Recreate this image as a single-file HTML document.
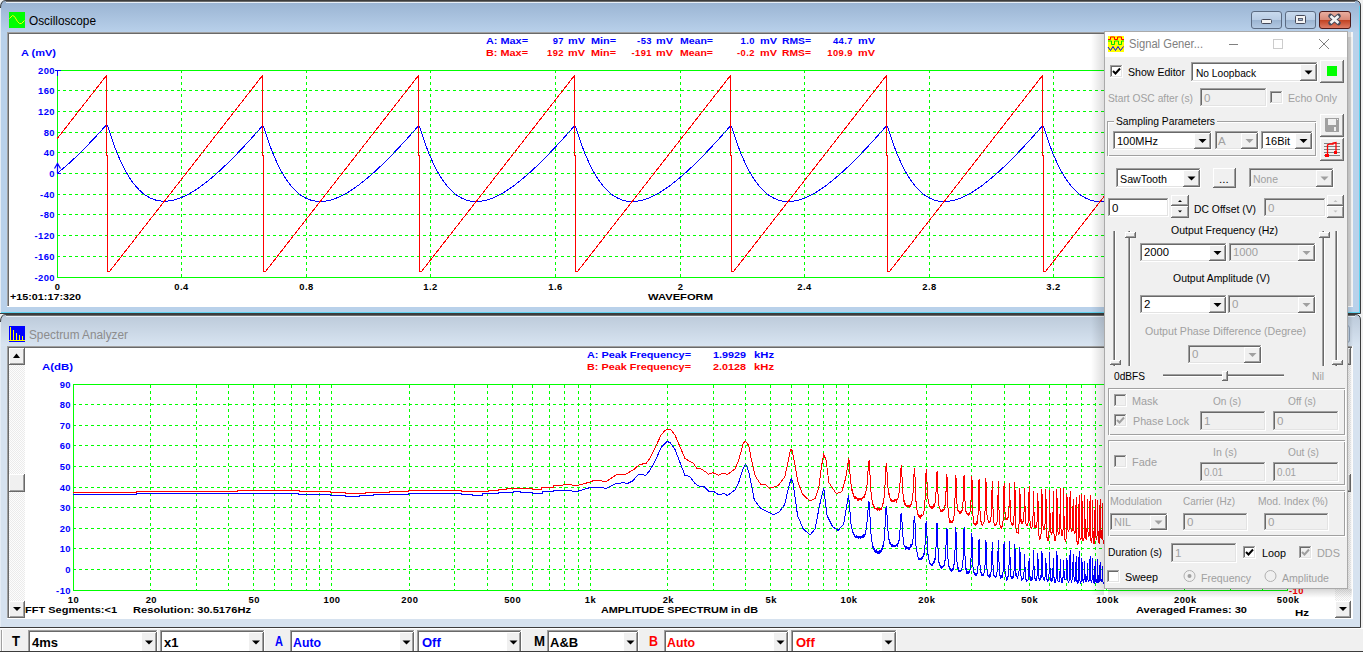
<!DOCTYPE html><html><head><meta charset="utf-8"><style>html,body{margin:0;padding:0;background:#f0f0f0;overflow:hidden}svg{display:block}</style></head><body><svg width="1363" height="652" viewBox="0 0 1363 652"><defs><linearGradient id="gAct" x1="0" y1="0" x2="0" y2="1"><stop offset="0" stop-color="#99b3d2"/><stop offset="1" stop-color="#b8d0ea"/></linearGradient><linearGradient id="gInact" x1="0" y1="0" x2="0" y2="1"><stop offset="0" stop-color="#bccada"/><stop offset="1" stop-color="#d8e4f1"/></linearGradient><linearGradient id="gCap1251" x1="0" y1="0" x2="0" y2="1"><stop offset="0" stop-color="#c9daee"/><stop offset="0.48" stop-color="#b9cde5"/><stop offset="0.5" stop-color="#9bb4d1"/><stop offset="1" stop-color="#b4cae3"/></linearGradient><linearGradient id="gCap1285" x1="0" y1="0" x2="0" y2="1"><stop offset="0" stop-color="#c9daee"/><stop offset="0.48" stop-color="#b9cde5"/><stop offset="0.5" stop-color="#9bb4d1"/><stop offset="1" stop-color="#b4cae3"/></linearGradient><linearGradient id="gClose" x1="0" y1="0" x2="0" y2="1"><stop offset="0" stop-color="#eab0a2"/><stop offset="0.48" stop-color="#d98a78"/><stop offset="0.5" stop-color="#c0401f"/><stop offset="1" stop-color="#e0806a"/></linearGradient><pattern id="dith" width="2" height="2" patternUnits="userSpaceOnUse"><rect width="2" height="2" fill="#fdfdfd"/><rect width="1" height="1" fill="#ebebeb"/><rect x="1" y="1" width="1" height="1" fill="#ebebeb"/></pattern><linearGradient id="shB" x1="0" y1="0" x2="0" y2="1"><stop offset="0" stop-color="#000" stop-opacity="0.16"/><stop offset="1" stop-color="#000" stop-opacity="0"/></linearGradient><linearGradient id="shR" x1="0" y1="0" x2="1" y2="0"><stop offset="0" stop-color="#000" stop-opacity="0.12"/><stop offset="1" stop-color="#000" stop-opacity="0"/></linearGradient><linearGradient id="shL" x1="0" y1="0" x2="1" y2="0"><stop offset="0" stop-color="#000" stop-opacity="0"/><stop offset="1" stop-color="#000" stop-opacity="0.13"/></linearGradient></defs><rect x="0" y="0" width="1363" height="652" fill="#f0f0f0" />
<path d="M0,6 Q0,0 6,0 L1355,0 Q1361,0 1361,6 L1361,314 L0,314 Z" fill="#b9d1ea"/>
<path d="M1,6 Q1,1 6,1 L1355,1 Q1360,1 1360,6 L1360,32 L1,32 Z" fill="url(#gAct)"/>
<path d="M0.5,8 Q0.5,0.5 6,0.5 L1355,0.5 Q1360.5,0.5 1360.5,6 L1360.5,313.5 L0,313.5" fill="none" stroke="#3c3c3c" stroke-width="1"/>
<rect x="0" y="8" width="1" height="305" fill="#e4ecf5" />
<rect x="6" y="1" width="1349" height="1" fill="#6b6b6b" />
<rect x="6" y="2" width="1349" height="1" fill="#e8f0f8" />
<rect x="1359" y="6" width="1" height="307" fill="#5fd3f0" />
<rect x="1" y="312" width="1359" height="1" fill="#5fd3f0" />
<path d="M0,320 Q0,314 6,314 L1355,314 Q1361,314 1361,320 L1361,628 L0,628 Z" fill="#d6e2ef"/>
<path d="M1,320 Q1,315 6,315 L1355,315 Q1360,315 1360,320 L1360,346 L1,346 Z" fill="url(#gInact)"/>
<path d="M0.5,322 Q0.5,314.5 6,314.5 L1355,314.5 Q1360.5,314.5 1360.5,320 L1360.5,627.5 L0,627.5" fill="none" stroke="#3c3c3c" stroke-width="1"/>
<rect x="0" y="322" width="1" height="305" fill="#e4ecf5" />
<rect x="6" y="315" width="1349" height="1" fill="#6b6b6b" />
<rect x="6" y="316" width="1349" height="1" fill="#e8f0f8" />
<rect x="9" y="34" width="1343" height="272" fill="#ffffff" />
<rect x="7" y="32" width="1345" height="1" fill="#a0a0a0" />
<rect x="7" y="32" width="1" height="274" fill="#a0a0a0" />
<rect x="8" y="33" width="1344" height="1" fill="#696969" />
<rect x="8" y="33" width="1" height="273" fill="#696969" />
<rect x="7" y="306" width="1346" height="1" fill="#ffffff" />
<rect x="1352" y="32" width="1" height="275" fill="#ffffff" />
<rect x="9" y="348" width="1343" height="270" fill="#ffffff" />
<rect x="7" y="346" width="1345" height="1" fill="#a0a0a0" />
<rect x="7" y="346" width="1" height="272" fill="#a0a0a0" />
<rect x="8" y="347" width="1344" height="1" fill="#696969" />
<rect x="8" y="347" width="1" height="271" fill="#696969" />
<rect x="7" y="618" width="1346" height="1" fill="#ffffff" />
<rect x="1352" y="346" width="1" height="273" fill="#ffffff" />
<text x="29" y="25" font-size="12" fill="#000000" font-weight="normal" text-anchor="start" font-family="Liberation Sans" textLength="67" lengthAdjust="spacingAndGlyphs" >Oscilloscope</text>
<rect x="9" y="12" width="16" height="16" fill="#00ff00" />
<path d="M9.5,18.5 L12.5,15.5 L14.5,16.5 L17.5,21.5 L19.5,23.5 L21.5,23.5 L24.5,20.5" fill="none" stroke="#ffff00" stroke-width="1"/>
<text x="29" y="339" font-size="12" fill="#8c8c8c" font-weight="normal" text-anchor="start" font-family="Liberation Sans" textLength="99" lengthAdjust="spacingAndGlyphs" >Spectrum Analyzer</text>
<rect x="9" y="326" width="16" height="16" fill="#0000ff" />
<rect x="10" y="327" width="1" height="14" fill="#ffff00" />
<rect x="13" y="330" width="1" height="11" fill="#ffff00" />
<rect x="16" y="333" width="1" height="8" fill="#ffff00" />
<rect x="19" y="335" width="1" height="6" fill="#ffff00" />
<rect x="22" y="336" width="1" height="5" fill="#ffff00" />
<rect x="9" y="340" width="16" height="1" fill="#ffff00" />
<rect x="1251.5" y="11.5" width="30" height="17" rx="2.5" fill="url(#gCap1251)" stroke="#5b6b82"/>
<rect x="1261.5" y="19.5" width="10" height="4" rx="1" fill="#f4f4f4" stroke="#454a5a"/>
<rect x="1285.5" y="11.5" width="30" height="17" rx="2.5" fill="url(#gCap1285)" stroke="#5b6b82"/>
<rect x="1295.5" y="15.5" width="10" height="8" rx="1" fill="#f4f4f4" stroke="#454a5a"/>
<rect x="1298.5" y="18.5" width="4" height="2" fill="#9db5d2" stroke="#454a5a" stroke-width="0.8"/>
<rect x="1319.5" y="11.5" width="31" height="17" rx="2.5" fill="url(#gClose)" stroke="#4d1a1a"/>
<path d="M1330.5,16 L1338.5,23 M1338.5,16 L1330.5,23" stroke="#454a5a" stroke-width="4.6" stroke-linecap="round"/>
<path d="M1330.5,16 L1338.5,23 M1338.5,16 L1330.5,23" stroke="#f4f4f4" stroke-width="2.8" stroke-linecap="butt"/>
<rect x="1347" y="32" width="4" height="274" fill="#d6d6d6" />
<rect x="1351" y="32" width="2" height="274" fill="#f6f6f6" />
<line x1="57" y1="90.5" x2="1104" y2="90.5" stroke="#00ff00" stroke-dasharray="3 3" shape-rendering="crispEdges"/>
<line x1="57" y1="111.5" x2="1104" y2="111.5" stroke="#00ff00" stroke-dasharray="3 3" shape-rendering="crispEdges"/>
<line x1="57" y1="132.5" x2="1104" y2="132.5" stroke="#00ff00" stroke-dasharray="3 3" shape-rendering="crispEdges"/>
<line x1="57" y1="152.5" x2="1104" y2="152.5" stroke="#00ff00" stroke-dasharray="3 3" shape-rendering="crispEdges"/>
<line x1="57" y1="173.5" x2="1104" y2="173.5" stroke="#00ff00" stroke-dasharray="3 3" shape-rendering="crispEdges"/>
<line x1="57" y1="194.5" x2="1104" y2="194.5" stroke="#00ff00" stroke-dasharray="3 3" shape-rendering="crispEdges"/>
<line x1="57" y1="214.5" x2="1104" y2="214.5" stroke="#00ff00" stroke-dasharray="3 3" shape-rendering="crispEdges"/>
<line x1="57" y1="235.5" x2="1104" y2="235.5" stroke="#00ff00" stroke-dasharray="3 3" shape-rendering="crispEdges"/>
<line x1="57" y1="256.5" x2="1104" y2="256.5" stroke="#00ff00" stroke-dasharray="3 3" shape-rendering="crispEdges"/>
<line x1="181.5" y1="70" x2="181.5" y2="277" stroke="#00ff00" stroke-dasharray="3 3" shape-rendering="crispEdges"/>
<line x1="306.5" y1="70" x2="306.5" y2="277" stroke="#00ff00" stroke-dasharray="3 3" shape-rendering="crispEdges"/>
<line x1="430.5" y1="70" x2="430.5" y2="277" stroke="#00ff00" stroke-dasharray="3 3" shape-rendering="crispEdges"/>
<line x1="555.5" y1="70" x2="555.5" y2="277" stroke="#00ff00" stroke-dasharray="3 3" shape-rendering="crispEdges"/>
<line x1="680.5" y1="70" x2="680.5" y2="277" stroke="#00ff00" stroke-dasharray="3 3" shape-rendering="crispEdges"/>
<line x1="804.5" y1="70" x2="804.5" y2="277" stroke="#00ff00" stroke-dasharray="3 3" shape-rendering="crispEdges"/>
<line x1="929.5" y1="70" x2="929.5" y2="277" stroke="#00ff00" stroke-dasharray="3 3" shape-rendering="crispEdges"/>
<line x1="1053.5" y1="70" x2="1053.5" y2="277" stroke="#00ff00" stroke-dasharray="3 3" shape-rendering="crispEdges"/>
<rect x="57" y="70" width="1047" height="1" fill="#00ff00" />
<rect x="57" y="277" width="1047" height="1" fill="#00ff00" />
<rect x="57" y="70" width="1" height="208" fill="#00ff00" />
<rect x="55" y="70" width="6" height="1" fill="#0000ff" />
<rect x="57" y="70" width="1" height="6" fill="#0000ff" />
<text x="55" y="74" font-size="9.4" fill="#0000ff" font-weight="bold" text-anchor="end" font-family="Liberation Sans" letter-spacing="0.45" >200</text>
<text x="55" y="94" font-size="9.4" fill="#0000ff" font-weight="bold" text-anchor="end" font-family="Liberation Sans" letter-spacing="0.45" >160</text>
<text x="55" y="115" font-size="9.4" fill="#0000ff" font-weight="bold" text-anchor="end" font-family="Liberation Sans" letter-spacing="0.45" >120</text>
<text x="55" y="136" font-size="9.4" fill="#0000ff" font-weight="bold" text-anchor="end" font-family="Liberation Sans" letter-spacing="0.45" >80</text>
<text x="55" y="156" font-size="9.4" fill="#0000ff" font-weight="bold" text-anchor="end" font-family="Liberation Sans" letter-spacing="0.45" >40</text>
<text x="55" y="177" font-size="9.4" fill="#0000ff" font-weight="bold" text-anchor="end" font-family="Liberation Sans" letter-spacing="0.45" >0</text>
<text x="55" y="198" font-size="9.4" fill="#0000ff" font-weight="bold" text-anchor="end" font-family="Liberation Sans" letter-spacing="0.45" >-40</text>
<text x="55" y="218" font-size="9.4" fill="#0000ff" font-weight="bold" text-anchor="end" font-family="Liberation Sans" letter-spacing="0.45" >-80</text>
<text x="55" y="239" font-size="9.4" fill="#0000ff" font-weight="bold" text-anchor="end" font-family="Liberation Sans" letter-spacing="0.45" >-120</text>
<text x="55" y="260" font-size="9.4" fill="#0000ff" font-weight="bold" text-anchor="end" font-family="Liberation Sans" letter-spacing="0.45" >-160</text>
<text x="55" y="281" font-size="9.4" fill="#0000ff" font-weight="bold" text-anchor="end" font-family="Liberation Sans" letter-spacing="0.45" >-200</text>
<text x="21" y="56" font-size="9.4" fill="#0000ff" font-weight="bold" text-anchor="start" font-family="Liberation Sans" textLength="35" lengthAdjust="spacingAndGlyphs" >A (mV)</text>
<text x="57.5" y="290" font-size="9.4" fill="#000" font-weight="bold" text-anchor="middle" font-family="Liberation Sans" letter-spacing="0.45" >0</text>
<text x="181.5" y="290" font-size="9.4" fill="#000" font-weight="bold" text-anchor="middle" font-family="Liberation Sans" letter-spacing="0.45" >0.4</text>
<text x="306.5" y="290" font-size="9.4" fill="#000" font-weight="bold" text-anchor="middle" font-family="Liberation Sans" letter-spacing="0.45" >0.8</text>
<text x="430.5" y="290" font-size="9.4" fill="#000" font-weight="bold" text-anchor="middle" font-family="Liberation Sans" letter-spacing="0.45" >1.2</text>
<text x="555.5" y="290" font-size="9.4" fill="#000" font-weight="bold" text-anchor="middle" font-family="Liberation Sans" letter-spacing="0.45" >1.6</text>
<text x="680.5" y="290" font-size="9.4" fill="#000" font-weight="bold" text-anchor="middle" font-family="Liberation Sans" letter-spacing="0.45" >2</text>
<text x="804.5" y="290" font-size="9.4" fill="#000" font-weight="bold" text-anchor="middle" font-family="Liberation Sans" letter-spacing="0.45" >2.4</text>
<text x="929.5" y="290" font-size="9.4" fill="#000" font-weight="bold" text-anchor="middle" font-family="Liberation Sans" letter-spacing="0.45" >2.8</text>
<text x="1053.5" y="290" font-size="9.4" fill="#000" font-weight="bold" text-anchor="middle" font-family="Liberation Sans" letter-spacing="0.45" >3.2</text>
<text x="10" y="300" font-size="9.4" fill="#000" font-weight="bold" text-anchor="start" font-family="Liberation Sans" textLength="71" lengthAdjust="spacingAndGlyphs" >+15:01:17:320</text>
<text x="680.5" y="300" font-size="9.4" fill="#000" font-weight="bold" text-anchor="middle" font-family="Liberation Sans" textLength="65" lengthAdjust="spacingAndGlyphs" >WAVEFORM</text>
<text x="486" y="44" font-size="9.4" fill="#0000ff" font-weight="bold" text-anchor="start" font-family="Liberation Sans" textLength="42" lengthAdjust="spacingAndGlyphs" >A: Max=</text>
<text x="564" y="44" font-size="9.4" fill="#0000ff" font-weight="bold" text-anchor="end" font-family="Liberation Sans" letter-spacing="0.45" >97</text>
<text x="568" y="44" font-size="9.4" fill="#0000ff" font-weight="bold" text-anchor="start" font-family="Liberation Sans" textLength="17" lengthAdjust="spacingAndGlyphs" >mV</text>
<text x="591" y="44" font-size="9.4" fill="#0000ff" font-weight="bold" text-anchor="start" font-family="Liberation Sans" textLength="25" lengthAdjust="spacingAndGlyphs" >Min=</text>
<text x="652" y="44" font-size="9.4" fill="#0000ff" font-weight="bold" text-anchor="end" font-family="Liberation Sans" letter-spacing="0.45" >-53</text>
<text x="656" y="44" font-size="9.4" fill="#0000ff" font-weight="bold" text-anchor="start" font-family="Liberation Sans" textLength="17" lengthAdjust="spacingAndGlyphs" >mV</text>
<text x="680" y="44" font-size="9.4" fill="#0000ff" font-weight="bold" text-anchor="start" font-family="Liberation Sans" textLength="33" lengthAdjust="spacingAndGlyphs" >Mean=</text>
<text x="755" y="44" font-size="9.4" fill="#0000ff" font-weight="bold" text-anchor="end" font-family="Liberation Sans" letter-spacing="0.45" >1.0</text>
<text x="760" y="44" font-size="9.4" fill="#0000ff" font-weight="bold" text-anchor="start" font-family="Liberation Sans" textLength="17" lengthAdjust="spacingAndGlyphs" >mV</text>
<text x="782" y="44" font-size="9.4" fill="#0000ff" font-weight="bold" text-anchor="start" font-family="Liberation Sans" textLength="29" lengthAdjust="spacingAndGlyphs" >RMS=</text>
<text x="853" y="44" font-size="9.4" fill="#0000ff" font-weight="bold" text-anchor="end" font-family="Liberation Sans" letter-spacing="0.45" >44.7</text>
<text x="858" y="44" font-size="9.4" fill="#0000ff" font-weight="bold" text-anchor="start" font-family="Liberation Sans" textLength="17" lengthAdjust="spacingAndGlyphs" >mV</text>
<text x="486" y="56" font-size="9.4" fill="#ff0000" font-weight="bold" text-anchor="start" font-family="Liberation Sans" textLength="42" lengthAdjust="spacingAndGlyphs" >B: Max=</text>
<text x="564" y="56" font-size="9.4" fill="#ff0000" font-weight="bold" text-anchor="end" font-family="Liberation Sans" letter-spacing="0.45" >192</text>
<text x="568" y="56" font-size="9.4" fill="#ff0000" font-weight="bold" text-anchor="start" font-family="Liberation Sans" textLength="17" lengthAdjust="spacingAndGlyphs" >mV</text>
<text x="591" y="56" font-size="9.4" fill="#ff0000" font-weight="bold" text-anchor="start" font-family="Liberation Sans" textLength="25" lengthAdjust="spacingAndGlyphs" >Min=</text>
<text x="652" y="56" font-size="9.4" fill="#ff0000" font-weight="bold" text-anchor="end" font-family="Liberation Sans" letter-spacing="0.45" >-191</text>
<text x="656" y="56" font-size="9.4" fill="#ff0000" font-weight="bold" text-anchor="start" font-family="Liberation Sans" textLength="17" lengthAdjust="spacingAndGlyphs" >mV</text>
<text x="680" y="56" font-size="9.4" fill="#ff0000" font-weight="bold" text-anchor="start" font-family="Liberation Sans" textLength="33" lengthAdjust="spacingAndGlyphs" >Mean=</text>
<text x="755" y="56" font-size="9.4" fill="#ff0000" font-weight="bold" text-anchor="end" font-family="Liberation Sans" letter-spacing="0.45" >-0.2</text>
<text x="760" y="56" font-size="9.4" fill="#ff0000" font-weight="bold" text-anchor="start" font-family="Liberation Sans" textLength="17" lengthAdjust="spacingAndGlyphs" >mV</text>
<text x="782" y="56" font-size="9.4" fill="#ff0000" font-weight="bold" text-anchor="start" font-family="Liberation Sans" textLength="29" lengthAdjust="spacingAndGlyphs" >RMS=</text>
<text x="853" y="56" font-size="9.4" fill="#ff0000" font-weight="bold" text-anchor="end" font-family="Liberation Sans" letter-spacing="0.45" >109.9</text>
<text x="858" y="56" font-size="9.4" fill="#ff0000" font-weight="bold" text-anchor="start" font-family="Liberation Sans" textLength="17" lengthAdjust="spacingAndGlyphs" >mV</text>
<path d="M57.5,173 L57.5,163.5 M54.5,168.5 L57.5,163.5 L60.5,168.5" fill="none" stroke="#0000ff" stroke-width="1.2"/>
<rect x="57" y="173" width="4" height="1" fill="#0000ff" />
<path d="M57.00,173.50 L57.50,173.11 L58.00,172.71 L58.50,172.31 L59.00,171.91 L59.50,171.50 L60.00,171.09 L60.50,170.68 L61.00,170.27 L61.50,169.85 L62.00,169.43 L62.50,169.01 L63.00,168.59 L63.50,168.16 L64.00,167.74 L64.50,167.30 L65.00,166.87 L65.50,166.44 L66.00,166.00 L66.50,165.56 L67.00,165.12 L67.50,164.67 L68.00,164.22 L68.50,163.78 L69.00,163.32 L69.50,162.87 L70.00,162.42 L70.50,161.96 L71.00,161.50 L71.50,161.04 L72.00,160.57 L72.50,160.11 L73.00,159.64 L73.50,159.17 L74.00,158.70 L74.50,158.23 L75.00,157.75 L75.50,157.27 L76.00,156.79 L76.50,156.31 L77.00,155.83 L77.50,155.35 L78.00,154.86 L78.50,154.37 L79.00,153.88 L79.50,153.39 L80.00,152.90 L80.50,152.40 L81.00,151.91 L81.50,151.41 L82.00,150.91 L82.50,150.41 L83.00,149.91 L83.50,149.40 L84.00,148.89 L84.50,148.39 L85.00,147.88 L85.50,147.37 L86.00,146.86 L86.50,146.34 L87.00,145.83 L87.50,145.31 L88.00,144.79 L88.50,144.28 L89.00,143.75 L89.50,143.23 L90.00,142.71 L90.50,142.19 L91.00,141.66 L91.50,141.13 L92.00,140.60 L92.50,140.07 L93.00,139.54 L93.50,139.01 L94.00,138.48 L94.50,137.94 L95.00,137.41 L95.50,136.87 L96.00,136.33 L96.50,135.79 L97.00,135.25 L97.50,134.71 L98.00,134.17 L98.50,133.63 L99.00,133.08 L99.50,132.54 L100.00,131.99 L100.50,131.44 L101.00,130.89 L101.50,130.34 L102.00,129.79 L102.50,129.24 L103.00,128.68 L103.50,128.13 L104.00,127.57 L104.50,127.02 L105.00,126.46 L105.50,125.90 L106.00,125.34 L106.50,124.79 L107.00,124.72 L107.50,125.38 L108.00,126.76 L108.50,128.39 L109.00,130.00 L109.50,131.60 L110.00,133.17 L110.50,134.72 L111.00,136.25 L111.50,137.76 L112.00,139.24 L112.50,140.69 L113.00,142.13 L113.50,143.53 L114.00,144.92 L114.50,146.28 L115.00,147.62 L115.50,148.94 L116.00,150.24 L116.50,151.51 L117.00,152.76 L117.50,153.99 L118.00,155.20 L118.50,156.39 L119.00,157.56 L119.50,158.71 L120.00,159.83 L120.50,160.94 L121.00,162.03 L121.50,163.10 L122.00,164.14 L122.50,165.17 L123.00,166.18 L123.50,167.18 L124.00,168.15 L124.50,169.11 L125.00,170.04 L125.50,170.96 L126.00,171.86 L126.50,172.75 L127.00,173.62 L127.50,174.47 L128.00,175.30 L128.50,176.12 L129.00,176.92 L129.50,177.70 L130.00,178.47 L130.50,179.22 L131.00,179.95 L131.50,180.67 L132.00,181.38 L132.50,182.07 L133.00,182.74 L133.50,183.40 L134.00,184.05 L134.50,184.68 L135.00,185.30 L135.50,185.90 L136.00,186.49 L136.50,187.06 L137.00,187.62 L137.50,188.17 L138.00,188.70 L138.50,189.22 L139.00,189.73 L139.50,190.22 L140.00,190.70 L140.50,191.17 L141.00,191.63 L141.50,192.07 L142.00,192.50 L142.50,192.92 L143.00,193.33 L143.50,193.72 L144.00,194.11 L144.50,194.48 L145.00,194.84 L145.50,195.19 L146.00,195.53 L146.50,195.86 L147.00,196.17 L147.50,196.48 L148.00,196.77 L148.50,197.06 L149.00,197.33 L149.50,197.59 L150.00,197.85 L150.50,198.09 L151.00,198.32 L151.50,198.54 L152.00,198.76 L152.50,198.96 L153.00,199.16 L153.50,199.34 L154.00,199.51 L154.50,199.68 L155.00,199.84 L155.50,199.99 L156.00,200.13 L156.50,200.26 L157.00,200.38 L157.50,200.49 L158.00,200.59 L158.50,200.69 L159.00,200.78 L159.50,200.86 L160.00,200.93 L160.50,200.99 L161.00,201.05 L161.50,201.09 L162.00,201.13 L162.50,201.17 L163.00,201.19 L163.50,201.21 L164.00,201.22 L164.50,201.22 L165.00,201.21 L165.50,201.20 L166.00,201.18 L166.50,201.15 L167.00,201.12 L167.50,201.08 L168.00,201.03 L168.50,200.98 L169.00,200.92 L169.50,200.85 L170.00,200.78 L170.50,200.70 L171.00,200.61 L171.50,200.52 L172.00,200.42 L172.50,200.32 L173.00,200.20 L173.50,200.09 L174.00,199.96 L174.50,199.84 L175.00,199.70 L175.50,199.56 L176.00,199.42 L176.50,199.26 L177.00,199.11 L177.50,198.94 L178.00,198.78 L178.50,198.60 L179.00,198.42 L179.50,198.24 L180.00,198.05 L180.50,197.86 L181.00,197.66 L181.50,197.45 L182.00,197.25 L182.50,197.03 L183.00,196.81 L183.50,196.59 L184.00,196.36 L184.50,196.13 L185.00,195.89 L185.50,195.65 L186.00,195.40 L186.50,195.15 L187.00,194.90 L187.50,194.64 L188.00,194.37 L188.50,194.10 L189.00,193.83 L189.50,193.56 L190.00,193.27 L190.50,192.99 L191.00,192.70 L191.50,192.41 L192.00,192.11 L192.50,191.81 L193.00,191.51 L193.50,191.20 L194.00,190.89 L194.50,190.57 L195.00,190.25 L195.50,189.93 L196.00,189.60 L196.50,189.27 L197.00,188.94 L197.50,188.60 L198.00,188.26 L198.50,187.91 L199.00,187.57 L199.50,187.22 L200.00,186.86 L200.50,186.50 L201.00,186.14 L201.50,185.78 L202.00,185.41 L202.50,185.04 L203.00,184.67 L203.50,184.30 L204.00,183.92 L204.50,183.53 L205.00,183.15 L205.50,182.76 L206.00,182.37 L206.50,181.98 L207.00,181.58 L207.50,181.18 L208.00,180.78 L208.50,180.38 L209.00,179.97 L209.50,179.56 L210.00,179.15 L210.50,178.73 L211.00,178.32 L211.50,177.90 L212.00,177.47 L212.50,177.05 L213.00,176.62 L213.50,176.19 L214.00,175.76 L214.50,175.32 L215.00,174.89 L215.50,174.45 L216.00,174.01 L216.50,173.56 L217.00,173.12 L217.50,172.67 L218.00,172.22 L218.50,171.77 L219.00,171.31 L219.50,170.86 L220.00,170.40 L220.50,169.94 L221.00,169.47 L221.50,169.01 L222.00,168.54 L222.50,168.07 L223.00,167.60 L223.50,167.13 L224.00,166.65 L224.50,166.18 L225.00,165.70 L225.50,165.22 L226.00,164.74 L226.50,164.25 L227.00,163.77 L227.50,163.28 L228.00,162.79 L228.50,162.30 L229.00,161.81 L229.50,161.32 L230.00,160.82 L230.50,160.32 L231.00,159.82 L231.50,159.32 L232.00,158.82 L232.50,158.32 L233.00,157.81 L233.50,157.30 L234.00,156.80 L234.50,156.29 L235.00,155.78 L235.50,155.26 L236.00,154.75 L236.50,154.23 L237.00,153.72 L237.50,153.20 L238.00,152.68 L238.50,152.16 L239.00,151.63 L239.50,151.11 L240.00,150.58 L240.50,150.06 L241.00,149.53 L241.50,149.00 L242.00,148.47 L242.50,147.94 L243.00,147.41 L243.50,146.87 L244.00,146.34 L244.50,145.80 L245.00,145.26 L245.50,144.72 L246.00,144.18 L246.50,143.64 L247.00,143.10 L247.50,142.56 L248.00,142.01 L248.50,141.47 L249.00,140.92 L249.50,140.37 L250.00,139.82 L250.50,139.27 L251.00,138.72 L251.50,138.17 L252.00,137.62 L252.50,137.07 L253.00,136.51 L253.50,135.95 L254.00,135.40 L254.50,134.84 L255.00,134.28 L255.50,133.72 L256.00,133.16 L256.50,132.60 L257.00,132.04 L257.50,131.48 L258.00,130.91 L258.50,130.35 L259.00,129.78 L259.50,129.21 L260.00,128.65 L260.50,128.08 L261.00,127.51 L261.50,126.94 L262.00,126.37 L262.50,125.81 L263.00,125.72 L263.50,126.37 L264.00,127.74 L264.50,129.36 L265.00,130.96 L265.50,132.54 L266.00,134.11 L266.50,135.65 L267.00,137.17 L267.50,138.66 L268.00,140.13 L268.50,141.58 L269.00,143.00 L269.50,144.40 L270.00,145.77 L270.50,147.13 L271.00,148.46 L271.50,149.77 L272.00,151.05 L272.50,152.32 L273.00,153.56 L273.50,154.78 L274.00,155.98 L274.50,157.16 L275.00,158.32 L275.50,159.46 L276.00,160.58 L276.50,161.68 L277.00,162.76 L277.50,163.82 L278.00,164.86 L278.50,165.88 L279.00,166.88 L279.50,167.86 L280.00,168.83 L280.50,169.78 L281.00,170.71 L281.50,171.62 L282.00,172.51 L282.50,173.39 L283.00,174.25 L283.50,175.09 L284.00,175.92 L284.50,176.73 L285.00,177.52 L285.50,178.30 L286.00,179.06 L286.50,179.80 L287.00,180.53 L287.50,181.25 L288.00,181.95 L288.50,182.63 L289.00,183.30 L289.50,183.95 L290.00,184.59 L290.50,185.22 L291.00,185.83 L291.50,186.42 L292.00,187.00 L292.50,187.57 L293.00,188.13 L293.50,188.67 L294.00,189.20 L294.50,189.71 L295.00,190.21 L295.50,190.70 L296.00,191.18 L296.50,191.64 L297.00,192.09 L297.50,192.53 L298.00,192.95 L298.50,193.37 L299.00,193.77 L299.50,194.16 L300.00,194.54 L300.50,194.91 L301.00,195.26 L301.50,195.61 L302.00,195.94 L302.50,196.26 L303.00,196.57 L303.50,196.88 L304.00,197.17 L304.50,197.45 L305.00,197.71 L305.50,197.97 L306.00,198.22 L306.50,198.46 L307.00,198.69 L307.50,198.91 L308.00,199.12 L308.50,199.32 L309.00,199.51 L309.50,199.69 L310.00,199.86 L310.50,200.02 L311.00,200.17 L311.50,200.32 L312.00,200.45 L312.50,200.58 L313.00,200.70 L313.50,200.81 L314.00,200.91 L314.50,201.00 L315.00,201.08 L315.50,201.16 L316.00,201.23 L316.50,201.29 L317.00,201.34 L317.50,201.38 L318.00,201.42 L318.50,201.45 L319.00,201.47 L319.50,201.48 L320.00,201.49 L320.50,201.49 L321.00,201.48 L321.50,201.46 L322.00,201.44 L322.50,201.41 L323.00,201.38 L323.50,201.33 L324.00,201.28 L324.50,201.23 L325.00,201.16 L325.50,201.09 L326.00,201.02 L326.50,200.93 L327.00,200.85 L327.50,200.75 L328.00,200.65 L328.50,200.54 L329.00,200.43 L329.50,200.31 L330.00,200.18 L330.50,200.05 L331.00,199.91 L331.50,199.77 L332.00,199.62 L332.50,199.47 L333.00,199.31 L333.50,199.15 L334.00,198.98 L334.50,198.80 L335.00,198.62 L335.50,198.43 L336.00,198.24 L336.50,198.05 L337.00,197.84 L337.50,197.64 L338.00,197.43 L338.50,197.21 L339.00,196.99 L339.50,196.77 L340.00,196.54 L340.50,196.30 L341.00,196.06 L341.50,195.82 L342.00,195.57 L342.50,195.32 L343.00,195.06 L343.50,194.80 L344.00,194.53 L344.50,194.26 L345.00,193.99 L345.50,193.71 L346.00,193.43 L346.50,193.14 L347.00,192.85 L347.50,192.55 L348.00,192.26 L348.50,191.95 L349.00,191.65 L349.50,191.34 L350.00,191.02 L350.50,190.71 L351.00,190.39 L351.50,190.06 L352.00,189.73 L352.50,189.40 L353.00,189.07 L353.50,188.73 L354.00,188.38 L354.50,188.04 L355.00,187.69 L355.50,187.34 L356.00,186.98 L356.50,186.62 L357.00,186.26 L357.50,185.90 L358.00,185.53 L358.50,185.16 L359.00,184.78 L359.50,184.41 L360.00,184.03 L360.50,183.64 L361.00,183.26 L361.50,182.87 L362.00,182.48 L362.50,182.08 L363.00,181.69 L363.50,181.29 L364.00,180.88 L364.50,180.48 L365.00,180.07 L365.50,179.66 L366.00,179.24 L366.50,178.83 L367.00,178.41 L367.50,177.99 L368.00,177.57 L368.50,177.14 L369.00,176.71 L369.50,176.28 L370.00,175.85 L370.50,175.41 L371.00,174.97 L371.50,174.53 L372.00,174.09 L372.50,173.65 L373.00,173.20 L373.50,172.75 L374.00,172.30 L374.50,171.85 L375.00,171.39 L375.50,170.93 L376.00,170.47 L376.50,170.01 L377.00,169.55 L377.50,169.08 L378.00,168.61 L378.50,168.15 L379.00,167.67 L379.50,167.20 L380.00,166.72 L380.50,166.25 L381.00,165.77 L381.50,165.29 L382.00,164.81 L382.50,164.32 L383.00,163.83 L383.50,163.35 L384.00,162.86 L384.50,162.37 L385.00,161.87 L385.50,161.38 L386.00,160.88 L386.50,160.38 L387.00,159.88 L387.50,159.38 L388.00,158.88 L388.50,158.37 L389.00,157.87 L389.50,157.36 L390.00,156.85 L390.50,156.34 L391.00,155.83 L391.50,155.32 L392.00,154.80 L392.50,154.29 L393.00,153.77 L393.50,153.25 L394.00,152.73 L394.50,152.21 L395.00,151.68 L395.50,151.16 L396.00,150.63 L396.50,150.11 L397.00,149.58 L397.50,149.05 L398.00,148.52 L398.50,147.98 L399.00,147.45 L399.50,146.92 L400.00,146.38 L400.50,145.84 L401.00,145.31 L401.50,144.77 L402.00,144.23 L402.50,143.68 L403.00,143.14 L403.50,142.60 L404.00,142.05 L404.50,141.51 L405.00,140.96 L405.50,140.41 L406.00,139.86 L406.50,139.31 L407.00,138.76 L407.50,138.21 L408.00,137.66 L408.50,137.10 L409.00,136.55 L409.50,135.99 L410.00,135.43 L410.50,134.88 L411.00,134.32 L411.50,133.76 L412.00,133.20 L412.50,132.63 L413.00,132.07 L413.50,131.51 L414.00,130.94 L414.50,130.38 L415.00,129.81 L415.50,129.25 L416.00,128.68 L416.50,128.11 L417.00,127.54 L417.50,126.97 L418.00,126.40 L418.50,125.83 L419.00,125.75 L419.50,126.39 L420.00,127.76 L420.50,129.38 L421.00,130.99 L421.50,132.57 L422.00,134.13 L422.50,135.68 L423.00,137.19 L423.50,138.69 L424.00,140.16 L424.50,141.60 L425.00,143.02 L425.50,144.42 L426.00,145.80 L426.50,147.15 L427.00,148.48 L427.50,149.79 L428.00,151.08 L428.50,152.34 L429.00,153.58 L429.50,154.80 L430.00,156.00 L430.50,157.18 L431.00,158.34 L431.50,159.48 L432.00,160.60 L432.50,161.70 L433.00,162.78 L433.50,163.84 L434.00,164.88 L434.50,165.90 L435.00,166.90 L435.50,167.88 L436.00,168.85 L436.50,169.80 L437.00,170.73 L437.50,171.64 L438.00,172.53 L438.50,173.41 L439.00,174.27 L439.50,175.11 L440.00,175.94 L440.50,176.75 L441.00,177.54 L441.50,178.32 L442.00,179.08 L442.50,179.82 L443.00,180.55 L443.50,181.26 L444.00,181.96 L444.50,182.65 L445.00,183.31 L445.50,183.97 L446.00,184.61 L446.50,185.23 L447.00,185.84 L447.50,186.44 L448.00,187.02 L448.50,187.59 L449.00,188.14 L449.50,188.68 L450.00,189.21 L450.50,189.72 L451.00,190.23 L451.50,190.71 L452.00,191.19 L452.50,191.65 L453.00,192.10 L453.50,192.54 L454.00,192.97 L454.50,193.38 L455.00,193.78 L455.50,194.17 L456.00,194.55 L456.50,194.92 L457.00,195.28 L457.50,195.62 L458.00,195.95 L458.50,196.27 L459.00,196.59 L459.50,196.89 L460.00,197.18 L460.50,197.46 L461.00,197.73 L461.50,197.98 L462.00,198.23 L462.50,198.47 L463.00,198.70 L463.50,198.92 L464.00,199.13 L464.50,199.33 L465.00,199.52 L465.50,199.70 L466.00,199.87 L466.50,200.03 L467.00,200.18 L467.50,200.33 L468.00,200.46 L468.50,200.59 L469.00,200.71 L469.50,200.82 L470.00,200.92 L470.50,201.01 L471.00,201.09 L471.50,201.17 L472.00,201.24 L472.50,201.30 L473.00,201.35 L473.50,201.39 L474.00,201.43 L474.50,201.46 L475.00,201.48 L475.50,201.49 L476.00,201.50 L476.50,201.50 L477.00,201.49 L477.50,201.47 L478.00,201.45 L478.50,201.42 L479.00,201.38 L479.50,201.34 L480.00,201.29 L480.50,201.23 L481.00,201.17 L481.50,201.10 L482.00,201.02 L482.50,200.94 L483.00,200.85 L483.50,200.76 L484.00,200.66 L484.50,200.55 L485.00,200.43 L485.50,200.31 L486.00,200.19 L486.50,200.06 L487.00,199.92 L487.50,199.78 L488.00,199.63 L488.50,199.48 L489.00,199.32 L489.50,199.15 L490.00,198.98 L490.50,198.81 L491.00,198.62 L491.50,198.44 L492.00,198.25 L492.50,198.05 L493.00,197.85 L493.50,197.64 L494.00,197.43 L494.50,197.22 L495.00,197.00 L495.50,196.77 L496.00,196.54 L496.50,196.31 L497.00,196.07 L497.50,195.82 L498.00,195.57 L498.50,195.32 L499.00,195.06 L499.50,194.80 L500.00,194.54 L500.50,194.27 L501.00,193.99 L501.50,193.71 L502.00,193.43 L502.50,193.14 L503.00,192.85 L503.50,192.56 L504.00,192.26 L504.50,191.96 L505.00,191.65 L505.50,191.34 L506.00,191.03 L506.50,190.71 L507.00,190.39 L507.50,190.06 L508.00,189.74 L508.50,189.40 L509.00,189.07 L509.50,188.73 L510.00,188.39 L510.50,188.04 L511.00,187.69 L511.50,187.34 L512.00,186.99 L512.50,186.63 L513.00,186.27 L513.50,185.90 L514.00,185.53 L514.50,185.16 L515.00,184.79 L515.50,184.41 L516.00,184.03 L516.50,183.65 L517.00,183.26 L517.50,182.87 L518.00,182.48 L518.50,182.09 L519.00,181.69 L519.50,181.29 L520.00,180.89 L520.50,180.48 L521.00,180.07 L521.50,179.66 L522.00,179.25 L522.50,178.83 L523.00,178.41 L523.50,177.99 L524.00,177.57 L524.50,177.14 L525.00,176.71 L525.50,176.28 L526.00,175.85 L526.50,175.41 L527.00,174.98 L527.50,174.54 L528.00,174.09 L528.50,173.65 L529.00,173.20 L529.50,172.75 L530.00,172.30 L530.50,171.85 L531.00,171.39 L531.50,170.94 L532.00,170.48 L532.50,170.01 L533.00,169.55 L533.50,169.08 L534.00,168.62 L534.50,168.15 L535.00,167.68 L535.50,167.20 L536.00,166.73 L536.50,166.25 L537.00,165.77 L537.50,165.29 L538.00,164.81 L538.50,164.32 L539.00,163.84 L539.50,163.35 L540.00,162.86 L540.50,162.37 L541.00,161.87 L541.50,161.38 L542.00,160.88 L542.50,160.38 L543.00,159.88 L543.50,159.38 L544.00,158.88 L544.50,158.38 L545.00,157.87 L545.50,157.36 L546.00,156.85 L546.50,156.34 L547.00,155.83 L547.50,155.32 L548.00,154.80 L548.50,154.29 L549.00,153.77 L549.50,153.25 L550.00,152.73 L550.50,152.21 L551.00,151.68 L551.50,151.16 L552.00,150.63 L552.50,150.11 L553.00,149.58 L553.50,149.05 L554.00,148.52 L554.50,147.99 L555.00,147.45 L555.50,146.92 L556.00,146.38 L556.50,145.85 L557.00,145.31 L557.50,144.77 L558.00,144.23 L558.50,143.69 L559.00,143.14 L559.50,142.60 L560.00,142.05 L560.50,141.51 L561.00,140.96 L561.50,140.41 L562.00,139.86 L562.50,139.31 L563.00,138.76 L563.50,138.21 L564.00,137.66 L564.50,137.10 L565.00,136.55 L565.50,135.99 L566.00,135.43 L566.50,134.88 L567.00,134.32 L567.50,133.76 L568.00,133.20 L568.50,132.64 L569.00,132.07 L569.50,131.51 L570.00,130.94 L570.50,130.38 L571.00,129.81 L571.50,129.25 L572.00,128.68 L572.50,128.11 L573.00,127.54 L573.50,126.97 L574.00,126.40 L574.50,125.84 L575.00,125.75 L575.50,126.40 L576.00,127.77 L576.50,129.39 L577.00,130.99 L577.50,132.57 L578.00,134.13 L578.50,135.68 L579.00,137.19 L579.50,138.69 L580.00,140.16 L580.50,141.60 L581.00,143.03 L581.50,144.42 L582.00,145.80 L582.50,147.15 L583.00,148.48 L583.50,149.79 L584.00,151.08 L584.50,152.34 L585.00,153.58 L585.50,154.80 L586.00,156.01 L586.50,157.18 L587.00,158.34 L587.50,159.48 L588.00,160.60 L588.50,161.70 L589.00,162.78 L589.50,163.84 L590.00,164.88 L590.50,165.90 L591.00,166.90 L591.50,167.89 L592.00,168.85 L592.50,169.80 L593.00,170.73 L593.50,171.64 L594.00,172.53 L594.50,173.41 L595.00,174.27 L595.50,175.11 L596.00,175.94 L596.50,176.75 L597.00,177.54 L597.50,178.32 L598.00,179.08 L598.50,179.82 L599.00,180.55 L599.50,181.27 L600.00,181.96 L600.50,182.65 L601.00,183.31 L601.50,183.97 L602.00,184.61 L602.50,185.23 L603.00,185.84 L603.50,186.44 L604.00,187.02 L604.50,187.59 L605.00,188.14 L605.50,188.68 L606.00,189.21 L606.50,189.72 L607.00,190.23 L607.50,190.71 L608.00,191.19 L608.50,191.65 L609.00,192.10 L609.50,192.54 L610.00,192.97 L610.50,193.38 L611.00,193.78 L611.50,194.17 L612.00,194.55 L612.50,194.92 L613.00,195.28 L613.50,195.62 L614.00,195.95 L614.50,196.28 L615.00,196.59 L615.50,196.89 L616.00,197.18 L616.50,197.46 L617.00,197.73 L617.50,197.98 L618.00,198.23 L618.50,198.47 L619.00,198.70 L619.50,198.92 L620.00,199.13 L620.50,199.33 L621.00,199.52 L621.50,199.70 L622.00,199.87 L622.50,200.03 L623.00,200.18 L623.50,200.33 L624.00,200.46 L624.50,200.59 L625.00,200.71 L625.50,200.82 L626.00,200.92 L626.50,201.01 L627.00,201.09 L627.50,201.17 L628.00,201.24 L628.50,201.30 L629.00,201.35 L629.50,201.39 L630.00,201.43 L630.50,201.46 L631.00,201.48 L631.50,201.49 L632.00,201.50 L632.50,201.50 L633.00,201.49 L633.50,201.47 L634.00,201.45 L634.50,201.42 L635.00,201.38 L635.50,201.34 L636.00,201.29 L636.50,201.23 L637.00,201.17 L637.50,201.10 L638.00,201.02 L638.50,200.94 L639.00,200.85 L639.50,200.76 L640.00,200.66 L640.50,200.55 L641.00,200.43 L641.50,200.31 L642.00,200.19 L642.50,200.06 L643.00,199.92 L643.50,199.78 L644.00,199.63 L644.50,199.48 L645.00,199.32 L645.50,199.15 L646.00,198.98 L646.50,198.81 L647.00,198.63 L647.50,198.44 L648.00,198.25 L648.50,198.05 L649.00,197.85 L649.50,197.64 L650.00,197.43 L650.50,197.22 L651.00,197.00 L651.50,196.77 L652.00,196.54 L652.50,196.31 L653.00,196.07 L653.50,195.82 L654.00,195.57 L654.50,195.32 L655.00,195.06 L655.50,194.80 L656.00,194.54 L656.50,194.27 L657.00,193.99 L657.50,193.71 L658.00,193.43 L658.50,193.14 L659.00,192.85 L659.50,192.56 L660.00,192.26 L660.50,191.96 L661.00,191.65 L661.50,191.34 L662.00,191.03 L662.50,190.71 L663.00,190.39 L663.50,190.06 L664.00,189.74 L664.50,189.40 L665.00,189.07 L665.50,188.73 L666.00,188.39 L666.50,188.04 L667.00,187.69 L667.50,187.34 L668.00,186.99 L668.50,186.63 L669.00,186.27 L669.50,185.90 L670.00,185.53 L670.50,185.16 L671.00,184.79 L671.50,184.41 L672.00,184.03 L672.50,183.65 L673.00,183.26 L673.50,182.87 L674.00,182.48 L674.50,182.09 L675.00,181.69 L675.50,181.29 L676.00,180.89 L676.50,180.48 L677.00,180.07 L677.50,179.66 L678.00,179.25 L678.50,178.83 L679.00,178.41 L679.50,177.99 L680.00,177.57 L680.50,177.14 L681.00,176.71 L681.50,176.28 L682.00,175.85 L682.50,175.41 L683.00,174.98 L683.50,174.54 L684.00,174.09 L684.50,173.65 L685.00,173.20 L685.50,172.75 L686.00,172.30 L686.50,171.85 L687.00,171.39 L687.50,170.94 L688.00,170.48 L688.50,170.01 L689.00,169.55 L689.50,169.08 L690.00,168.62 L690.50,168.15 L691.00,167.68 L691.50,167.20 L692.00,166.73 L692.50,166.25 L693.00,165.77 L693.50,165.29 L694.00,164.81 L694.50,164.32 L695.00,163.84 L695.50,163.35 L696.00,162.86 L696.50,162.37 L697.00,161.87 L697.50,161.38 L698.00,160.88 L698.50,160.38 L699.00,159.88 L699.50,159.38 L700.00,158.88 L700.50,158.38 L701.00,157.87 L701.50,157.36 L702.00,156.85 L702.50,156.34 L703.00,155.83 L703.50,155.32 L704.00,154.80 L704.50,154.29 L705.00,153.77 L705.50,153.25 L706.00,152.73 L706.50,152.21 L707.00,151.68 L707.50,151.16 L708.00,150.63 L708.50,150.11 L709.00,149.58 L709.50,149.05 L710.00,148.52 L710.50,147.99 L711.00,147.45 L711.50,146.92 L712.00,146.38 L712.50,145.85 L713.00,145.31 L713.50,144.77 L714.00,144.23 L714.50,143.69 L715.00,143.14 L715.50,142.60 L716.00,142.05 L716.50,141.51 L717.00,140.96 L717.50,140.41 L718.00,139.86 L718.50,139.31 L719.00,138.76 L719.50,138.21 L720.00,137.66 L720.50,137.10 L721.00,136.55 L721.50,135.99 L722.00,135.43 L722.50,134.88 L723.00,134.32 L723.50,133.76 L724.00,133.20 L724.50,132.64 L725.00,132.07 L725.50,131.51 L726.00,130.94 L726.50,130.38 L727.00,129.81 L727.50,129.25 L728.00,128.68 L728.50,128.11 L729.00,127.54 L729.50,126.97 L730.00,126.40 L730.50,125.84 L731.00,125.75 L731.50,126.40 L732.00,127.77 L732.50,129.39 L733.00,130.99 L733.50,132.57 L734.00,134.13 L734.50,135.68 L735.00,137.19 L735.50,138.69 L736.00,140.16 L736.50,141.60 L737.00,143.03 L737.50,144.42 L738.00,145.80 L738.50,147.15 L739.00,148.48 L739.50,149.79 L740.00,151.08 L740.50,152.34 L741.00,153.58 L741.50,154.80 L742.00,156.01 L742.50,157.18 L743.00,158.34 L743.50,159.48 L744.00,160.60 L744.50,161.70 L745.00,162.78 L745.50,163.84 L746.00,164.88 L746.50,165.90 L747.00,166.90 L747.50,167.89 L748.00,168.85 L748.50,169.80 L749.00,170.73 L749.50,171.64 L750.00,172.53 L750.50,173.41 L751.00,174.27 L751.50,175.11 L752.00,175.94 L752.50,176.75 L753.00,177.54 L753.50,178.32 L754.00,179.08 L754.50,179.82 L755.00,180.55 L755.50,181.27 L756.00,181.96 L756.50,182.65 L757.00,183.31 L757.50,183.97 L758.00,184.61 L758.50,185.23 L759.00,185.84 L759.50,186.44 L760.00,187.02 L760.50,187.59 L761.00,188.14 L761.50,188.68 L762.00,189.21 L762.50,189.72 L763.00,190.23 L763.50,190.71 L764.00,191.19 L764.50,191.65 L765.00,192.10 L765.50,192.54 L766.00,192.97 L766.50,193.38 L767.00,193.78 L767.50,194.17 L768.00,194.55 L768.50,194.92 L769.00,195.28 L769.50,195.62 L770.00,195.95 L770.50,196.28 L771.00,196.59 L771.50,196.89 L772.00,197.18 L772.50,197.46 L773.00,197.73 L773.50,197.98 L774.00,198.23 L774.50,198.47 L775.00,198.70 L775.50,198.92 L776.00,199.13 L776.50,199.33 L777.00,199.52 L777.50,199.70 L778.00,199.87 L778.50,200.03 L779.00,200.18 L779.50,200.33 L780.00,200.46 L780.50,200.59 L781.00,200.71 L781.50,200.82 L782.00,200.92 L782.50,201.01 L783.00,201.09 L783.50,201.17 L784.00,201.24 L784.50,201.30 L785.00,201.35 L785.50,201.39 L786.00,201.43 L786.50,201.46 L787.00,201.48 L787.50,201.49 L788.00,201.50 L788.50,201.50 L789.00,201.49 L789.50,201.47 L790.00,201.45 L790.50,201.42 L791.00,201.38 L791.50,201.34 L792.00,201.29 L792.50,201.23 L793.00,201.17 L793.50,201.10 L794.00,201.02 L794.50,200.94 L795.00,200.85 L795.50,200.76 L796.00,200.66 L796.50,200.55 L797.00,200.43 L797.50,200.31 L798.00,200.19 L798.50,200.06 L799.00,199.92 L799.50,199.78 L800.00,199.63 L800.50,199.48 L801.00,199.32 L801.50,199.15 L802.00,198.98 L802.50,198.81 L803.00,198.63 L803.50,198.44 L804.00,198.25 L804.50,198.05 L805.00,197.85 L805.50,197.64 L806.00,197.43 L806.50,197.22 L807.00,197.00 L807.50,196.77 L808.00,196.54 L808.50,196.31 L809.00,196.07 L809.50,195.82 L810.00,195.57 L810.50,195.32 L811.00,195.06 L811.50,194.80 L812.00,194.54 L812.50,194.27 L813.00,193.99 L813.50,193.71 L814.00,193.43 L814.50,193.14 L815.00,192.85 L815.50,192.56 L816.00,192.26 L816.50,191.96 L817.00,191.65 L817.50,191.34 L818.00,191.03 L818.50,190.71 L819.00,190.39 L819.50,190.06 L820.00,189.74 L820.50,189.40 L821.00,189.07 L821.50,188.73 L822.00,188.39 L822.50,188.04 L823.00,187.69 L823.50,187.34 L824.00,186.99 L824.50,186.63 L825.00,186.27 L825.50,185.90 L826.00,185.53 L826.50,185.16 L827.00,184.79 L827.50,184.41 L828.00,184.03 L828.50,183.65 L829.00,183.26 L829.50,182.87 L830.00,182.48 L830.50,182.09 L831.00,181.69 L831.50,181.29 L832.00,180.89 L832.50,180.48 L833.00,180.07 L833.50,179.66 L834.00,179.25 L834.50,178.83 L835.00,178.41 L835.50,177.99 L836.00,177.57 L836.50,177.14 L837.00,176.71 L837.50,176.28 L838.00,175.85 L838.50,175.41 L839.00,174.98 L839.50,174.54 L840.00,174.09 L840.50,173.65 L841.00,173.20 L841.50,172.75 L842.00,172.30 L842.50,171.85 L843.00,171.39 L843.50,170.94 L844.00,170.48 L844.50,170.01 L845.00,169.55 L845.50,169.08 L846.00,168.62 L846.50,168.15 L847.00,167.68 L847.50,167.20 L848.00,166.73 L848.50,166.25 L849.00,165.77 L849.50,165.29 L850.00,164.81 L850.50,164.32 L851.00,163.84 L851.50,163.35 L852.00,162.86 L852.50,162.37 L853.00,161.87 L853.50,161.38 L854.00,160.88 L854.50,160.38 L855.00,159.88 L855.50,159.38 L856.00,158.88 L856.50,158.38 L857.00,157.87 L857.50,157.36 L858.00,156.85 L858.50,156.34 L859.00,155.83 L859.50,155.32 L860.00,154.80 L860.50,154.29 L861.00,153.77 L861.50,153.25 L862.00,152.73 L862.50,152.21 L863.00,151.68 L863.50,151.16 L864.00,150.63 L864.50,150.11 L865.00,149.58 L865.50,149.05 L866.00,148.52 L866.50,147.99 L867.00,147.45 L867.50,146.92 L868.00,146.38 L868.50,145.85 L869.00,145.31 L869.50,144.77 L870.00,144.23 L870.50,143.69 L871.00,143.14 L871.50,142.60 L872.00,142.05 L872.50,141.51 L873.00,140.96 L873.50,140.41 L874.00,139.86 L874.50,139.31 L875.00,138.76 L875.50,138.21 L876.00,137.66 L876.50,137.10 L877.00,136.55 L877.50,135.99 L878.00,135.43 L878.50,134.88 L879.00,134.32 L879.50,133.76 L880.00,133.20 L880.50,132.64 L881.00,132.07 L881.50,131.51 L882.00,130.94 L882.50,130.38 L883.00,129.81 L883.50,129.25 L884.00,128.68 L884.50,128.11 L885.00,127.54 L885.50,126.97 L886.00,126.40 L886.50,125.84 L887.00,125.75 L887.50,126.40 L888.00,127.77 L888.50,129.39 L889.00,130.99 L889.50,132.57 L890.00,134.13 L890.50,135.68 L891.00,137.19 L891.50,138.69 L892.00,140.16 L892.50,141.60 L893.00,143.03 L893.50,144.42 L894.00,145.80 L894.50,147.15 L895.00,148.48 L895.50,149.79 L896.00,151.08 L896.50,152.34 L897.00,153.58 L897.50,154.80 L898.00,156.01 L898.50,157.18 L899.00,158.34 L899.50,159.48 L900.00,160.60 L900.50,161.70 L901.00,162.78 L901.50,163.84 L902.00,164.88 L902.50,165.90 L903.00,166.90 L903.50,167.89 L904.00,168.85 L904.50,169.80 L905.00,170.73 L905.50,171.64 L906.00,172.53 L906.50,173.41 L907.00,174.27 L907.50,175.11 L908.00,175.94 L908.50,176.75 L909.00,177.54 L909.50,178.32 L910.00,179.08 L910.50,179.82 L911.00,180.55 L911.50,181.27 L912.00,181.96 L912.50,182.65 L913.00,183.31 L913.50,183.97 L914.00,184.61 L914.50,185.23 L915.00,185.84 L915.50,186.44 L916.00,187.02 L916.50,187.59 L917.00,188.14 L917.50,188.68 L918.00,189.21 L918.50,189.72 L919.00,190.23 L919.50,190.71 L920.00,191.19 L920.50,191.65 L921.00,192.10 L921.50,192.54 L922.00,192.97 L922.50,193.38 L923.00,193.78 L923.50,194.17 L924.00,194.55 L924.50,194.92 L925.00,195.28 L925.50,195.62 L926.00,195.95 L926.50,196.28 L927.00,196.59 L927.50,196.89 L928.00,197.18 L928.50,197.46 L929.00,197.73 L929.50,197.98 L930.00,198.23 L930.50,198.47 L931.00,198.70 L931.50,198.92 L932.00,199.13 L932.50,199.33 L933.00,199.52 L933.50,199.70 L934.00,199.87 L934.50,200.03 L935.00,200.18 L935.50,200.33 L936.00,200.46 L936.50,200.59 L937.00,200.71 L937.50,200.82 L938.00,200.92 L938.50,201.01 L939.00,201.09 L939.50,201.17 L940.00,201.24 L940.50,201.30 L941.00,201.35 L941.50,201.39 L942.00,201.43 L942.50,201.46 L943.00,201.48 L943.50,201.49 L944.00,201.50 L944.50,201.50 L945.00,201.49 L945.50,201.47 L946.00,201.45 L946.50,201.42 L947.00,201.38 L947.50,201.34 L948.00,201.29 L948.50,201.23 L949.00,201.17 L949.50,201.10 L950.00,201.02 L950.50,200.94 L951.00,200.85 L951.50,200.76 L952.00,200.66 L952.50,200.55 L953.00,200.43 L953.50,200.31 L954.00,200.19 L954.50,200.06 L955.00,199.92 L955.50,199.78 L956.00,199.63 L956.50,199.48 L957.00,199.32 L957.50,199.15 L958.00,198.98 L958.50,198.81 L959.00,198.63 L959.50,198.44 L960.00,198.25 L960.50,198.05 L961.00,197.85 L961.50,197.64 L962.00,197.43 L962.50,197.22 L963.00,197.00 L963.50,196.77 L964.00,196.54 L964.50,196.31 L965.00,196.07 L965.50,195.82 L966.00,195.57 L966.50,195.32 L967.00,195.06 L967.50,194.80 L968.00,194.54 L968.50,194.27 L969.00,193.99 L969.50,193.71 L970.00,193.43 L970.50,193.14 L971.00,192.85 L971.50,192.56 L972.00,192.26 L972.50,191.96 L973.00,191.65 L973.50,191.34 L974.00,191.03 L974.50,190.71 L975.00,190.39 L975.50,190.06 L976.00,189.74 L976.50,189.40 L977.00,189.07 L977.50,188.73 L978.00,188.39 L978.50,188.04 L979.00,187.69 L979.50,187.34 L980.00,186.99 L980.50,186.63 L981.00,186.27 L981.50,185.90 L982.00,185.53 L982.50,185.16 L983.00,184.79 L983.50,184.41 L984.00,184.03 L984.50,183.65 L985.00,183.26 L985.50,182.87 L986.00,182.48 L986.50,182.09 L987.00,181.69 L987.50,181.29 L988.00,180.89 L988.50,180.48 L989.00,180.07 L989.50,179.66 L990.00,179.25 L990.50,178.83 L991.00,178.41 L991.50,177.99 L992.00,177.57 L992.50,177.14 L993.00,176.71 L993.50,176.28 L994.00,175.85 L994.50,175.41 L995.00,174.98 L995.50,174.54 L996.00,174.09 L996.50,173.65 L997.00,173.20 L997.50,172.75 L998.00,172.30 L998.50,171.85 L999.00,171.39 L999.50,170.94 L1000.00,170.48 L1000.50,170.01 L1001.00,169.55 L1001.50,169.08 L1002.00,168.62 L1002.50,168.15 L1003.00,167.68 L1003.50,167.20 L1004.00,166.73 L1004.50,166.25 L1005.00,165.77 L1005.50,165.29 L1006.00,164.81 L1006.50,164.32 L1007.00,163.84 L1007.50,163.35 L1008.00,162.86 L1008.50,162.37 L1009.00,161.87 L1009.50,161.38 L1010.00,160.88 L1010.50,160.38 L1011.00,159.88 L1011.50,159.38 L1012.00,158.88 L1012.50,158.38 L1013.00,157.87 L1013.50,157.36 L1014.00,156.85 L1014.50,156.34 L1015.00,155.83 L1015.50,155.32 L1016.00,154.80 L1016.50,154.29 L1017.00,153.77 L1017.50,153.25 L1018.00,152.73 L1018.50,152.21 L1019.00,151.68 L1019.50,151.16 L1020.00,150.63 L1020.50,150.11 L1021.00,149.58 L1021.50,149.05 L1022.00,148.52 L1022.50,147.99 L1023.00,147.45 L1023.50,146.92 L1024.00,146.38 L1024.50,145.85 L1025.00,145.31 L1025.50,144.77 L1026.00,144.23 L1026.50,143.69 L1027.00,143.14 L1027.50,142.60 L1028.00,142.05 L1028.50,141.51 L1029.00,140.96 L1029.50,140.41 L1030.00,139.86 L1030.50,139.31 L1031.00,138.76 L1031.50,138.21 L1032.00,137.66 L1032.50,137.10 L1033.00,136.55 L1033.50,135.99 L1034.00,135.43 L1034.50,134.88 L1035.00,134.32 L1035.50,133.76 L1036.00,133.20 L1036.50,132.64 L1037.00,132.07 L1037.50,131.51 L1038.00,130.94 L1038.50,130.38 L1039.00,129.81 L1039.50,129.25 L1040.00,128.68 L1040.50,128.11 L1041.00,127.54 L1041.50,126.97 L1042.00,126.40 L1042.50,125.84 L1043.00,125.75 L1043.50,126.40 L1044.00,127.77 L1044.50,129.39 L1045.00,130.99 L1045.50,132.57 L1046.00,134.13 L1046.50,135.68 L1047.00,137.19 L1047.50,138.69 L1048.00,140.16 L1048.50,141.60 L1049.00,143.03 L1049.50,144.42 L1050.00,145.80 L1050.50,147.15 L1051.00,148.48 L1051.50,149.79 L1052.00,151.08 L1052.50,152.34 L1053.00,153.58 L1053.50,154.80 L1054.00,156.01 L1054.50,157.18 L1055.00,158.34 L1055.50,159.48 L1056.00,160.60 L1056.50,161.70 L1057.00,162.78 L1057.50,163.84 L1058.00,164.88 L1058.50,165.90 L1059.00,166.90 L1059.50,167.89 L1060.00,168.85 L1060.50,169.80 L1061.00,170.73 L1061.50,171.64 L1062.00,172.53 L1062.50,173.41 L1063.00,174.27 L1063.50,175.11 L1064.00,175.94 L1064.50,176.75 L1065.00,177.54 L1065.50,178.32 L1066.00,179.08 L1066.50,179.82 L1067.00,180.55 L1067.50,181.27 L1068.00,181.96 L1068.50,182.65 L1069.00,183.31 L1069.50,183.97 L1070.00,184.61 L1070.50,185.23 L1071.00,185.84 L1071.50,186.44 L1072.00,187.02 L1072.50,187.59 L1073.00,188.14 L1073.50,188.68 L1074.00,189.21 L1074.50,189.72 L1075.00,190.23 L1075.50,190.71 L1076.00,191.19 L1076.50,191.65 L1077.00,192.10 L1077.50,192.54 L1078.00,192.97 L1078.50,193.38 L1079.00,193.78 L1079.50,194.17 L1080.00,194.55 L1080.50,194.92 L1081.00,195.28 L1081.50,195.62 L1082.00,195.95 L1082.50,196.28 L1083.00,196.59 L1083.50,196.89 L1084.00,197.18 L1084.50,197.46 L1085.00,197.73 L1085.50,197.98 L1086.00,198.23 L1086.50,198.47 L1087.00,198.70 L1087.50,198.92 L1088.00,199.13 L1088.50,199.33 L1089.00,199.52 L1089.50,199.70 L1090.00,199.87 L1090.50,200.03 L1091.00,200.18 L1091.50,200.33 L1092.00,200.46 L1092.50,200.59 L1093.00,200.71 L1093.50,200.82 L1094.00,200.92 L1094.50,201.01 L1095.00,201.09 L1095.50,201.17 L1096.00,201.24 L1096.50,201.30 L1097.00,201.35 L1097.50,201.39 L1098.00,201.43 L1098.50,201.46 L1099.00,201.48 L1099.50,201.49 L1100.00,201.50 L1100.50,201.50 L1101.00,201.49 L1101.50,201.47 L1102.00,201.45 L1102.50,201.42 L1103.00,201.38 L1103.50,201.34 L1104.00,201.29" fill="none" stroke="#0000ff" stroke-width="1" shape-rendering="crispEdges"/>
<path d="M57.00,138.90 L106.40,75.60 L107.90,271.00 L109.90,271.00 L262.40,75.60 L263.90,271.00 L265.90,271.00 L418.40,75.60 L419.90,271.00 L421.90,271.00 L574.40,75.60 L575.90,271.00 L577.90,271.00 L730.40,75.60 L731.90,271.00 L733.90,271.00 L886.40,75.60 L887.90,271.00 L889.90,271.00 L1042.40,75.60 L1043.90,271.00 L1045.90,271.00 L1104.00,196.56" fill="none" stroke="#ff0000" stroke-width="1" shape-rendering="crispEdges"/>
<line x1="73" y1="404.5" x2="1288" y2="404.5" stroke="#00ff00" stroke-dasharray="3 3" shape-rendering="crispEdges"/>
<line x1="73" y1="425.5" x2="1288" y2="425.5" stroke="#00ff00" stroke-dasharray="3 3" shape-rendering="crispEdges"/>
<line x1="73" y1="445.5" x2="1288" y2="445.5" stroke="#00ff00" stroke-dasharray="3 3" shape-rendering="crispEdges"/>
<line x1="73" y1="466.5" x2="1288" y2="466.5" stroke="#00ff00" stroke-dasharray="3 3" shape-rendering="crispEdges"/>
<line x1="73" y1="487.5" x2="1288" y2="487.5" stroke="#00ff00" stroke-dasharray="3 3" shape-rendering="crispEdges"/>
<line x1="73" y1="507.5" x2="1288" y2="507.5" stroke="#00ff00" stroke-dasharray="3 3" shape-rendering="crispEdges"/>
<line x1="73" y1="528.5" x2="1288" y2="528.5" stroke="#00ff00" stroke-dasharray="3 3" shape-rendering="crispEdges"/>
<line x1="73" y1="548.5" x2="1288" y2="548.5" stroke="#00ff00" stroke-dasharray="3 3" shape-rendering="crispEdges"/>
<line x1="73" y1="569.5" x2="1288" y2="569.5" stroke="#00ff00" stroke-dasharray="3 3" shape-rendering="crispEdges"/>
<line x1="150.5" y1="385" x2="150.5" y2="590" stroke="#00ff00" stroke-dasharray="3 3" shape-rendering="crispEdges"/>
<line x1="196.5" y1="385" x2="196.5" y2="590" stroke="#00ff00" stroke-dasharray="3 3" shape-rendering="crispEdges"/>
<line x1="228.5" y1="385" x2="228.5" y2="590" stroke="#00ff00" stroke-dasharray="3 3" shape-rendering="crispEdges"/>
<line x1="253.5" y1="385" x2="253.5" y2="590" stroke="#00ff00" stroke-dasharray="3 3" shape-rendering="crispEdges"/>
<line x1="274.5" y1="385" x2="274.5" y2="590" stroke="#00ff00" stroke-dasharray="3 3" shape-rendering="crispEdges"/>
<line x1="291.5" y1="385" x2="291.5" y2="590" stroke="#00ff00" stroke-dasharray="3 3" shape-rendering="crispEdges"/>
<line x1="306.5" y1="385" x2="306.5" y2="590" stroke="#00ff00" stroke-dasharray="3 3" shape-rendering="crispEdges"/>
<line x1="319.5" y1="385" x2="319.5" y2="590" stroke="#00ff00" stroke-dasharray="3 3" shape-rendering="crispEdges"/>
<line x1="331.5" y1="385" x2="331.5" y2="590" stroke="#00ff00" stroke-dasharray="3 3" shape-rendering="crispEdges"/>
<line x1="409.5" y1="385" x2="409.5" y2="590" stroke="#00ff00" stroke-dasharray="3 3" shape-rendering="crispEdges"/>
<line x1="454.5" y1="385" x2="454.5" y2="590" stroke="#00ff00" stroke-dasharray="3 3" shape-rendering="crispEdges"/>
<line x1="487.5" y1="385" x2="487.5" y2="590" stroke="#00ff00" stroke-dasharray="3 3" shape-rendering="crispEdges"/>
<line x1="512.5" y1="385" x2="512.5" y2="590" stroke="#00ff00" stroke-dasharray="3 3" shape-rendering="crispEdges"/>
<line x1="532.5" y1="385" x2="532.5" y2="590" stroke="#00ff00" stroke-dasharray="3 3" shape-rendering="crispEdges"/>
<line x1="549.5" y1="385" x2="549.5" y2="590" stroke="#00ff00" stroke-dasharray="3 3" shape-rendering="crispEdges"/>
<line x1="564.5" y1="385" x2="564.5" y2="590" stroke="#00ff00" stroke-dasharray="3 3" shape-rendering="crispEdges"/>
<line x1="578.5" y1="385" x2="578.5" y2="590" stroke="#00ff00" stroke-dasharray="3 3" shape-rendering="crispEdges"/>
<line x1="590.5" y1="385" x2="590.5" y2="590" stroke="#00ff00" stroke-dasharray="3 3" shape-rendering="crispEdges"/>
<line x1="667.5" y1="385" x2="667.5" y2="590" stroke="#00ff00" stroke-dasharray="3 3" shape-rendering="crispEdges"/>
<line x1="713.5" y1="385" x2="713.5" y2="590" stroke="#00ff00" stroke-dasharray="3 3" shape-rendering="crispEdges"/>
<line x1="745.5" y1="385" x2="745.5" y2="590" stroke="#00ff00" stroke-dasharray="3 3" shape-rendering="crispEdges"/>
<line x1="770.5" y1="385" x2="770.5" y2="590" stroke="#00ff00" stroke-dasharray="3 3" shape-rendering="crispEdges"/>
<line x1="791.5" y1="385" x2="791.5" y2="590" stroke="#00ff00" stroke-dasharray="3 3" shape-rendering="crispEdges"/>
<line x1="808.5" y1="385" x2="808.5" y2="590" stroke="#00ff00" stroke-dasharray="3 3" shape-rendering="crispEdges"/>
<line x1="823.5" y1="385" x2="823.5" y2="590" stroke="#00ff00" stroke-dasharray="3 3" shape-rendering="crispEdges"/>
<line x1="836.5" y1="385" x2="836.5" y2="590" stroke="#00ff00" stroke-dasharray="3 3" shape-rendering="crispEdges"/>
<line x1="848.5" y1="385" x2="848.5" y2="590" stroke="#00ff00" stroke-dasharray="3 3" shape-rendering="crispEdges"/>
<line x1="926.5" y1="385" x2="926.5" y2="590" stroke="#00ff00" stroke-dasharray="3 3" shape-rendering="crispEdges"/>
<line x1="971.5" y1="385" x2="971.5" y2="590" stroke="#00ff00" stroke-dasharray="3 3" shape-rendering="crispEdges"/>
<line x1="1004.5" y1="385" x2="1004.5" y2="590" stroke="#00ff00" stroke-dasharray="3 3" shape-rendering="crispEdges"/>
<line x1="1029.5" y1="385" x2="1029.5" y2="590" stroke="#00ff00" stroke-dasharray="3 3" shape-rendering="crispEdges"/>
<line x1="1049.5" y1="385" x2="1049.5" y2="590" stroke="#00ff00" stroke-dasharray="3 3" shape-rendering="crispEdges"/>
<line x1="1066.5" y1="385" x2="1066.5" y2="590" stroke="#00ff00" stroke-dasharray="3 3" shape-rendering="crispEdges"/>
<line x1="1081.5" y1="385" x2="1081.5" y2="590" stroke="#00ff00" stroke-dasharray="3 3" shape-rendering="crispEdges"/>
<line x1="1095.5" y1="385" x2="1095.5" y2="590" stroke="#00ff00" stroke-dasharray="3 3" shape-rendering="crispEdges"/>
<line x1="1106.5" y1="385" x2="1106.5" y2="590" stroke="#00ff00" stroke-dasharray="3 3" shape-rendering="crispEdges"/>
<line x1="1184.5" y1="385" x2="1184.5" y2="590" stroke="#00ff00" stroke-dasharray="3 3" shape-rendering="crispEdges"/>
<line x1="1230.5" y1="385" x2="1230.5" y2="590" stroke="#00ff00" stroke-dasharray="3 3" shape-rendering="crispEdges"/>
<line x1="1262.5" y1="385" x2="1262.5" y2="590" stroke="#00ff00" stroke-dasharray="3 3" shape-rendering="crispEdges"/>
<line x1="1287.5" y1="385" x2="1287.5" y2="590" stroke="#00ff00" stroke-dasharray="3 3" shape-rendering="crispEdges"/>
<rect x="73" y="384" width="1215" height="1" fill="#00ff00" />
<rect x="73" y="590" width="1215" height="1" fill="#00ff00" />
<rect x="73" y="384" width="1" height="207" fill="#00ff00" />
<text x="71" y="388" font-size="9.4" fill="#0000ff" font-weight="bold" text-anchor="end" font-family="Liberation Sans" letter-spacing="0.45" >90</text>
<text x="71" y="408" font-size="9.4" fill="#0000ff" font-weight="bold" text-anchor="end" font-family="Liberation Sans" letter-spacing="0.45" >80</text>
<text x="71" y="429" font-size="9.4" fill="#0000ff" font-weight="bold" text-anchor="end" font-family="Liberation Sans" letter-spacing="0.45" >70</text>
<text x="71" y="449" font-size="9.4" fill="#0000ff" font-weight="bold" text-anchor="end" font-family="Liberation Sans" letter-spacing="0.45" >60</text>
<text x="71" y="470" font-size="9.4" fill="#0000ff" font-weight="bold" text-anchor="end" font-family="Liberation Sans" letter-spacing="0.45" >50</text>
<text x="71" y="491" font-size="9.4" fill="#0000ff" font-weight="bold" text-anchor="end" font-family="Liberation Sans" letter-spacing="0.45" >40</text>
<text x="71" y="511" font-size="9.4" fill="#0000ff" font-weight="bold" text-anchor="end" font-family="Liberation Sans" letter-spacing="0.45" >30</text>
<text x="71" y="532" font-size="9.4" fill="#0000ff" font-weight="bold" text-anchor="end" font-family="Liberation Sans" letter-spacing="0.45" >20</text>
<text x="71" y="552" font-size="9.4" fill="#0000ff" font-weight="bold" text-anchor="end" font-family="Liberation Sans" letter-spacing="0.45" >10</text>
<text x="71" y="573" font-size="9.4" fill="#0000ff" font-weight="bold" text-anchor="end" font-family="Liberation Sans" letter-spacing="0.45" >0</text>
<text x="71" y="594" font-size="9.4" fill="#0000ff" font-weight="bold" text-anchor="end" font-family="Liberation Sans" letter-spacing="0.45" >-10</text>
<text x="42" y="370" font-size="9.4" fill="#0000ff" font-weight="bold" text-anchor="start" font-family="Liberation Sans" textLength="31" lengthAdjust="spacingAndGlyphs" >A(dB)</text>
<text x="1289" y="594" font-size="9.4" fill="#ff0000" font-weight="bold" text-anchor="start" font-family="Liberation Sans" letter-spacing="0.45" >-10</text>
<text x="73.5" y="603" font-size="9.4" fill="#000" font-weight="bold" text-anchor="middle" font-family="Liberation Sans" letter-spacing="0.45" >10</text>
<text x="151.31625387913914" y="603" font-size="9.4" fill="#000" font-weight="bold" text-anchor="middle" font-family="Liberation Sans" letter-spacing="0.45" >20</text>
<text x="254.18374612086086" y="603" font-size="9.4" fill="#000" font-weight="bold" text-anchor="middle" font-family="Liberation Sans" letter-spacing="0.45" >50</text>
<text x="332.0" y="603" font-size="9.4" fill="#000" font-weight="bold" text-anchor="middle" font-family="Liberation Sans" letter-spacing="0.45" >100</text>
<text x="409.81625387913914" y="603" font-size="9.4" fill="#000" font-weight="bold" text-anchor="middle" font-family="Liberation Sans" letter-spacing="0.45" >200</text>
<text x="512.6837461208609" y="603" font-size="9.4" fill="#000" font-weight="bold" text-anchor="middle" font-family="Liberation Sans" letter-spacing="0.45" >500</text>
<text x="590.5" y="603" font-size="9.4" fill="#000" font-weight="bold" text-anchor="middle" font-family="Liberation Sans" letter-spacing="0.45" >1k</text>
<text x="668.3162538791391" y="603" font-size="9.4" fill="#000" font-weight="bold" text-anchor="middle" font-family="Liberation Sans" letter-spacing="0.45" >2k</text>
<text x="771.1837461208609" y="603" font-size="9.4" fill="#000" font-weight="bold" text-anchor="middle" font-family="Liberation Sans" letter-spacing="0.45" >5k</text>
<text x="849.0" y="603" font-size="9.4" fill="#000" font-weight="bold" text-anchor="middle" font-family="Liberation Sans" letter-spacing="0.45" >10k</text>
<text x="926.8162538791391" y="603" font-size="9.4" fill="#000" font-weight="bold" text-anchor="middle" font-family="Liberation Sans" letter-spacing="0.45" >20k</text>
<text x="1029.6837461208609" y="603" font-size="9.4" fill="#000" font-weight="bold" text-anchor="middle" font-family="Liberation Sans" letter-spacing="0.45" >50k</text>
<text x="1107.5" y="603" font-size="9.4" fill="#000" font-weight="bold" text-anchor="middle" font-family="Liberation Sans" letter-spacing="0.45" >100k</text>
<text x="1185.3162538791391" y="603" font-size="9.4" fill="#000" font-weight="bold" text-anchor="middle" font-family="Liberation Sans" letter-spacing="0.45" >200k</text>
<text x="1288.1837461208609" y="603" font-size="9.4" fill="#000" font-weight="bold" text-anchor="middle" font-family="Liberation Sans" letter-spacing="0.45" >500k</text>
<text x="25" y="613" font-size="9.4" fill="#000" font-weight="bold" text-anchor="start" font-family="Liberation Sans" textLength="92" lengthAdjust="spacingAndGlyphs" >FFT Segments:&lt;1</text>
<text x="133" y="613" font-size="9.4" fill="#000" font-weight="bold" text-anchor="start" font-family="Liberation Sans" textLength="118" lengthAdjust="spacingAndGlyphs" >Resolution: 30.5176Hz</text>
<text x="601" y="613" font-size="9.4" fill="#000" font-weight="bold" text-anchor="start" font-family="Liberation Sans" textLength="157" lengthAdjust="spacingAndGlyphs" >AMPLITUDE SPECTRUM in dB</text>
<text x="1136" y="613" font-size="9.4" fill="#000" font-weight="bold" text-anchor="start" font-family="Liberation Sans" textLength="111" lengthAdjust="spacingAndGlyphs" >Averaged Frames: 30</text>
<text x="1295" y="616" font-size="9.4" fill="#000" font-weight="bold" text-anchor="start" font-family="Liberation Sans" textLength="14" lengthAdjust="spacingAndGlyphs" >Hz</text>
<text x="587" y="358" font-size="9.4" fill="#0000ff" font-weight="bold" text-anchor="start" font-family="Liberation Sans" textLength="104" lengthAdjust="spacingAndGlyphs" >A: Peak Frequency=</text>
<text x="713" y="358" font-size="9.4" fill="#0000ff" font-weight="bold" text-anchor="start" font-family="Liberation Sans" textLength="33" lengthAdjust="spacingAndGlyphs" >1.9929</text>
<text x="754" y="358" font-size="9.4" fill="#0000ff" font-weight="bold" text-anchor="start" font-family="Liberation Sans" textLength="20" lengthAdjust="spacingAndGlyphs" >kHz</text>
<text x="587" y="370" font-size="9.4" fill="#ff0000" font-weight="bold" text-anchor="start" font-family="Liberation Sans" textLength="104" lengthAdjust="spacingAndGlyphs" >B: Peak Frequency=</text>
<text x="713" y="370" font-size="9.4" fill="#ff0000" font-weight="bold" text-anchor="start" font-family="Liberation Sans" textLength="33" lengthAdjust="spacingAndGlyphs" >2.0128</text>
<text x="754" y="370" font-size="9.4" fill="#ff0000" font-weight="bold" text-anchor="start" font-family="Liberation Sans" textLength="20" lengthAdjust="spacingAndGlyphs" >kHz</text>
<path d="M73.00,494.50 L136.00,494.50 L136.00,494.50 L136.00,493.50 L298.60,493.50 L298.60,493.50 L298.60,494.50 L330.00,494.50 L330.00,494.50 L330.00,495.50 L345.70,495.50 L345.70,495.50 L345.70,496.50 L359.60,496.50 L359.60,496.50 L359.60,495.50 L373.50,495.50 L373.50,495.50 L373.50,494.50 L408.10,494.50 L408.10,494.50 L408.10,493.50 L461.60,493.50 L461.60,493.50 L461.60,494.50 L472.50,494.50 L472.50,494.50 L472.50,495.50 L482.40,495.50 L482.40,495.50 L482.40,493.50 L498.20,493.50 L498.20,493.50 L498.20,492.50 L513.00,492.50 L513.00,492.50 L513.00,491.50 L520.00,491.50 L520.00,491.50 L520.00,492.50 L532.90,492.50 L532.90,492.50 L532.90,493.50 L542.80,493.50 L542.80,493.50 L542.80,491.50 L553.70,491.50 L553.70,491.50 L553.70,490.50 L560.00,490.50" fill="none" stroke="#0000ff" stroke-width="1" shape-rendering="crispEdges"/>
<path d="M73.00,492.50 L136.00,492.50 L136.00,492.50 L136.00,491.50 L237.00,491.50 L237.00,491.50 L237.00,490.50 L299.00,490.50 L299.00,490.50 L299.00,491.50 L330.00,491.50 L330.00,491.50 L330.00,492.50 L345.70,492.50 L345.70,492.50 L345.70,493.50 L365.50,493.50 L365.50,493.50 L365.50,492.50 L389.30,492.50 L389.30,492.50 L389.30,491.50 L408.10,491.50 L408.10,491.50 L408.10,490.50 L461.60,490.50 L461.60,490.50 L461.60,491.50 L488.30,491.50 L488.30,491.50 L488.30,490.50 L498.20,490.50 L498.20,490.50 L498.20,489.50 L506.10,489.50 L506.10,489.50 L506.10,488.50 L532.90,488.50 L532.90,488.50 L532.90,489.50 L541.80,489.50 L541.80,489.50 L541.80,487.50 L553.70,487.50 L553.70,487.50 L553.70,485.50 L560.00,485.50" fill="none" stroke="#ff0000" stroke-width="1" shape-rendering="crispEdges"/>
<path d="M560.00,490.50 L570.13,490.80 L576.88,491.48 L583.63,489.45 L590.38,487.43 L602.19,487.43 L605.57,488.61 L615.70,483.54 L624.14,482.70 L627.51,483.54 L632.57,481.01 L637.64,475.11 L642.70,474.26 L645.23,475.95 L649.45,470.89 L654.51,462.45 L661.27,447.26 L667.17,441.35 L670.55,443.04 L674.77,448.95 L684.89,475.11 L689.96,476.79 L695.02,483.54 L700.08,486.92 L703.46,486.08 L708.52,491.14 L713.00,491.14 L718.42,494.59 L723.94,493.66 L727.62,495.51 L734.99,489.98 L738.67,482.62 L743.28,467.88 L745.67,464.20 L748.80,471.57 L754.33,500.11 L760.77,508.40 L768.14,512.08 L773.66,514.84 L779.19,512.08 L784.71,504.71 L788.40,488.14 L791.16,478.56 L793.00,482.62 L797.61,515.76 L803.13,528.66 L810.13,535.10 L815.10,528.66 L819.71,504.71 L823.76,488.14 L827.07,515.76 L832.60,526.81 L838.12,530.50 L843.65,524.05 L848.25,496.43 L848.50,496.96 L848.50,495.66 L848.70,495.81 L848.90,498.03 L849.10,501.46 L849.30,503.48 L849.50,506.04 L849.70,507.20 L849.90,510.93 L850.10,512.81 L850.30,514.99 L850.50,517.07 L850.70,519.47 L850.90,523.46 L851.10,524.83 L851.30,526.24 L851.50,527.53 L851.70,526.87 L851.90,528.26 L852.10,530.13 L852.30,531.26 L852.50,532.36 L852.70,533.08 L852.90,531.29 L853.10,533.37 L853.30,534.04 L853.50,533.96 L853.70,533.36 L853.90,534.59 L854.10,533.75 L854.30,536.57 L854.50,536.62 L854.70,535.90 L854.90,535.37 L855.10,537.39 L855.30,536.56 L855.50,537.65 L855.70,537.69 L855.90,536.81 L856.10,536.65 L856.30,537.31 L856.50,536.91 L856.70,536.19 L856.90,536.71 L857.10,538.31 L857.30,536.06 L857.50,536.13 L857.70,537.93 L857.90,536.94 L858.10,537.74 L858.30,537.58 L858.50,537.23 L858.70,539.21 L858.90,536.83 L859.10,537.49 L859.30,536.87 L859.50,538.16 L859.70,537.08 L859.90,537.31 L860.10,538.47 L860.30,537.17 L860.50,537.86 L860.70,538.86 L860.90,536.41 L861.10,536.24 L861.30,536.69 L861.50,538.24 L861.70,537.72 L861.90,536.50 L862.10,536.69 L862.30,536.13 L862.50,536.86 L862.70,535.49 L862.90,537.31 L863.10,537.76 L863.30,537.76 L863.50,536.91 L863.70,537.37 L863.90,534.30 L864.10,534.85 L864.30,536.58 L864.50,535.67 L864.70,534.20 L864.90,535.37 L865.10,533.92 L865.30,533.96 L865.50,531.77 L865.70,530.76 L865.90,530.70 L866.10,528.85 L866.30,528.52 L866.50,529.04 L866.70,525.74 L866.90,523.16 L867.10,521.41 L867.30,519.67 L867.50,519.15 L867.70,515.27 L867.90,512.25 L868.10,508.80 L868.30,508.69 L868.50,504.61 L868.70,502.20 L868.90,500.89 L869.10,502.96 L869.30,503.02 L869.50,505.49 L869.70,510.44 L869.90,513.70 L870.10,520.00 L870.30,521.27 L870.50,526.08 L870.70,530.04 L870.90,531.80 L871.10,536.03 L871.30,536.68 L871.50,537.86 L871.70,540.00 L871.90,540.30 L872.10,542.69 L872.30,543.24 L872.50,546.10 L872.70,546.75 L872.90,546.48 L873.10,545.71 L873.30,546.94 L873.50,547.41 L873.70,547.74 L873.90,548.21 L874.10,550.47 L874.30,548.60 L874.50,548.61 L874.70,551.49 L874.90,550.63 L875.10,552.11 L875.30,550.52 L875.50,552.18 L875.70,551.58 L875.90,552.12 L876.10,552.09 L876.30,551.44 L876.50,550.32 L876.70,550.75 L876.90,552.80 L877.10,552.93 L877.30,553.05 L877.50,551.32 L877.70,552.30 L877.90,552.75 L878.10,552.28 L878.30,552.79 L878.50,551.92 L878.70,552.27 L878.90,552.33 L879.10,551.03 L879.30,552.94 L879.50,552.97 L879.70,550.25 L879.90,552.84 L880.10,552.71 L880.30,551.70 L880.50,549.69 L880.70,552.09 L880.90,549.59 L881.10,551.91 L881.30,550.77 L881.50,548.68 L881.70,548.69 L881.90,549.75 L882.10,549.16 L882.30,549.25 L882.50,549.28 L882.70,546.56 L882.90,545.24 L883.10,547.22 L883.30,543.58 L883.50,545.11 L883.70,541.59 L883.90,542.22 L884.10,540.44 L884.30,538.71 L884.50,535.36 L884.70,533.57 L884.90,528.33 L885.10,526.08 L885.30,521.01 L885.50,518.45 L885.70,513.98 L885.90,509.58 L886.10,507.43 L886.30,507.12 L886.50,507.77 L886.70,511.23 L886.90,513.70 L887.10,515.97 L887.30,520.35 L887.50,525.03 L887.70,527.41 L887.90,528.59 L888.10,533.39 L888.30,535.34 L888.50,534.79 L888.70,537.59 L888.90,538.31 L889.10,540.55 L889.30,540.00 L889.50,540.52 L889.70,541.92 L889.90,543.92 L890.10,541.79 L890.30,542.27 L890.50,544.16 L890.70,545.28 L890.90,544.44 L891.10,544.45 L891.30,545.95 L891.50,545.90 L891.70,543.94 L891.90,546.53 L892.10,544.60 L892.30,545.04 L892.50,546.74 L892.70,545.59 L892.90,546.79 L893.10,544.96 L893.30,547.13 L893.50,545.07 L893.70,545.02 L893.90,546.08 L894.10,545.62 L894.30,546.24 L894.50,547.32 L894.70,546.72 L894.90,544.58 L895.10,545.46 L895.30,546.11 L895.50,545.87 L895.70,546.48 L895.90,545.70 L896.10,544.37 L896.30,544.76 L896.50,546.42 L896.70,544.78 L896.90,545.82 L897.10,546.26 L897.30,544.93 L897.50,544.78 L897.70,544.24 L897.90,542.95 L898.10,544.28 L898.30,542.39 L898.50,543.08 L898.70,540.49 L898.90,541.25 L899.10,539.91 L899.30,538.06 L899.50,535.95 L899.70,533.12 L899.90,532.70 L900.10,528.75 L900.30,526.50 L900.50,521.45 L900.70,517.78 L900.90,514.86 L901.10,514.77 L901.30,512.97 L901.50,514.78 L901.70,516.78 L901.90,521.12 L902.10,523.32 L902.30,527.85 L902.50,532.67 L902.70,533.15 L902.90,536.88 L903.10,537.82 L903.30,539.33 L903.50,539.81 L903.70,540.89 L903.90,544.59 L904.10,544.99 L904.30,545.55 L904.50,546.11 L904.70,547.01 L904.90,545.02 L905.10,546.64 L905.30,546.66 L905.50,547.15 L905.70,548.46 L905.90,548.12 L906.10,548.90 L906.30,546.49 L906.50,548.21 L906.70,548.38 L906.90,548.68 L907.10,548.37 L907.30,549.06 L907.50,547.52 L907.70,549.43 L907.90,547.88 L908.10,548.47 L908.30,549.36 L908.50,548.77 L908.70,547.56 L908.90,547.29 L909.10,547.52 L909.30,548.36 L909.50,549.39 L909.70,549.00 L909.90,547.38 L910.10,547.25 L910.30,548.33 L910.50,546.54 L910.70,546.70 L910.90,545.24 L911.10,545.44 L911.30,546.14 L911.50,546.16 L911.70,545.40 L911.90,544.02 L912.10,545.02 L912.30,543.12 L912.50,540.60 L912.70,538.95 L912.90,539.96 L913.10,537.90 L913.30,535.12 L913.50,531.07 L913.70,526.60 L913.90,522.06 L914.10,518.89 L914.30,516.09 L914.50,516.81 L914.70,516.46 L914.90,520.53 L915.10,525.71 L915.30,532.83 L915.50,535.22 L915.70,541.16 L915.90,544.19 L916.10,546.52 L916.30,549.96 L916.50,549.65 L916.70,551.89 L916.90,551.97 L917.10,552.76 L917.30,553.37 L917.50,554.90 L917.70,554.87 L917.90,555.16 L918.10,558.36 L918.30,556.58 L918.50,558.67 L918.70,558.35 L918.90,558.65 L919.10,558.59 L919.30,559.63 L919.50,559.53 L919.70,559.15 L919.90,558.74 L920.10,559.20 L920.30,559.33 L920.50,558.84 L920.70,558.69 L920.90,557.64 L921.10,559.67 L921.30,558.54 L921.50,557.23 L921.70,557.43 L921.90,559.44 L922.10,557.44 L922.30,557.67 L922.50,558.34 L922.70,558.63 L922.90,556.73 L923.10,556.55 L923.30,556.22 L923.50,554.52 L923.70,556.44 L923.90,553.10 L924.10,554.98 L924.30,551.39 L924.50,549.95 L924.70,550.20 L924.90,547.82 L925.10,543.13 L925.30,540.45 L925.50,535.79 L925.70,531.43 L925.90,524.65 L926.10,522.41 L926.30,521.14 L926.50,522.46 L926.70,525.21 L926.90,532.46 L927.10,538.33 L927.30,542.82 L927.50,545.70 L927.70,550.69 L927.90,554.30 L928.10,554.64 L928.30,557.38 L928.50,559.50 L928.70,559.71 L928.90,558.91 L929.10,561.43 L929.30,560.90 L929.50,563.20 L929.70,563.03 L929.90,562.31 L930.10,564.36 L930.30,563.79 L930.50,563.12 L930.70,564.77 L930.90,565.07 L931.10,565.18 L931.30,565.23 L931.50,564.60 L931.70,564.76 L931.90,564.48 L932.10,564.23 L932.30,565.58 L932.50,563.61 L932.70,562.71 L932.90,564.49 L933.10,563.70 L933.30,563.66 L933.50,563.59 L933.70,562.27 L933.90,561.79 L934.10,560.99 L934.30,562.61 L934.50,562.38 L934.70,560.98 L934.90,558.28 L935.10,559.67 L935.30,557.68 L935.50,554.77 L935.70,550.71 L935.90,549.97 L936.10,545.12 L936.30,539.94 L936.50,532.19 L936.70,528.57 L936.90,522.60 L937.10,523.31 L937.30,528.54 L937.50,534.15 L937.70,540.82 L937.90,545.02 L938.10,549.98 L938.30,554.30 L938.50,555.42 L938.70,558.74 L938.90,562.13 L939.10,562.79 L939.30,564.17 L939.50,563.32 L939.70,565.18 L939.90,566.02 L940.10,566.21 L940.30,565.78 L940.50,565.29 L940.70,565.06 L940.90,567.87 L941.10,568.16 L941.30,566.32 L941.50,567.85 L941.70,566.86 L941.90,567.56 L942.10,568.21 L942.30,566.63 L942.50,567.48 L942.70,566.31 L942.90,566.97 L943.10,565.38 L943.30,565.90 L943.50,565.74 L943.70,567.34 L943.90,564.64 L944.10,566.07 L944.30,563.51 L944.50,565.52 L944.70,562.19 L944.90,560.86 L945.10,559.79 L945.30,560.08 L945.50,556.83 L945.70,554.24 L945.90,548.78 L946.10,542.16 L946.30,536.40 L946.50,530.42 L946.70,528.03 L946.90,528.02 L947.10,530.69 L947.30,540.23 L947.50,545.04 L947.70,551.54 L947.90,556.25 L948.10,560.33 L948.30,560.36 L948.50,564.58 L948.70,564.05 L948.90,566.80 L949.10,565.61 L949.30,568.54 L949.50,567.34 L949.70,567.86 L949.90,567.71 L950.10,568.87 L950.30,569.11 L950.50,571.25 L950.70,570.26 L950.90,569.63 L951.10,571.57 L951.30,569.15 L951.50,569.28 L951.70,571.47 L951.90,571.39 L952.10,570.49 L952.30,571.23 L952.50,568.28 L952.70,570.57 L952.90,569.67 L953.10,569.17 L953.30,569.20 L953.50,566.36 L953.70,565.85 L953.90,564.64 L954.10,564.32 L954.30,562.74 L954.50,560.34 L954.70,556.58 L954.90,553.36 L955.10,547.89 L955.30,540.61 L955.50,531.34 L955.70,527.24 L955.90,529.38 L956.10,534.01 L956.30,542.89 L956.50,549.02 L956.70,554.61 L956.90,559.78 L957.10,563.53 L957.30,563.51 L957.50,565.66 L957.70,568.83 L957.90,567.50 L958.10,567.69 L958.30,568.78 L958.50,571.14 L958.70,571.22 L958.90,572.13 L959.10,571.03 L959.30,569.83 L959.50,570.74 L959.70,572.06 L959.90,571.12 L960.10,570.36 L960.30,571.03 L960.50,571.22 L960.70,570.78 L960.90,570.88 L961.10,569.73 L961.30,569.12 L961.50,571.01 L961.70,570.37 L961.90,568.81 L962.10,567.10 L962.30,566.59 L962.50,565.98 L962.70,565.11 L962.90,561.30 L963.10,559.22 L963.30,552.95 L963.50,545.31 L963.70,538.63 L963.90,531.20 L964.10,526.53 L964.30,531.44 L964.50,540.40 L964.70,546.60 L964.90,552.98 L965.10,558.35 L965.30,562.21 L965.50,565.23 L965.70,566.74 L965.90,569.09 L966.10,568.74 L966.30,570.07 L966.50,571.67 L966.70,571.75 L966.90,573.37 L967.10,573.58 L967.30,571.77 L967.50,572.16 L967.70,572.87 L967.90,572.96 L968.10,572.44 L968.30,573.91 L968.50,571.85 L968.70,572.56 L968.90,571.34 L969.10,573.40 L969.30,572.24 L969.50,573.01 L969.70,569.94 L969.90,570.95 L970.10,569.67 L970.30,566.78 L970.50,567.36 L970.70,565.10 L970.90,559.31 L971.10,557.05 L971.30,549.96 L971.50,541.45 L971.70,534.50 L971.90,533.10 L972.10,539.70 L972.30,545.98 L972.50,554.24 L972.70,559.30 L972.90,564.52 L973.10,568.14 L973.30,569.92 L973.50,569.56 L973.70,571.01 L973.90,570.56 L974.10,572.75 L974.30,574.18 L974.50,574.50 L974.70,572.45 L974.90,573.73 L975.10,572.81 L975.30,573.93 L975.50,575.44 L975.70,573.55 L975.90,575.19 L976.10,575.43 L976.30,574.87 L976.50,572.81 L976.70,574.67 L976.90,574.30 L977.10,574.00 L977.30,570.34 L977.50,569.36 L977.70,568.90 L977.90,567.72 L978.10,564.76 L978.30,559.86 L978.50,555.93 L978.70,548.70 L978.90,541.29 L979.10,538.66 L979.30,540.93 L979.50,549.83 L979.70,556.15 L979.90,561.43 L980.10,567.12 L980.30,568.36 L980.50,570.19 L980.70,571.27 L980.90,573.11 L981.10,572.38 L981.30,574.45 L981.50,573.12 L981.70,576.05 L981.90,573.86 L982.10,575.83 L982.30,575.25 L982.50,574.93 L982.70,574.56 L982.90,574.67 L983.10,575.76 L983.30,574.90 L983.50,574.70 L983.70,573.51 L983.90,574.20 L984.10,572.23 L984.30,572.34 L984.50,571.70 L984.70,569.73 L984.90,567.44 L985.10,563.84 L985.30,557.45 L985.50,552.53 L985.70,544.05 L985.90,540.08 L986.10,544.03 L986.30,552.03 L986.50,559.32 L986.70,564.47 L986.90,568.02 L987.10,570.05 L987.30,572.49 L987.50,573.05 L987.70,574.10 L987.90,575.57 L988.10,574.96 L988.30,576.93 L988.50,576.96 L988.70,575.71 L988.90,577.33 L989.10,575.40 L989.30,575.16 L989.50,577.80 L989.70,574.80 L989.90,574.54 L990.10,576.87 L990.30,573.92 L990.50,575.39 L990.70,574.40 L990.90,572.42 L991.10,571.09 L991.30,571.18 L991.50,566.33 L991.70,561.12 L991.90,554.86 L992.10,547.85 L992.30,542.42 L992.50,545.68 L992.70,553.54 L992.90,560.45 L993.10,568.32 L993.30,569.87 L993.50,572.90 L993.70,573.79 L993.90,576.03 L994.10,574.84 L994.30,575.35 L994.50,576.70 L994.70,574.90 L994.90,576.16 L995.10,577.44 L995.30,576.91 L995.50,576.64 L995.70,577.89 L995.90,576.23 L996.10,576.89 L996.30,575.55 L996.50,574.17 L996.70,574.43 L996.90,572.99 L997.10,571.13 L997.30,569.98 L997.50,566.56 L997.70,562.99 L997.90,556.84 L998.10,547.51 L998.30,540.19 L998.50,541.59 L998.70,549.09 L998.90,559.69 L999.10,563.63 L999.30,570.19 L999.50,572.71 L999.70,574.76 L999.90,575.49 L1000.10,575.96 L1000.30,575.71 L1000.50,576.97 L1000.70,577.74 L1000.90,577.03 L1001.10,577.28 L1001.30,578.23 L1001.50,576.29 L1001.70,576.34 L1001.90,575.27 L1002.10,577.53 L1002.30,576.39 L1002.50,575.95 L1002.70,573.82 L1002.90,572.45 L1003.10,571.51 L1003.30,569.87 L1003.50,563.79 L1003.70,556.95 L1003.90,547.61 L1004.10,542.47 L1004.30,543.68 L1004.50,555.37 L1004.70,563.81 L1004.90,568.35 L1005.10,572.56 L1005.30,573.34 L1005.50,574.34 L1005.70,575.95 L1005.90,576.32 L1006.10,578.13 L1006.30,577.98 L1006.50,578.47 L1006.70,579.53 L1006.90,578.95 L1007.10,578.97 L1007.30,579.39 L1007.50,579.06 L1007.70,578.19 L1007.90,576.54 L1008.10,576.34 L1008.30,576.08 L1008.50,574.67 L1008.70,572.67 L1008.90,568.43 L1009.10,562.09 L1009.30,551.59 L1009.50,543.12 L1009.70,541.18 L1009.90,549.85 L1010.10,562.20 L1010.30,568.36 L1010.50,570.60 L1010.70,572.25 L1010.90,576.13 L1011.10,577.02 L1011.30,575.87 L1011.50,578.33 L1011.70,578.72 L1011.90,578.13 L1012.10,577.34 L1012.30,576.72 L1012.50,576.70 L1012.70,577.70 L1012.90,578.31 L1013.10,577.70 L1013.30,575.92 L1013.50,576.82 L1013.70,573.38 L1013.90,573.10 L1014.10,568.62 L1014.30,562.86 L1014.50,555.05 L1014.70,547.10 L1014.90,544.14 L1015.10,551.94 L1015.30,561.63 L1015.50,567.62 L1015.70,571.59 L1015.90,574.39 L1016.10,574.03 L1016.30,575.81 L1016.50,574.86 L1016.70,575.65 L1016.90,575.45 L1017.10,577.90 L1017.30,576.40 L1017.50,577.51 L1017.70,577.93 L1017.90,576.27 L1018.10,575.45 L1018.30,575.12 L1018.50,575.16 L1018.70,573.80 L1018.90,571.17 L1019.10,570.74 L1019.30,565.38 L1019.50,558.33 L1019.70,549.09 L1019.90,547.41 L1020.10,555.76 L1020.30,566.17 L1020.50,572.30 L1020.70,573.28 L1020.90,575.44 L1021.10,576.80 L1021.30,578.48 L1021.50,580.26 L1021.70,579.62 L1021.90,580.84 L1022.10,579.51 L1022.30,580.17 L1022.50,579.19 L1022.70,580.26 L1022.90,578.94 L1023.10,577.80 L1023.30,578.43 L1023.50,578.06 L1023.70,577.60 L1023.90,573.45 L1024.10,571.22 L1024.30,563.96 L1024.50,554.06 L1024.70,556.55 L1024.90,563.93 L1025.10,570.21 L1025.30,574.98 L1025.50,577.76 L1025.70,579.11 L1025.90,578.75 L1026.10,581.41 L1026.30,580.76 L1026.50,579.59 L1026.70,580.43 L1026.90,579.81 L1027.10,580.93 L1027.30,579.73 L1027.50,580.85 L1027.70,579.78 L1027.90,580.93 L1028.10,579.95 L1028.30,576.90 L1028.50,576.54 L1028.70,571.86 L1028.90,564.11 L1029.10,558.42 L1029.30,558.29 L1029.50,564.66 L1029.70,571.71 L1029.90,576.37 L1030.10,576.69 L1030.30,578.92 L1030.50,578.06 L1030.70,580.84 L1030.90,581.06 L1031.10,578.79 L1031.30,580.63 L1031.50,579.29 L1031.70,578.25 L1031.90,578.54 L1032.10,579.69 L1032.30,578.28 L1032.50,577.50 L1032.70,574.69 L1032.90,572.06 L1033.10,567.63 L1033.30,559.26 L1033.50,549.74 L1033.70,551.03 L1033.90,561.15 L1034.10,569.60 L1034.30,574.36 L1034.50,575.94 L1034.70,576.74 L1034.90,577.20 L1035.10,579.40 L1035.30,580.03 L1035.50,580.70 L1035.70,580.85 L1035.90,579.59 L1036.10,579.44 L1036.30,580.64 L1036.50,577.60 L1036.70,577.80 L1036.90,577.19 L1037.10,575.40 L1037.30,571.84 L1037.50,563.83 L1037.70,555.50 L1037.90,552.87 L1038.10,562.31 L1038.30,570.88 L1038.50,574.41 L1038.70,575.98 L1038.90,578.17 L1039.10,579.53 L1039.30,578.88 L1039.50,579.06 L1039.70,579.69 L1039.90,580.49 L1040.10,578.43 L1040.30,580.15 L1040.50,577.95 L1040.70,579.87 L1040.90,576.82 L1041.10,577.08 L1041.30,571.73 L1041.50,567.44 L1041.70,556.82 L1041.90,550.56 L1042.10,555.36 L1042.30,567.36 L1042.50,572.23 L1042.70,575.13 L1042.90,576.72 L1043.10,577.75 L1043.30,578.97 L1043.50,578.76 L1043.70,578.19 L1043.90,579.31 L1044.10,580.86 L1044.30,580.08 L1044.50,579.69 L1044.70,579.88 L1044.90,577.66 L1045.10,576.05 L1045.30,574.77 L1045.50,567.66 L1045.70,561.45 L1045.90,557.74 L1046.10,566.68 L1046.30,571.68 L1046.50,577.25 L1046.70,579.65 L1046.90,578.34 L1047.10,580.88 L1047.30,580.00 L1047.50,581.57 L1047.70,582.32 L1047.90,579.33 L1048.10,580.35 L1048.30,580.28 L1048.50,581.13 L1048.70,579.96 L1048.90,575.50 L1049.10,572.47 L1049.30,566.61 L1049.50,556.37 L1049.70,551.88 L1049.90,562.31 L1050.10,571.78 L1050.30,575.82 L1050.50,577.13 L1050.70,579.89 L1050.90,580.60 L1051.10,581.69 L1051.30,579.68 L1051.50,579.35 L1051.70,580.30 L1051.90,579.92 L1052.10,580.03 L1052.30,578.51 L1052.50,579.20 L1052.70,576.83 L1052.90,572.68 L1053.10,564.92 L1053.30,558.36 L1053.50,562.47 L1053.70,573.23 L1053.90,575.77 L1054.10,578.93 L1054.30,581.33 L1054.50,581.22 L1054.70,581.36 L1054.90,582.84 L1055.10,580.71 L1055.30,582.67 L1055.50,581.41 L1055.70,580.26 L1055.90,579.65 L1056.10,578.00 L1056.30,576.34 L1056.50,570.17 L1056.70,559.36 L1056.90,550.54 L1057.10,559.07 L1057.30,571.13 L1057.50,576.72 L1057.70,580.04 L1057.90,579.88 L1058.10,581.10 L1058.30,582.22 L1058.50,581.19 L1058.70,581.24 L1058.90,582.06 L1059.10,581.08 L1059.30,582.03 L1059.50,579.64 L1059.70,577.56 L1059.90,575.22 L1060.10,567.75 L1060.30,558.97 L1060.50,561.49 L1060.70,571.59 L1060.90,576.16 L1061.10,578.76 L1061.30,579.40 L1061.50,581.42 L1061.70,581.88 L1061.90,581.75 L1062.10,581.68 L1062.30,582.03 L1062.50,579.92 L1062.70,581.56 L1062.90,578.54 L1063.10,576.68 L1063.30,574.52 L1063.50,566.45 L1063.70,559.90 L1063.90,566.64 L1064.10,573.53 L1064.30,578.58 L1064.50,577.53 L1064.70,579.60 L1064.90,579.89 L1065.10,579.17 L1065.30,579.78 L1065.50,579.77 L1065.70,579.55 L1065.90,579.75 L1066.10,579.01 L1066.30,577.31 L1066.50,574.24 L1066.70,568.10 L1066.90,557.80 L1067.10,561.64 L1067.30,573.13 L1067.50,576.03 L1067.70,579.55 L1067.90,579.93 L1068.10,581.50 L1068.30,582.33 L1068.50,581.91 L1068.70,581.59 L1068.90,582.40 L1069.10,579.74 L1069.30,581.03 L1069.50,577.35 L1069.70,573.60 L1069.90,562.31 L1070.10,550.13 L1070.30,559.66 L1070.50,572.49 L1070.70,575.66 L1070.90,579.48 L1071.10,581.32 L1071.30,581.29 L1071.50,582.26 L1071.70,582.03 L1071.90,582.01 L1072.10,579.21 L1072.30,579.91 L1072.50,577.87 L1072.70,575.30 L1072.90,569.25 L1073.10,556.10 L1073.30,554.47 L1073.50,569.14 L1073.70,575.88 L1073.90,576.49 L1074.10,577.95 L1074.30,578.62 L1074.50,581.50 L1074.70,578.85 L1074.90,580.28 L1075.10,580.88 L1075.30,578.12 L1075.50,578.37 L1075.70,574.56 L1075.90,568.91 L1076.10,555.73 L1076.30,557.35 L1076.50,572.17 L1076.70,577.51 L1076.90,581.36 L1077.10,581.74 L1077.30,580.58 L1077.50,580.72 L1077.70,583.74 L1077.90,582.60 L1078.10,582.55 L1078.30,581.80 L1078.50,578.53 L1078.70,575.38 L1078.90,565.09 L1079.10,551.16 L1079.30,564.00 L1079.50,575.42 L1079.70,577.72 L1079.90,580.71 L1080.10,581.93 L1080.30,582.54 L1080.50,583.60 L1080.70,582.51 L1080.90,582.49 L1081.10,581.76 L1081.30,580.97 L1081.50,577.84 L1081.70,570.20 L1081.90,557.72 L1082.10,564.75 L1082.30,573.32 L1082.50,579.63 L1082.70,579.07 L1082.90,580.50 L1083.10,580.75 L1083.30,582.44 L1083.50,581.99 L1083.70,580.38 L1083.90,579.85 L1084.10,580.30 L1084.30,576.97 L1084.50,569.96 L1084.70,560.64 L1084.90,570.13 L1085.10,575.75 L1085.30,580.06 L1085.50,580.35 L1085.70,582.23 L1085.90,581.47 L1086.10,581.53 L1086.30,582.40 L1086.50,580.86 L1086.70,581.99 L1086.90,578.44 L1087.10,574.59 L1087.30,566.02 L1087.50,562.95 L1087.70,572.95 L1087.90,578.80 L1088.10,580.96 L1088.30,582.10 L1088.50,579.84 L1088.70,580.87 L1088.90,580.96 L1089.10,580.12 L1089.30,581.13 L1089.50,578.10 L1089.70,575.79 L1089.90,563.01 L1090.10,556.37 L1090.30,569.05 L1090.50,578.21 L1090.70,579.39 L1090.90,580.84 L1091.10,580.93 L1091.30,581.15 L1091.50,582.03 L1091.70,582.49 L1091.90,580.18 L1092.10,579.50 L1092.30,575.38 L1092.50,566.57 L1092.70,557.91 L1092.90,573.19 L1093.10,577.22 L1093.30,580.08 L1093.50,582.58 L1093.70,582.73 L1093.90,582.87 L1094.10,583.07 L1094.30,581.86 L1094.50,581.91 L1094.70,579.00 L1094.90,573.89 L1095.10,561.32 L1095.30,565.61 L1095.50,577.33 L1095.70,578.77 L1095.90,581.49 L1096.10,581.39 L1096.30,581.68 L1096.50,582.58 L1096.70,583.23 L1096.90,580.57 L1097.10,580.96 L1097.30,576.91 L1097.50,565.72 L1097.70,558.94 L1097.90,571.96 L1098.10,577.04 L1098.30,580.78 L1098.50,580.32 L1098.70,582.25 L1098.90,582.49 L1099.10,580.92 L1099.30,579.71 L1099.50,580.69 L1099.70,575.93 L1099.90,567.80 L1100.10,562.29 L1100.30,573.51 L1100.50,579.52 L1100.70,579.72 L1100.90,580.81 L1101.10,580.36 L1101.30,580.99 L1101.50,582.31 L1101.70,581.53 L1101.90,580.28 L1102.10,578.12 L1102.30,566.86 L1102.50,566.03 L1102.70,578.18 L1102.90,579.84 L1103.10,583.44 L1103.30,583.30 L1103.50,583.30 L1103.70,583.99 L1103.90,582.07" fill="none" stroke="#0000ff" stroke-width="1" shape-rendering="crispEdges"/>
<path d="M560.00,485.50 L566.75,484.39 L576.88,485.57 L581.94,484.39 L590.38,481.86 L593.76,480.51 L602.19,481.01 L605.57,481.86 L617.38,474.26 L625.82,474.26 L634.26,469.20 L639.32,464.64 L646.08,463.29 L649.45,459.07 L654.51,448.95 L661.27,434.60 L665.49,430.04 L670.55,429.54 L674.77,434.60 L684.89,458.23 L689.96,461.60 L693.33,463.29 L696.71,468.35 L700.08,468.35 L706.84,472.57 L708.52,474.26 L713.00,472.77 L718.42,475.25 L722.10,473.41 L727.62,474.33 L734.99,468.80 L738.67,460.52 L743.28,443.02 L745.67,441.18 L748.80,445.78 L751.57,460.52 L755.25,476.17 L760.77,484.46 L765.38,484.46 L769.06,488.14 L773.66,487.22 L778.27,485.38 L784.71,477.09 L788.40,460.52 L790.61,449.47 L792.08,450.39 L794.84,464.20 L797.61,480.77 L802.21,493.66 L806.81,498.27 L810.13,501.03 L815.10,498.27 L818.78,488.14 L821.55,466.04 L823.76,454.07 L826.15,460.52 L828.91,482.62 L836.28,493.66 L841.80,491.82 L845.49,478.93 L848.50,460.53 L848.50,458.28 L848.70,458.74 L848.90,458.83 L849.10,460.60 L849.30,464.62 L849.50,466.12 L849.70,468.86 L849.90,473.15 L850.10,474.76 L850.30,477.97 L850.50,479.53 L850.70,481.92 L850.90,482.80 L851.10,485.42 L851.30,487.36 L851.50,487.98 L851.70,489.57 L851.90,490.47 L852.10,490.17 L852.30,492.37 L852.50,492.76 L852.70,492.83 L852.90,492.87 L853.10,495.06 L853.30,494.75 L853.50,495.66 L853.70,496.36 L853.90,496.37 L854.10,497.10 L854.30,496.33 L854.50,497.40 L854.70,496.92 L854.90,498.11 L855.10,498.19 L855.30,496.80 L855.50,497.04 L855.70,497.34 L855.90,498.97 L856.10,498.04 L856.30,498.53 L856.50,497.97 L856.70,498.48 L856.90,498.31 L857.10,498.32 L857.30,498.85 L857.50,498.91 L857.70,499.60 L857.90,499.20 L858.10,499.73 L858.30,499.62 L858.50,499.91 L858.70,499.29 L858.90,498.29 L859.10,499.70 L859.30,499.91 L859.50,499.78 L859.70,499.11 L859.90,499.38 L860.10,498.36 L860.30,499.57 L860.50,499.02 L860.70,498.41 L860.90,497.92 L861.10,499.45 L861.30,499.66 L861.50,497.79 L861.70,499.13 L861.90,498.27 L862.10,497.65 L862.30,497.82 L862.50,498.65 L862.70,498.73 L862.90,496.92 L863.10,497.89 L863.30,496.57 L863.50,497.71 L863.70,496.70 L863.90,497.54 L864.10,497.45 L864.30,496.18 L864.50,496.81 L864.70,495.02 L864.90,494.10 L865.10,494.63 L865.30,492.91 L865.50,492.58 L865.70,492.24 L865.90,491.78 L866.10,489.88 L866.30,488.51 L866.50,488.85 L866.70,486.24 L866.90,485.80 L867.10,483.69 L867.30,480.40 L867.50,478.03 L867.70,475.36 L867.90,472.61 L868.10,469.44 L868.30,466.42 L868.50,463.96 L868.70,462.72 L868.90,460.93 L869.10,460.59 L869.30,462.32 L869.50,466.43 L869.70,469.04 L869.90,473.01 L870.10,475.91 L870.30,480.54 L870.50,484.39 L870.70,486.43 L870.90,490.42 L871.10,492.91 L871.30,493.89 L871.50,496.88 L871.70,498.16 L871.90,499.98 L872.10,500.54 L872.30,502.30 L872.50,503.28 L872.70,502.66 L872.90,503.44 L873.10,505.30 L873.30,506.42 L873.50,505.48 L873.70,506.33 L873.90,506.99 L874.10,506.78 L874.30,507.18 L874.50,507.35 L874.70,507.71 L874.90,508.38 L875.10,507.99 L875.30,508.31 L875.50,509.26 L875.70,507.91 L875.90,509.12 L876.10,509.56 L876.30,508.80 L876.50,508.71 L876.70,509.95 L876.90,508.88 L877.10,508.82 L877.30,509.36 L877.50,509.92 L877.70,508.74 L877.90,509.19 L878.10,509.22 L878.30,510.21 L878.50,509.40 L878.70,510.21 L878.90,508.80 L879.10,509.09 L879.30,509.66 L879.50,510.05 L879.70,509.10 L879.90,508.55 L880.10,508.23 L880.30,508.92 L880.50,508.10 L880.70,509.16 L880.90,509.04 L881.10,507.52 L881.30,507.46 L881.50,508.25 L881.70,507.61 L881.90,507.58 L882.10,506.26 L882.30,505.37 L882.50,505.18 L882.70,505.58 L882.90,503.84 L883.10,503.20 L883.30,502.41 L883.50,501.34 L883.70,500.06 L883.90,499.60 L884.10,496.33 L884.30,493.98 L884.50,493.44 L884.70,490.49 L884.90,487.43 L885.10,482.60 L885.30,479.51 L885.50,475.14 L885.70,469.54 L885.90,467.02 L886.10,464.85 L886.30,463.19 L886.50,464.22 L886.70,466.22 L886.90,469.01 L887.10,473.57 L887.30,476.50 L887.50,480.87 L887.70,482.31 L887.90,486.62 L888.10,488.43 L888.30,490.78 L888.50,492.33 L888.70,493.69 L888.90,494.20 L889.10,494.05 L889.30,496.35 L889.50,495.92 L889.70,496.80 L889.90,498.05 L890.10,498.24 L890.30,498.42 L890.50,499.82 L890.70,499.47 L890.90,499.20 L891.10,499.26 L891.30,500.68 L891.50,500.10 L891.70,500.87 L891.90,500.15 L892.10,499.96 L892.30,500.74 L892.50,501.40 L892.70,500.18 L892.90,501.49 L893.10,501.81 L893.30,501.62 L893.50,501.69 L893.70,500.08 L893.90,501.34 L894.10,501.81 L894.30,500.18 L894.50,500.61 L894.70,500.58 L894.90,501.06 L895.10,500.80 L895.30,500.85 L895.50,501.38 L895.70,499.75 L895.90,499.76 L896.10,499.78 L896.30,499.64 L896.50,499.38 L896.70,501.01 L896.90,500.56 L897.10,498.79 L897.30,499.34 L897.50,498.65 L897.70,498.28 L897.90,497.92 L898.10,498.01 L898.30,497.29 L898.50,496.14 L898.70,494.98 L898.90,494.27 L899.10,492.67 L899.30,492.11 L899.50,490.72 L899.70,487.98 L899.90,484.91 L900.10,482.18 L900.30,479.19 L900.50,475.94 L900.70,472.53 L900.90,468.40 L901.10,467.00 L901.30,465.55 L901.50,467.19 L901.70,470.72 L901.90,474.27 L902.10,479.23 L902.30,482.97 L902.50,486.28 L902.70,490.07 L902.90,493.08 L903.10,494.07 L903.30,496.63 L903.50,498.16 L903.70,500.34 L903.90,501.51 L904.10,501.27 L904.30,503.07 L904.50,503.49 L904.70,502.97 L904.90,503.84 L905.10,503.55 L905.30,505.27 L905.50,505.26 L905.70,505.96 L905.90,505.99 L906.10,505.93 L906.30,506.22 L906.50,506.02 L906.70,505.21 L906.90,506.28 L907.10,505.20 L907.30,505.54 L907.50,506.85 L907.70,505.43 L907.90,505.54 L908.10,505.57 L908.30,507.12 L908.50,505.70 L908.70,505.36 L908.90,506.95 L909.10,505.44 L909.30,506.81 L909.50,506.37 L909.70,506.57 L909.90,506.67 L910.10,505.75 L910.30,505.99 L910.50,504.24 L910.70,505.43 L910.90,504.59 L911.10,504.62 L911.30,502.96 L911.50,503.72 L911.70,503.46 L911.90,500.96 L912.10,500.57 L912.30,499.95 L912.50,499.12 L912.70,496.29 L912.90,494.12 L913.10,491.73 L913.30,489.36 L913.50,485.91 L913.70,480.86 L913.90,476.14 L914.10,471.79 L914.30,468.46 L914.50,467.60 L914.70,470.32 L914.90,473.58 L915.10,480.01 L915.30,484.80 L915.50,491.33 L915.70,496.14 L915.90,499.85 L916.10,502.68 L916.30,505.16 L916.50,507.53 L916.70,509.71 L916.90,509.58 L917.10,510.59 L917.30,512.82 L917.50,513.93 L917.70,513.78 L917.90,514.17 L918.10,515.18 L918.30,514.50 L918.50,514.99 L918.70,515.13 L918.90,516.14 L919.10,515.80 L919.30,515.80 L919.50,516.85 L919.70,517.48 L919.90,516.25 L920.10,517.13 L920.30,516.59 L920.50,517.49 L920.70,516.95 L920.90,516.29 L921.10,516.15 L921.30,515.69 L921.50,516.51 L921.70,516.21 L921.90,515.64 L922.10,515.84 L922.30,515.55 L922.50,516.19 L922.70,514.62 L922.90,515.95 L923.10,514.49 L923.30,514.20 L923.50,513.30 L923.70,513.27 L923.90,512.30 L924.10,510.62 L924.30,509.04 L924.50,507.74 L924.70,505.78 L924.90,502.05 L925.10,499.15 L925.30,495.15 L925.50,488.74 L925.70,482.06 L925.90,475.74 L926.10,471.61 L926.30,469.34 L926.50,469.87 L926.70,473.59 L926.90,478.78 L927.10,483.74 L927.30,489.29 L927.50,493.33 L927.70,496.40 L927.90,497.47 L928.10,500.56 L928.30,500.93 L928.50,502.33 L928.70,503.90 L928.90,503.38 L929.10,504.02 L929.30,506.02 L929.50,505.37 L929.70,505.86 L929.90,506.60 L930.10,507.04 L930.30,505.90 L930.50,506.73 L930.70,507.07 L930.90,507.28 L931.10,506.82 L931.30,507.63 L931.50,508.42 L931.70,507.32 L931.90,507.63 L932.10,506.77 L932.30,507.04 L932.50,507.77 L932.70,506.59 L932.90,508.04 L933.10,507.95 L933.30,506.17 L933.50,507.66 L933.70,506.28 L933.90,506.78 L934.10,506.39 L934.30,505.03 L934.50,505.25 L934.70,504.54 L934.90,504.01 L935.10,501.88 L935.30,501.52 L935.50,500.23 L935.70,497.44 L935.90,494.31 L936.10,489.81 L936.30,486.05 L936.50,480.59 L936.70,476.29 L936.90,472.82 L937.10,472.51 L937.30,475.74 L937.50,480.23 L937.70,487.43 L937.90,492.11 L938.10,495.24 L938.30,500.14 L938.50,501.09 L938.70,503.42 L938.90,505.72 L939.10,506.66 L939.30,507.52 L939.50,508.45 L939.70,508.68 L939.90,508.88 L940.10,509.01 L940.30,509.12 L940.50,510.68 L940.70,510.98 L940.90,510.73 L941.10,511.26 L941.30,510.61 L941.50,510.50 L941.70,510.79 L941.90,511.80 L942.10,510.14 L942.30,511.05 L942.50,510.49 L942.70,511.46 L942.90,510.54 L943.10,510.36 L943.30,510.34 L943.50,510.40 L943.70,510.60 L943.90,509.44 L944.10,510.03 L944.30,508.06 L944.50,507.74 L944.70,506.61 L944.90,505.63 L945.10,505.66 L945.30,503.85 L945.50,500.53 L945.70,497.57 L945.90,494.13 L946.10,489.80 L946.30,484.08 L946.50,478.20 L946.70,474.24 L946.90,473.92 L947.10,479.97 L947.30,487.77 L947.50,494.60 L947.70,501.00 L947.90,506.96 L948.10,509.17 L948.30,513.51 L948.50,515.80 L948.70,517.54 L948.90,517.66 L949.10,518.98 L949.30,519.82 L949.50,520.54 L949.70,521.72 L949.90,521.54 L950.10,521.09 L950.30,522.46 L950.50,521.91 L950.70,522.29 L950.90,522.65 L951.10,521.27 L951.30,522.84 L951.50,522.62 L951.70,522.24 L951.90,522.23 L952.10,521.98 L952.30,521.29 L952.50,521.74 L952.70,520.48 L952.90,521.06 L953.10,520.91 L953.30,519.95 L953.50,519.49 L953.70,519.37 L953.90,518.08 L954.10,515.04 L954.30,514.35 L954.50,511.32 L954.70,506.53 L954.90,502.22 L955.10,495.46 L955.30,487.20 L955.50,480.09 L955.70,475.85 L955.90,476.15 L956.10,480.09 L956.30,488.20 L956.50,493.81 L956.70,499.31 L956.90,502.52 L957.10,505.24 L957.30,506.42 L957.50,508.82 L957.70,510.18 L957.90,510.89 L958.10,510.71 L958.30,511.86 L958.50,511.73 L958.70,511.30 L958.90,511.42 L959.10,511.68 L959.30,512.07 L959.50,512.10 L959.70,512.84 L959.90,513.28 L960.10,512.97 L960.30,512.71 L960.50,513.10 L960.70,512.31 L960.90,512.49 L961.10,512.88 L961.30,511.92 L961.50,511.16 L961.70,512.19 L961.90,511.30 L962.10,509.90 L962.30,509.01 L962.50,508.13 L962.70,506.65 L962.90,503.70 L963.10,500.20 L963.30,496.39 L963.50,491.87 L963.70,483.74 L963.90,478.04 L964.10,474.93 L964.30,478.60 L964.50,485.00 L964.70,491.87 L964.90,497.87 L965.10,502.30 L965.30,506.05 L965.50,507.44 L965.70,509.00 L965.90,511.06 L966.10,511.89 L966.30,513.18 L966.50,512.41 L966.70,513.52 L966.90,513.83 L967.10,513.33 L967.30,515.40 L967.50,514.04 L967.70,513.88 L967.90,514.69 L968.10,514.08 L968.30,514.96 L968.50,514.34 L968.70,513.79 L968.90,513.48 L969.10,514.62 L969.30,513.42 L969.50,514.06 L969.70,512.92 L969.90,513.19 L970.10,511.05 L970.30,509.77 L970.50,508.18 L970.70,507.01 L970.90,503.43 L971.10,498.32 L971.30,491.62 L971.50,485.32 L971.70,479.55 L971.90,476.51 L972.10,482.92 L972.30,492.64 L972.50,501.03 L972.70,507.59 L972.90,513.42 L973.10,517.17 L973.30,518.08 L973.50,521.30 L973.70,521.53 L973.90,523.10 L974.10,524.02 L974.30,524.59 L974.50,523.18 L974.70,524.02 L974.90,524.84 L975.10,525.67 L975.30,524.05 L975.50,524.49 L975.70,525.59 L975.90,524.05 L976.10,524.46 L976.30,524.15 L976.50,524.57 L976.70,524.68 L976.90,522.67 L977.10,523.13 L977.30,522.21 L977.50,521.18 L977.70,518.92 L977.90,517.27 L978.10,512.70 L978.30,507.81 L978.50,500.29 L978.70,492.02 L978.90,482.06 L979.10,478.88 L979.30,483.78 L979.50,493.60 L979.70,501.88 L979.90,508.71 L980.10,512.64 L980.30,516.91 L980.50,517.73 L980.70,520.18 L980.90,521.89 L981.10,522.56 L981.30,522.02 L981.50,522.76 L981.70,524.31 L981.90,524.16 L982.10,524.80 L982.30,524.88 L982.50,524.08 L982.70,524.95 L982.90,524.55 L983.10,523.60 L983.30,523.46 L983.50,522.55 L983.70,522.78 L983.90,523.31 L984.10,520.82 L984.30,520.67 L984.50,518.24 L984.70,516.03 L984.90,514.03 L985.10,508.56 L985.30,501.31 L985.50,492.09 L985.70,483.08 L985.90,477.97 L986.10,484.64 L986.30,492.90 L986.50,502.33 L986.70,508.31 L986.90,513.25 L987.10,515.74 L987.30,518.05 L987.50,518.91 L987.70,519.20 L987.90,519.89 L988.10,520.22 L988.30,522.09 L988.50,520.94 L988.70,520.95 L988.90,522.95 L989.10,521.47 L989.30,522.85 L989.50,521.16 L989.70,521.77 L989.90,521.07 L990.10,521.96 L990.30,521.08 L990.50,520.51 L990.70,519.89 L990.90,518.89 L991.10,516.09 L991.30,514.02 L991.50,509.79 L991.70,503.19 L991.90,496.08 L992.10,485.75 L992.30,481.07 L992.50,485.48 L992.70,496.61 L992.90,504.68 L993.10,511.74 L993.30,516.30 L993.50,518.30 L993.70,521.17 L993.90,522.86 L994.10,523.17 L994.30,524.28 L994.50,524.68 L994.70,524.23 L994.90,524.73 L995.10,526.17 L995.30,524.91 L995.50,525.09 L995.70,524.31 L995.90,524.41 L996.10,524.04 L996.30,525.19 L996.50,524.24 L996.70,523.77 L996.90,522.92 L997.10,520.62 L997.30,518.96 L997.50,514.67 L997.70,509.00 L997.90,501.72 L998.10,490.44 L998.30,481.36 L998.50,482.03 L998.70,494.36 L998.90,505.43 L999.10,512.08 L999.30,518.46 L999.50,520.24 L999.70,522.22 L999.90,524.95 L1000.10,525.11 L1000.30,526.28 L1000.50,527.03 L1000.70,526.19 L1000.90,527.83 L1001.10,527.03 L1001.30,527.39 L1001.50,527.17 L1001.70,527.84 L1001.90,527.63 L1002.10,526.36 L1002.30,525.48 L1002.50,525.14 L1002.70,524.31 L1002.90,522.10 L1003.10,519.91 L1003.30,517.50 L1003.50,511.60 L1003.70,503.14 L1003.90,491.20 L1004.10,482.78 L1004.30,485.49 L1004.50,495.68 L1004.70,504.27 L1004.90,509.87 L1005.10,513.00 L1005.30,516.20 L1005.50,516.52 L1005.70,517.85 L1005.90,519.37 L1006.10,519.68 L1006.30,518.98 L1006.50,519.08 L1006.70,520.33 L1006.90,518.78 L1007.10,518.98 L1007.30,519.67 L1007.50,519.47 L1007.70,518.42 L1007.90,517.72 L1008.10,517.34 L1008.30,517.47 L1008.50,515.34 L1008.70,514.01 L1008.90,509.84 L1009.10,504.06 L1009.30,492.85 L1009.50,483.51 L1009.70,483.32 L1009.90,493.25 L1010.10,505.18 L1010.30,511.64 L1010.50,516.59 L1010.70,519.26 L1010.90,522.15 L1011.10,522.56 L1011.30,523.04 L1011.50,523.15 L1011.70,524.28 L1011.90,524.90 L1012.10,525.11 L1012.30,525.60 L1012.50,525.32 L1012.70,524.01 L1012.90,523.49 L1013.10,524.26 L1013.30,523.63 L1013.50,522.04 L1013.70,521.11 L1013.90,518.10 L1014.10,513.57 L1014.30,506.71 L1014.50,495.82 L1014.70,484.74 L1014.90,481.97 L1015.10,495.03 L1015.30,509.51 L1015.50,518.53 L1015.70,523.65 L1015.90,526.63 L1016.10,528.96 L1016.30,529.65 L1016.50,530.60 L1016.70,532.22 L1016.90,533.25 L1017.10,532.61 L1017.30,532.46 L1017.50,532.35 L1017.70,532.44 L1017.90,532.89 L1018.10,531.77 L1018.30,532.13 L1018.50,529.53 L1018.70,528.31 L1018.90,526.27 L1019.10,522.00 L1019.30,515.97 L1019.50,504.60 L1019.70,491.42 L1019.90,488.47 L1020.10,498.02 L1020.30,507.56 L1020.50,513.25 L1020.70,517.67 L1020.90,520.21 L1021.10,519.92 L1021.30,521.90 L1021.50,521.87 L1021.70,522.52 L1021.90,523.50 L1022.10,523.74 L1022.30,523.12 L1022.50,522.14 L1022.70,523.40 L1022.90,521.60 L1023.10,521.51 L1023.30,521.62 L1023.50,519.39 L1023.70,517.36 L1023.90,515.46 L1024.10,509.76 L1024.30,499.02 L1024.50,488.30 L1024.70,488.07 L1024.90,501.26 L1025.10,509.77 L1025.30,516.24 L1025.50,519.71 L1025.70,521.55 L1025.90,523.74 L1026.10,524.99 L1026.30,525.71 L1026.50,525.62 L1026.70,526.18 L1026.90,524.61 L1027.10,525.11 L1027.30,526.30 L1027.50,524.19 L1027.70,524.07 L1027.90,523.68 L1028.10,521.96 L1028.30,520.41 L1028.50,515.81 L1028.70,509.76 L1028.90,500.25 L1029.10,486.38 L1029.30,489.76 L1029.50,502.71 L1029.70,513.39 L1029.90,518.55 L1030.10,521.84 L1030.30,525.29 L1030.50,525.37 L1030.70,526.20 L1030.90,527.97 L1031.10,528.38 L1031.30,526.88 L1031.50,528.73 L1031.70,527.78 L1031.90,527.23 L1032.10,526.26 L1032.30,526.12 L1032.50,526.19 L1032.70,522.91 L1032.90,519.37 L1033.10,513.50 L1033.30,503.06 L1033.50,491.19 L1033.70,492.09 L1033.90,506.08 L1034.10,515.76 L1034.30,521.06 L1034.50,522.53 L1034.70,524.45 L1034.90,526.67 L1035.10,526.38 L1035.30,527.21 L1035.50,526.65 L1035.70,526.15 L1035.90,526.75 L1036.10,527.38 L1036.30,527.11 L1036.50,526.12 L1036.70,524.98 L1036.90,523.58 L1037.10,520.71 L1037.30,515.98 L1037.50,507.49 L1037.70,493.40 L1037.90,492.80 L1038.10,507.58 L1038.30,522.81 L1038.50,530.10 L1038.70,532.81 L1038.90,535.30 L1039.10,536.54 L1039.30,537.07 L1039.50,539.41 L1039.70,538.53 L1039.90,539.52 L1040.10,537.89 L1040.30,537.38 L1040.50,538.52 L1040.70,537.42 L1040.90,536.23 L1041.10,532.89 L1041.30,527.63 L1041.50,518.68 L1041.70,500.86 L1041.90,488.75 L1042.10,498.38 L1042.30,511.40 L1042.50,519.66 L1042.70,523.52 L1042.90,525.66 L1043.10,527.05 L1043.30,528.31 L1043.50,529.52 L1043.70,529.67 L1043.90,529.59 L1044.10,529.45 L1044.30,528.10 L1044.50,528.99 L1044.70,526.74 L1044.90,525.04 L1045.10,523.31 L1045.30,519.10 L1045.50,509.20 L1045.70,494.98 L1045.90,489.38 L1046.10,507.16 L1046.30,522.73 L1046.50,531.56 L1046.70,536.00 L1046.90,537.39 L1047.10,538.56 L1047.30,539.69 L1047.50,539.03 L1047.70,539.92 L1047.90,540.72 L1048.10,540.31 L1048.30,538.32 L1048.50,538.94 L1048.70,536.32 L1048.90,534.52 L1049.10,527.60 L1049.30,515.94 L1049.50,497.18 L1049.70,489.52 L1049.90,505.22 L1050.10,518.38 L1050.30,525.38 L1050.50,529.41 L1050.70,531.16 L1050.90,532.24 L1051.10,533.45 L1051.30,534.25 L1051.50,533.80 L1051.70,532.86 L1051.90,532.73 L1052.10,532.48 L1052.30,531.98 L1052.50,529.26 L1052.70,525.83 L1052.90,519.65 L1053.10,506.39 L1053.30,491.42 L1053.50,502.62 L1053.70,521.12 L1053.90,531.18 L1054.10,536.04 L1054.30,538.71 L1054.50,539.16 L1054.70,540.42 L1054.90,539.71 L1055.10,541.37 L1055.30,540.27 L1055.50,540.12 L1055.70,540.25 L1055.90,537.79 L1056.10,535.34 L1056.30,532.29 L1056.50,522.96 L1056.70,504.37 L1056.90,489.36 L1057.10,504.29 L1057.30,517.92 L1057.50,525.60 L1057.70,529.46 L1057.90,531.59 L1058.10,532.47 L1058.30,533.43 L1058.50,533.75 L1058.70,533.33 L1058.90,532.44 L1059.10,533.72 L1059.30,532.24 L1059.50,529.38 L1059.70,526.99 L1059.90,521.23 L1060.10,508.19 L1060.30,488.28 L1060.50,497.15 L1060.70,516.98 L1060.90,526.82 L1061.10,530.51 L1061.30,533.05 L1061.50,534.65 L1061.70,535.94 L1061.90,534.90 L1062.10,535.33 L1062.30,534.52 L1062.50,535.10 L1062.70,532.87 L1062.90,532.81 L1063.10,528.33 L1063.30,520.66 L1063.50,503.27 L1063.70,487.62 L1063.90,505.19 L1064.10,523.45 L1064.30,533.76 L1064.50,537.30 L1064.70,539.16 L1064.90,539.65 L1065.10,540.44 L1065.30,541.88 L1065.50,540.29 L1065.70,540.71 L1065.90,540.07 L1066.10,537.99 L1066.30,535.78 L1066.50,529.68 L1066.70,515.35 L1066.90,493.86 L1067.10,499.51 L1067.30,515.58 L1067.50,523.48 L1067.70,528.50 L1067.90,529.00 L1068.10,531.15 L1068.30,531.86 L1068.50,530.40 L1068.70,531.92 L1068.90,530.55 L1069.10,529.46 L1069.30,528.04 L1069.50,525.02 L1069.70,520.03 L1069.90,506.47 L1070.10,491.21 L1070.30,502.68 L1070.50,518.07 L1070.70,524.67 L1070.90,527.99 L1071.10,529.59 L1071.30,531.28 L1071.50,530.97 L1071.70,530.63 L1071.90,530.72 L1072.10,530.73 L1072.30,530.08 L1072.50,527.65 L1072.70,524.76 L1072.90,514.98 L1073.10,499.11 L1073.30,500.11 L1073.50,516.90 L1073.70,526.16 L1073.90,530.14 L1074.10,532.02 L1074.30,532.57 L1074.50,532.24 L1074.70,533.83 L1074.90,533.84 L1075.10,532.65 L1075.30,531.89 L1075.50,529.38 L1075.70,526.61 L1075.90,516.64 L1076.10,497.29 L1076.30,500.89 L1076.50,525.19 L1076.70,535.35 L1076.90,539.49 L1077.10,542.79 L1077.30,543.14 L1077.50,544.44 L1077.70,544.26 L1077.90,543.06 L1078.10,543.21 L1078.30,542.40 L1078.50,538.63 L1078.70,531.87 L1078.90,515.87 L1079.10,495.00 L1079.30,512.37 L1079.50,526.84 L1079.70,533.14 L1079.90,537.30 L1080.10,538.24 L1080.30,538.38 L1080.50,539.78 L1080.70,539.64 L1080.90,538.45 L1081.10,538.25 L1081.30,535.65 L1081.50,530.34 L1081.70,516.70 L1081.90,494.32 L1082.10,506.52 L1082.30,526.61 L1082.50,535.12 L1082.70,537.98 L1082.90,540.51 L1083.10,541.01 L1083.30,540.94 L1083.50,540.30 L1083.70,540.68 L1083.90,539.05 L1084.10,537.39 L1084.30,530.58 L1084.50,516.51 L1084.70,494.80 L1084.90,510.44 L1085.10,526.99 L1085.30,534.47 L1085.50,536.69 L1085.70,538.59 L1085.90,538.48 L1086.10,538.49 L1086.30,539.13 L1086.50,539.19 L1086.70,537.53 L1086.90,533.39 L1087.10,524.63 L1087.30,503.32 L1087.50,498.59 L1087.70,518.20 L1087.90,530.06 L1088.10,533.10 L1088.30,534.76 L1088.50,535.21 L1088.70,536.90 L1088.90,535.26 L1089.10,535.53 L1089.30,534.24 L1089.50,531.02 L1089.70,524.71 L1089.90,509.59 L1090.10,495.21 L1090.30,517.82 L1090.50,533.12 L1090.70,538.55 L1090.90,539.76 L1091.10,541.25 L1091.30,542.69 L1091.50,541.36 L1091.70,541.72 L1091.90,539.28 L1092.10,537.43 L1092.30,529.46 L1092.50,510.94 L1092.70,499.76 L1092.90,523.91 L1093.10,536.57 L1093.30,540.63 L1093.50,543.32 L1093.70,543.07 L1093.90,543.89 L1094.10,543.76 L1094.30,542.59 L1094.50,540.11 L1094.70,536.13 L1094.90,525.73 L1095.10,499.02 L1095.30,507.29 L1095.50,527.40 L1095.70,534.82 L1095.90,537.07 L1096.10,537.69 L1096.30,539.25 L1096.50,539.68 L1096.70,539.63 L1096.90,537.11 L1097.10,534.46 L1097.30,529.46 L1097.50,510.63 L1097.70,500.23 L1097.90,525.42 L1098.10,536.50 L1098.30,540.30 L1098.50,541.04 L1098.70,541.66 L1098.90,542.75 L1099.10,542.89 L1099.30,540.31 L1099.50,537.48 L1099.70,530.97 L1099.90,513.32 L1100.10,499.33 L1100.30,522.10 L1100.50,532.30 L1100.70,537.04 L1100.90,537.21 L1101.10,538.40 L1101.30,539.32 L1101.50,537.88 L1101.70,536.49 L1101.90,534.77 L1102.10,527.09 L1102.30,507.77 L1102.50,502.63 L1102.70,529.01 L1102.90,538.06 L1103.10,542.00 L1103.30,542.74 L1103.50,543.04 L1103.70,543.43 L1103.90,543.44" fill="none" stroke="#ff0000" stroke-width="1" shape-rendering="crispEdges"/>
<rect x="9" y="348" width="16" height="270" fill="url(#dith)" />
<rect x="9" y="348" width="16" height="17" fill="#f0f0f0" />
<rect x="9" y="348" width="16" height="1" fill="#ffffff" />
<rect x="9" y="348" width="1" height="17" fill="#ffffff" />
<rect x="9" y="364" width="16" height="1" fill="#696969" />
<rect x="24" y="348" width="1" height="17" fill="#696969" />
<rect x="10" y="363" width="14" height="1" fill="#a0a0a0" />
<rect x="23" y="349" width="1" height="15" fill="#a0a0a0" />
<path d="M13,358 L20,358 L16.5,353.5 Z" fill="#000"/>
<rect x="9" y="474" width="16" height="18" fill="#f0f0f0" />
<rect x="9" y="474" width="16" height="1" fill="#ffffff" />
<rect x="9" y="474" width="1" height="18" fill="#ffffff" />
<rect x="9" y="491" width="16" height="1" fill="#696969" />
<rect x="24" y="474" width="1" height="18" fill="#696969" />
<rect x="10" y="490" width="14" height="1" fill="#a0a0a0" />
<rect x="23" y="475" width="1" height="16" fill="#a0a0a0" />
<rect x="9" y="601" width="16" height="17" fill="#f0f0f0" />
<rect x="9" y="601" width="16" height="1" fill="#ffffff" />
<rect x="9" y="601" width="1" height="17" fill="#ffffff" />
<rect x="9" y="617" width="16" height="1" fill="#696969" />
<rect x="24" y="601" width="1" height="17" fill="#696969" />
<rect x="10" y="616" width="14" height="1" fill="#a0a0a0" />
<rect x="23" y="602" width="1" height="15" fill="#a0a0a0" />
<path d="M13,607 L21,607 L17,611 Z" fill="#000"/>
<rect x="1335" y="348" width="16" height="270" fill="url(#dith)" />
<rect x="1335" y="348" width="16" height="17" fill="#f0f0f0" />
<rect x="1335" y="348" width="16" height="1" fill="#ffffff" />
<rect x="1335" y="348" width="1" height="17" fill="#ffffff" />
<rect x="1335" y="364" width="16" height="1" fill="#696969" />
<rect x="1350" y="348" width="1" height="17" fill="#696969" />
<rect x="1336" y="363" width="14" height="1" fill="#a0a0a0" />
<rect x="1349" y="349" width="1" height="15" fill="#a0a0a0" />
<path d="M1339,358 L1346,358 L1342.5,353.5 Z" fill="#000"/>
<rect x="1335" y="474" width="16" height="18" fill="#f0f0f0" />
<rect x="1335" y="474" width="16" height="1" fill="#ffffff" />
<rect x="1335" y="474" width="1" height="18" fill="#ffffff" />
<rect x="1335" y="491" width="16" height="1" fill="#696969" />
<rect x="1350" y="474" width="1" height="18" fill="#696969" />
<rect x="1336" y="490" width="14" height="1" fill="#a0a0a0" />
<rect x="1349" y="475" width="1" height="16" fill="#a0a0a0" />
<rect x="1335" y="601" width="16" height="17" fill="#f0f0f0" />
<rect x="1335" y="601" width="16" height="1" fill="#ffffff" />
<rect x="1335" y="601" width="1" height="17" fill="#ffffff" />
<rect x="1335" y="617" width="16" height="1" fill="#696969" />
<rect x="1350" y="601" width="1" height="17" fill="#696969" />
<rect x="1336" y="616" width="14" height="1" fill="#a0a0a0" />
<rect x="1349" y="602" width="1" height="15" fill="#a0a0a0" />
<path d="M1339,607 L1347,607 L1343,611 Z" fill="#000"/>
<rect x="0" y="628" width="1363" height="24" fill="#f0f0f0" />
<rect x="0" y="628" width="1363" height="1" fill="#ffffff" />
<rect x="1" y="630" width="1" height="21" fill="#a0a0a0" />
<rect x="2" y="630" width="1" height="21" fill="#ffffff" />
<text x="12" y="646" font-size="14" fill="#000" font-weight="bold" text-anchor="start" font-family="Liberation Sans" textLength="8" lengthAdjust="spacingAndGlyphs" >T</text>
<rect x="28" y="630" width="130" height="24" fill="#ffffff" />
<rect x="28" y="630" width="130" height="1" fill="#a0a0a0" />
<rect x="28" y="630" width="1" height="24" fill="#a0a0a0" />
<rect x="29" y="631" width="128" height="1" fill="#696969" />
<rect x="29" y="631" width="1" height="22" fill="#696969" />
<rect x="28" y="653" width="130" height="1" fill="#ffffff" />
<rect x="157" y="630" width="1" height="24" fill="#ffffff" />
<rect x="29" y="652" width="128" height="1" fill="#e3e3e3" />
<rect x="156" y="631" width="1" height="22" fill="#e3e3e3" />
<rect x="141" y="632" width="16" height="21" fill="#f0f0f0" />
<rect x="141" y="632" width="16" height="1" fill="#ffffff" />
<rect x="141" y="632" width="1" height="21" fill="#ffffff" />
<rect x="141" y="652" width="16" height="1" fill="#696969" />
<rect x="156" y="632" width="1" height="21" fill="#696969" />
<rect x="142" y="651" width="14" height="1" fill="#a0a0a0" />
<rect x="155" y="633" width="1" height="19" fill="#a0a0a0" />
<path d="M145.0,640.5 L153.0,640.5 L149.0,644.5 Z" fill="#000"/>
<text x="32" y="647" font-size="13" fill="#000" font-weight="bold" text-anchor="start" font-family="Liberation Sans" >4ms</text>
<rect x="160" y="630" width="105" height="24" fill="#ffffff" />
<rect x="160" y="630" width="105" height="1" fill="#a0a0a0" />
<rect x="160" y="630" width="1" height="24" fill="#a0a0a0" />
<rect x="161" y="631" width="103" height="1" fill="#696969" />
<rect x="161" y="631" width="1" height="22" fill="#696969" />
<rect x="160" y="653" width="105" height="1" fill="#ffffff" />
<rect x="264" y="630" width="1" height="24" fill="#ffffff" />
<rect x="161" y="652" width="103" height="1" fill="#e3e3e3" />
<rect x="263" y="631" width="1" height="22" fill="#e3e3e3" />
<rect x="248" y="632" width="16" height="21" fill="#f0f0f0" />
<rect x="248" y="632" width="16" height="1" fill="#ffffff" />
<rect x="248" y="632" width="1" height="21" fill="#ffffff" />
<rect x="248" y="652" width="16" height="1" fill="#696969" />
<rect x="263" y="632" width="1" height="21" fill="#696969" />
<rect x="249" y="651" width="14" height="1" fill="#a0a0a0" />
<rect x="262" y="633" width="1" height="19" fill="#a0a0a0" />
<path d="M252.0,640.5 L260.0,640.5 L256.0,644.5 Z" fill="#000"/>
<text x="164" y="647" font-size="13" fill="#000" font-weight="bold" text-anchor="start" font-family="Liberation Sans" >x1</text>
<text x="275" y="646" font-size="14" fill="#0000ff" font-weight="bold" text-anchor="start" font-family="Liberation Sans" textLength="8" lengthAdjust="spacingAndGlyphs" >A</text>
<rect x="290" y="630" width="125" height="24" fill="#ffffff" />
<rect x="290" y="630" width="125" height="1" fill="#a0a0a0" />
<rect x="290" y="630" width="1" height="24" fill="#a0a0a0" />
<rect x="291" y="631" width="123" height="1" fill="#696969" />
<rect x="291" y="631" width="1" height="22" fill="#696969" />
<rect x="290" y="653" width="125" height="1" fill="#ffffff" />
<rect x="414" y="630" width="1" height="24" fill="#ffffff" />
<rect x="291" y="652" width="123" height="1" fill="#e3e3e3" />
<rect x="413" y="631" width="1" height="22" fill="#e3e3e3" />
<rect x="399" y="632" width="15" height="21" fill="#f0f0f0" />
<rect x="399" y="632" width="15" height="1" fill="#ffffff" />
<rect x="399" y="632" width="1" height="21" fill="#ffffff" />
<rect x="399" y="652" width="15" height="1" fill="#696969" />
<rect x="413" y="632" width="1" height="21" fill="#696969" />
<rect x="400" y="651" width="13" height="1" fill="#a0a0a0" />
<rect x="412" y="633" width="1" height="19" fill="#a0a0a0" />
<path d="M402.5,640.5 L410.5,640.5 L406.5,644.5 Z" fill="#000"/>
<text x="293" y="647" font-size="13" fill="#0000ff" font-weight="bold" text-anchor="start" font-family="Liberation Sans" textLength="28" lengthAdjust="spacingAndGlyphs" >Auto</text>
<rect x="417" y="630" width="105" height="24" fill="#ffffff" />
<rect x="417" y="630" width="105" height="1" fill="#a0a0a0" />
<rect x="417" y="630" width="1" height="24" fill="#a0a0a0" />
<rect x="418" y="631" width="103" height="1" fill="#696969" />
<rect x="418" y="631" width="1" height="22" fill="#696969" />
<rect x="417" y="653" width="105" height="1" fill="#ffffff" />
<rect x="521" y="630" width="1" height="24" fill="#ffffff" />
<rect x="418" y="652" width="103" height="1" fill="#e3e3e3" />
<rect x="520" y="631" width="1" height="22" fill="#e3e3e3" />
<rect x="506" y="632" width="15" height="21" fill="#f0f0f0" />
<rect x="506" y="632" width="15" height="1" fill="#ffffff" />
<rect x="506" y="632" width="1" height="21" fill="#ffffff" />
<rect x="506" y="652" width="15" height="1" fill="#696969" />
<rect x="520" y="632" width="1" height="21" fill="#696969" />
<rect x="507" y="651" width="13" height="1" fill="#a0a0a0" />
<rect x="519" y="633" width="1" height="19" fill="#a0a0a0" />
<path d="M509.5,640.5 L517.5,640.5 L513.5,644.5 Z" fill="#000"/>
<text x="422" y="647" font-size="13" fill="#0000ff" font-weight="bold" text-anchor="start" font-family="Liberation Sans" >Off</text>
<text x="534" y="646" font-size="14" fill="#000" font-weight="bold" text-anchor="start" font-family="Liberation Sans" textLength="11" lengthAdjust="spacingAndGlyphs" >M</text>
<rect x="547" y="630" width="92" height="24" fill="#ffffff" />
<rect x="547" y="630" width="92" height="1" fill="#a0a0a0" />
<rect x="547" y="630" width="1" height="24" fill="#a0a0a0" />
<rect x="548" y="631" width="90" height="1" fill="#696969" />
<rect x="548" y="631" width="1" height="22" fill="#696969" />
<rect x="547" y="653" width="92" height="1" fill="#ffffff" />
<rect x="638" y="630" width="1" height="24" fill="#ffffff" />
<rect x="548" y="652" width="90" height="1" fill="#e3e3e3" />
<rect x="637" y="631" width="1" height="22" fill="#e3e3e3" />
<rect x="623" y="632" width="15" height="21" fill="#f0f0f0" />
<rect x="623" y="632" width="15" height="1" fill="#ffffff" />
<rect x="623" y="632" width="1" height="21" fill="#ffffff" />
<rect x="623" y="652" width="15" height="1" fill="#696969" />
<rect x="637" y="632" width="1" height="21" fill="#696969" />
<rect x="624" y="651" width="13" height="1" fill="#a0a0a0" />
<rect x="636" y="633" width="1" height="19" fill="#a0a0a0" />
<path d="M626.5,640.5 L634.5,640.5 L630.5,644.5 Z" fill="#000"/>
<text x="550" y="647" font-size="13" fill="#000" font-weight="bold" text-anchor="start" font-family="Liberation Sans" >A&amp;B</text>
<text x="649" y="646" font-size="14" fill="#ff0000" font-weight="bold" text-anchor="start" font-family="Liberation Sans" textLength="9" lengthAdjust="spacingAndGlyphs" >B</text>
<rect x="664" y="630" width="125" height="24" fill="#ffffff" />
<rect x="664" y="630" width="125" height="1" fill="#a0a0a0" />
<rect x="664" y="630" width="1" height="24" fill="#a0a0a0" />
<rect x="665" y="631" width="123" height="1" fill="#696969" />
<rect x="665" y="631" width="1" height="22" fill="#696969" />
<rect x="664" y="653" width="125" height="1" fill="#ffffff" />
<rect x="788" y="630" width="1" height="24" fill="#ffffff" />
<rect x="665" y="652" width="123" height="1" fill="#e3e3e3" />
<rect x="787" y="631" width="1" height="22" fill="#e3e3e3" />
<rect x="773" y="632" width="15" height="21" fill="#f0f0f0" />
<rect x="773" y="632" width="15" height="1" fill="#ffffff" />
<rect x="773" y="632" width="1" height="21" fill="#ffffff" />
<rect x="773" y="652" width="15" height="1" fill="#696969" />
<rect x="787" y="632" width="1" height="21" fill="#696969" />
<rect x="774" y="651" width="13" height="1" fill="#a0a0a0" />
<rect x="786" y="633" width="1" height="19" fill="#a0a0a0" />
<path d="M776.5,640.5 L784.5,640.5 L780.5,644.5 Z" fill="#000"/>
<text x="667" y="647" font-size="13" fill="#ff0000" font-weight="bold" text-anchor="start" font-family="Liberation Sans" textLength="28" lengthAdjust="spacingAndGlyphs" >Auto</text>
<rect x="791" y="630" width="106" height="24" fill="#ffffff" />
<rect x="791" y="630" width="106" height="1" fill="#a0a0a0" />
<rect x="791" y="630" width="1" height="24" fill="#a0a0a0" />
<rect x="792" y="631" width="104" height="1" fill="#696969" />
<rect x="792" y="631" width="1" height="22" fill="#696969" />
<rect x="791" y="653" width="106" height="1" fill="#ffffff" />
<rect x="896" y="630" width="1" height="24" fill="#ffffff" />
<rect x="792" y="652" width="104" height="1" fill="#e3e3e3" />
<rect x="895" y="631" width="1" height="22" fill="#e3e3e3" />
<rect x="881" y="632" width="15" height="21" fill="#f0f0f0" />
<rect x="881" y="632" width="15" height="1" fill="#ffffff" />
<rect x="881" y="632" width="1" height="21" fill="#ffffff" />
<rect x="881" y="652" width="15" height="1" fill="#696969" />
<rect x="895" y="632" width="1" height="21" fill="#696969" />
<rect x="882" y="651" width="13" height="1" fill="#a0a0a0" />
<rect x="894" y="633" width="1" height="19" fill="#a0a0a0" />
<path d="M884.5,640.5 L892.5,640.5 L888.5,644.5 Z" fill="#000"/>
<text x="796" y="647" font-size="13" fill="#ff0000" font-weight="bold" text-anchor="start" font-family="Liberation Sans" >Off</text>
<rect x="0" y="651" width="1363" height="1" fill="#3c3c3c" />
<rect x="1318.5" y="325.5" width="31" height="17" rx="2.5" fill="#cdd9e6" stroke="#8fa3bb"/>
<rect x="1108" y="589" width="244" height="9" fill="url(#shB)" />
<rect x="1348" y="37" width="5" height="552" fill="url(#shR)" />
<rect x="1091" y="34" width="13" height="561" fill="url(#shL)" />
<rect x="1104" y="31" width="244" height="558" fill="#f0f0f0" />
<rect x="1105" y="32" width="242" height="25" fill="#ffffff" />
<rect x="1104.5" y="31.5" width="243" height="557" fill="none" stroke="#aaaaaa"/>
<rect x="1108" y="36" width="16" height="16" fill="#ffff00" />
<path d="M1108,39.5 L1110.5,39.5 L1110.5,37 L1114.5,37 L1114.5,39.5 L1117.5,39.5 L1117.5,37 L1121.5,37 L1121.5,39.5 L1124,39.5" fill="none" stroke="#ff0000" stroke-width="1"/>
<path d="M1108,41 L1111.5,41 L1111.5,44.5 L1114.5,44.5 L1114.5,41 L1118.5,41 L1118.5,44.5 L1121.5,44.5 L1121.5,41 L1124,41" fill="none" stroke="#00e000" stroke-width="1"/>
<path d="M1108,47 L1110.5,50.5 L1113,46.5 L1115.5,50.5 L1118,46.5 L1120.5,50.5 L1123.5,46.5" fill="none" stroke="#0000ff" stroke-width="1"/>
<text x="1129" y="48" font-size="12" fill="#808080" font-weight="normal" text-anchor="start" font-family="Liberation Sans" textLength="74" lengthAdjust="spacingAndGlyphs" >Signal Gener...</text>
<rect x="1229" y="44" width="9" height="1" fill="#808080" />
<rect x="1273.5" y="39.5" width="9" height="9" fill="none" stroke="#cccccc"/>
<path d="M1319,39 L1329,49 M1329,39 L1319,49" stroke="#707070" stroke-width="0.9"/>
<rect x="1110" y="65" width="13" height="13" fill="#ffffff" />
<rect x="1110" y="65" width="13" height="1" fill="#a0a0a0" />
<rect x="1110" y="65" width="1" height="13" fill="#a0a0a0" />
<rect x="1111" y="66" width="11" height="1" fill="#696969" />
<rect x="1111" y="66" width="1" height="11" fill="#696969" />
<rect x="1110" y="77" width="13" height="1" fill="#ffffff" />
<rect x="1122" y="65" width="1" height="13" fill="#ffffff" />
<rect x="1111" y="76" width="11" height="1" fill="#e3e3e3" />
<rect x="1121" y="66" width="1" height="11" fill="#e3e3e3" />
<path d="M1113,71 L1115.5,73.5 L1120,68.5" fill="none" stroke="#000" stroke-width="2"/>
<text x="1128" y="76" font-size="11.5" fill="#000" font-weight="normal" text-anchor="start" font-family="Liberation Sans" textLength="57" lengthAdjust="spacingAndGlyphs" >Show Editor</text>
<rect x="1191" y="62" width="127" height="20" fill="#ffffff" />
<rect x="1191" y="62" width="127" height="1" fill="#a0a0a0" />
<rect x="1191" y="62" width="1" height="20" fill="#a0a0a0" />
<rect x="1192" y="63" width="125" height="1" fill="#696969" />
<rect x="1192" y="63" width="1" height="18" fill="#696969" />
<rect x="1191" y="81" width="127" height="1" fill="#ffffff" />
<rect x="1317" y="62" width="1" height="20" fill="#ffffff" />
<rect x="1192" y="80" width="125" height="1" fill="#e3e3e3" />
<rect x="1316" y="63" width="1" height="18" fill="#e3e3e3" />
<rect x="1300" y="64" width="17" height="17" fill="#f0f0f0" />
<rect x="1300" y="64" width="17" height="1" fill="#ffffff" />
<rect x="1300" y="64" width="1" height="17" fill="#ffffff" />
<rect x="1300" y="80" width="17" height="1" fill="#696969" />
<rect x="1316" y="64" width="1" height="17" fill="#696969" />
<rect x="1301" y="79" width="15" height="1" fill="#a0a0a0" />
<rect x="1315" y="65" width="1" height="15" fill="#a0a0a0" />
<path d="M1304.5,70.5 L1312.5,70.5 L1308.5,74.5 Z" fill="#000"/>
<text x="1196" y="77" font-size="11.5" fill="#000" font-weight="normal" text-anchor="start" font-family="Liberation Sans" textLength="60" lengthAdjust="spacingAndGlyphs" >No Loopback</text>
<rect x="1320" y="60" width="24" height="23" fill="#f0f0f0" />
<rect x="1320" y="60" width="24" height="1" fill="#ffffff" />
<rect x="1320" y="60" width="1" height="23" fill="#ffffff" />
<rect x="1320" y="82" width="24" height="1" fill="#696969" />
<rect x="1343" y="60" width="1" height="23" fill="#696969" />
<rect x="1321" y="81" width="22" height="1" fill="#a0a0a0" />
<rect x="1342" y="61" width="1" height="21" fill="#a0a0a0" />
<rect x="1327" y="66" width="10" height="10" fill="#00ff00" />
<text x="1108" y="102" font-size="11.5" fill="#a0a0a0" font-weight="normal" text-anchor="start" font-family="Liberation Sans" textLength="85" lengthAdjust="spacingAndGlyphs" >Start OSC after (s)</text>
<rect x="1200" y="88" width="67" height="19" fill="#f0f0f0" />
<rect x="1200" y="88" width="67" height="1" fill="#a0a0a0" />
<rect x="1200" y="88" width="1" height="19" fill="#a0a0a0" />
<rect x="1201" y="89" width="65" height="1" fill="#696969" />
<rect x="1201" y="89" width="1" height="17" fill="#696969" />
<rect x="1200" y="106" width="67" height="1" fill="#ffffff" />
<rect x="1266" y="88" width="1" height="19" fill="#ffffff" />
<rect x="1201" y="105" width="65" height="1" fill="#e3e3e3" />
<rect x="1265" y="89" width="1" height="17" fill="#e3e3e3" />
<text x="1204" y="102" font-size="11.5" fill="#a0a0a0" font-weight="normal" text-anchor="start" font-family="Liberation Sans" >0</text>
<rect x="1270" y="91" width="13" height="13" fill="#f0f0f0" />
<rect x="1270" y="91" width="13" height="1" fill="#a0a0a0" />
<rect x="1270" y="91" width="1" height="13" fill="#a0a0a0" />
<rect x="1271" y="92" width="11" height="1" fill="#696969" />
<rect x="1271" y="92" width="1" height="11" fill="#696969" />
<rect x="1270" y="103" width="13" height="1" fill="#ffffff" />
<rect x="1282" y="91" width="1" height="13" fill="#ffffff" />
<rect x="1271" y="102" width="11" height="1" fill="#e3e3e3" />
<rect x="1281" y="92" width="1" height="11" fill="#e3e3e3" />
<text x="1288" y="102" font-size="11.5" fill="#a0a0a0" font-weight="normal" text-anchor="start" font-family="Liberation Sans" textLength="49" lengthAdjust="spacingAndGlyphs" >Echo Only</text>
<rect x="1107.5" y="121.5" width="208" height="34" fill="none" stroke="#a0a0a0"/>
<rect x="1108.5" y="122.5" width="208" height="34" fill="none" stroke="#ffffff"/>
<rect x="1114" y="117" width="103" height="8" fill="#f0f0f0" />
<text x="1116" y="125" font-size="11.5" fill="#000" font-weight="normal" text-anchor="start" font-family="Liberation Sans" textLength="99" lengthAdjust="spacingAndGlyphs" >Sampling Parameters</text>
<rect x="1113" y="131" width="99" height="19" fill="#ffffff" />
<rect x="1113" y="131" width="99" height="1" fill="#a0a0a0" />
<rect x="1113" y="131" width="1" height="19" fill="#a0a0a0" />
<rect x="1114" y="132" width="97" height="1" fill="#696969" />
<rect x="1114" y="132" width="1" height="17" fill="#696969" />
<rect x="1113" y="149" width="99" height="1" fill="#ffffff" />
<rect x="1211" y="131" width="1" height="19" fill="#ffffff" />
<rect x="1114" y="148" width="97" height="1" fill="#e3e3e3" />
<rect x="1210" y="132" width="1" height="17" fill="#e3e3e3" />
<rect x="1194" y="133" width="17" height="16" fill="#f0f0f0" />
<rect x="1194" y="133" width="17" height="1" fill="#ffffff" />
<rect x="1194" y="133" width="1" height="16" fill="#ffffff" />
<rect x="1194" y="148" width="17" height="1" fill="#696969" />
<rect x="1210" y="133" width="1" height="16" fill="#696969" />
<rect x="1195" y="147" width="15" height="1" fill="#a0a0a0" />
<rect x="1209" y="134" width="1" height="14" fill="#a0a0a0" />
<path d="M1198.5,139.0 L1206.5,139.0 L1202.5,143.0 Z" fill="#000"/>
<text x="1117" y="145" font-size="11.5" fill="#000" font-weight="normal" text-anchor="start" font-family="Liberation Sans" textLength="41" lengthAdjust="spacingAndGlyphs" >100MHz</text>
<rect x="1215" y="131" width="44" height="19" fill="#f0f0f0" />
<rect x="1215" y="131" width="44" height="1" fill="#a0a0a0" />
<rect x="1215" y="131" width="1" height="19" fill="#a0a0a0" />
<rect x="1216" y="132" width="42" height="1" fill="#696969" />
<rect x="1216" y="132" width="1" height="17" fill="#696969" />
<rect x="1215" y="149" width="44" height="1" fill="#ffffff" />
<rect x="1258" y="131" width="1" height="19" fill="#ffffff" />
<rect x="1216" y="148" width="42" height="1" fill="#e3e3e3" />
<rect x="1257" y="132" width="1" height="17" fill="#e3e3e3" />
<rect x="1241" y="133" width="17" height="16" fill="#f0f0f0" />
<rect x="1241" y="133" width="17" height="1" fill="#ffffff" />
<rect x="1241" y="133" width="1" height="16" fill="#ffffff" />
<rect x="1241" y="148" width="17" height="1" fill="#696969" />
<rect x="1257" y="133" width="1" height="16" fill="#696969" />
<rect x="1242" y="147" width="15" height="1" fill="#a0a0a0" />
<rect x="1256" y="134" width="1" height="14" fill="#a0a0a0" />
<path d="M1245.5,139.0 L1253.5,139.0 L1249.5,143.0 Z" fill="#a0a0a0"/>
<text x="1218" y="145" font-size="11.5" fill="#a0a0a0" font-weight="normal" text-anchor="start" font-family="Liberation Sans" >A</text>
<rect x="1261" y="131" width="52" height="19" fill="#ffffff" />
<rect x="1261" y="131" width="52" height="1" fill="#a0a0a0" />
<rect x="1261" y="131" width="1" height="19" fill="#a0a0a0" />
<rect x="1262" y="132" width="50" height="1" fill="#696969" />
<rect x="1262" y="132" width="1" height="17" fill="#696969" />
<rect x="1261" y="149" width="52" height="1" fill="#ffffff" />
<rect x="1312" y="131" width="1" height="19" fill="#ffffff" />
<rect x="1262" y="148" width="50" height="1" fill="#e3e3e3" />
<rect x="1311" y="132" width="1" height="17" fill="#e3e3e3" />
<rect x="1295" y="133" width="17" height="16" fill="#f0f0f0" />
<rect x="1295" y="133" width="17" height="1" fill="#ffffff" />
<rect x="1295" y="133" width="1" height="16" fill="#ffffff" />
<rect x="1295" y="148" width="17" height="1" fill="#696969" />
<rect x="1311" y="133" width="1" height="16" fill="#696969" />
<rect x="1296" y="147" width="15" height="1" fill="#a0a0a0" />
<rect x="1310" y="134" width="1" height="14" fill="#a0a0a0" />
<path d="M1299.5,139.0 L1307.5,139.0 L1303.5,143.0 Z" fill="#000"/>
<text x="1265" y="145" font-size="11.5" fill="#000" font-weight="normal" text-anchor="start" font-family="Liberation Sans" textLength="25" lengthAdjust="spacingAndGlyphs" >16Bit</text>
<rect x="1320" y="114" width="24" height="23" fill="#f0f0f0" />
<rect x="1320" y="114" width="24" height="1" fill="#ffffff" />
<rect x="1320" y="114" width="1" height="23" fill="#ffffff" />
<rect x="1320" y="136" width="24" height="1" fill="#696969" />
<rect x="1343" y="114" width="1" height="23" fill="#696969" />
<rect x="1321" y="135" width="22" height="1" fill="#a0a0a0" />
<rect x="1342" y="115" width="1" height="21" fill="#a0a0a0" />
<rect x="1325" y="118" width="14" height="14" fill="#a0a0a0" />
<rect x="1328" y="119" width="8" height="6" fill="#f0f0f0" />
<rect x="1334" y="127" width="2" height="4" fill="#f0f0f0" />
<rect x="1337" y="119" width="1" height="1" fill="#f0f0f0" />
<path d="M1325,131 L1326,132 L1325,132 Z" fill="#f0f0f0"/>
<rect x="1320" y="138" width="24" height="23" fill="#f0f0f0" />
<rect x="1320" y="138" width="24" height="1" fill="#ffffff" />
<rect x="1320" y="138" width="1" height="23" fill="#ffffff" />
<rect x="1320" y="160" width="24" height="1" fill="#696969" />
<rect x="1343" y="138" width="1" height="23" fill="#696969" />
<rect x="1321" y="159" width="22" height="1" fill="#a0a0a0" />
<rect x="1342" y="139" width="1" height="21" fill="#a0a0a0" />
<rect x="1324" y="143" width="16" height="1" fill="#808080" />
<rect x="1324" y="146" width="16" height="1" fill="#808080" />
<rect x="1324" y="149" width="16" height="1" fill="#808080" />
<rect x="1324" y="152" width="16" height="1" fill="#808080" />
<rect x="1324" y="155" width="16" height="1" fill="#808080" />
<path d="M1327.5,155 L1327.5,145 L1330,144 L1333,144 L1333,143 L1336,142.5 L1336,153" fill="none" stroke="#ff0000" stroke-width="1.3"/>
<rect x="1325" y="154" width="4" height="3" fill="#ff0000" />
<rect x="1334" y="151" width="3" height="3" fill="#ff0000" />
<rect x="1116" y="168" width="85" height="20" fill="#ffffff" />
<rect x="1116" y="168" width="85" height="1" fill="#a0a0a0" />
<rect x="1116" y="168" width="1" height="20" fill="#a0a0a0" />
<rect x="1117" y="169" width="83" height="1" fill="#696969" />
<rect x="1117" y="169" width="1" height="18" fill="#696969" />
<rect x="1116" y="187" width="85" height="1" fill="#ffffff" />
<rect x="1200" y="168" width="1" height="20" fill="#ffffff" />
<rect x="1117" y="186" width="83" height="1" fill="#e3e3e3" />
<rect x="1199" y="169" width="1" height="18" fill="#e3e3e3" />
<rect x="1183" y="170" width="17" height="17" fill="#f0f0f0" />
<rect x="1183" y="170" width="17" height="1" fill="#ffffff" />
<rect x="1183" y="170" width="1" height="17" fill="#ffffff" />
<rect x="1183" y="186" width="17" height="1" fill="#696969" />
<rect x="1199" y="170" width="1" height="17" fill="#696969" />
<rect x="1184" y="185" width="15" height="1" fill="#a0a0a0" />
<rect x="1198" y="171" width="1" height="15" fill="#a0a0a0" />
<path d="M1187.5,176.5 L1195.5,176.5 L1191.5,180.5 Z" fill="#000"/>
<text x="1120" y="183" font-size="11.5" fill="#000" font-weight="normal" text-anchor="start" font-family="Liberation Sans" textLength="47" lengthAdjust="spacingAndGlyphs" >SawTooth</text>
<rect x="1213" y="168" width="23" height="20" fill="#f0f0f0" />
<rect x="1213" y="168" width="23" height="1" fill="#ffffff" />
<rect x="1213" y="168" width="1" height="20" fill="#ffffff" />
<rect x="1213" y="187" width="23" height="1" fill="#696969" />
<rect x="1235" y="168" width="1" height="20" fill="#696969" />
<rect x="1214" y="186" width="21" height="1" fill="#a0a0a0" />
<rect x="1234" y="169" width="1" height="18" fill="#a0a0a0" />
<text x="1219" y="183" font-size="11.5" fill="#000" font-weight="normal" text-anchor="start" font-family="Liberation Sans" >...</text>
<rect x="1249" y="168" width="85" height="20" fill="#f0f0f0" />
<rect x="1249" y="168" width="85" height="1" fill="#a0a0a0" />
<rect x="1249" y="168" width="1" height="20" fill="#a0a0a0" />
<rect x="1250" y="169" width="83" height="1" fill="#696969" />
<rect x="1250" y="169" width="1" height="18" fill="#696969" />
<rect x="1249" y="187" width="85" height="1" fill="#ffffff" />
<rect x="1333" y="168" width="1" height="20" fill="#ffffff" />
<rect x="1250" y="186" width="83" height="1" fill="#e3e3e3" />
<rect x="1332" y="169" width="1" height="18" fill="#e3e3e3" />
<rect x="1316" y="170" width="17" height="17" fill="#f0f0f0" />
<rect x="1316" y="170" width="17" height="1" fill="#ffffff" />
<rect x="1316" y="170" width="1" height="17" fill="#ffffff" />
<rect x="1316" y="186" width="17" height="1" fill="#696969" />
<rect x="1332" y="170" width="1" height="17" fill="#696969" />
<rect x="1317" y="185" width="15" height="1" fill="#a0a0a0" />
<rect x="1331" y="171" width="1" height="15" fill="#a0a0a0" />
<path d="M1320.5,176.5 L1328.5,176.5 L1324.5,180.5 Z" fill="#a0a0a0"/>
<text x="1253" y="183" font-size="11.5" fill="#a0a0a0" font-weight="normal" text-anchor="start" font-family="Liberation Sans" textLength="25" lengthAdjust="spacingAndGlyphs" >None</text>
<rect x="1108" y="198" width="61" height="19" fill="#ffffff" />
<rect x="1108" y="198" width="61" height="1" fill="#a0a0a0" />
<rect x="1108" y="198" width="1" height="19" fill="#a0a0a0" />
<rect x="1109" y="199" width="59" height="1" fill="#696969" />
<rect x="1109" y="199" width="1" height="17" fill="#696969" />
<rect x="1108" y="216" width="61" height="1" fill="#ffffff" />
<rect x="1168" y="198" width="1" height="19" fill="#ffffff" />
<rect x="1109" y="215" width="59" height="1" fill="#e3e3e3" />
<rect x="1167" y="199" width="1" height="17" fill="#e3e3e3" />
<text x="1112" y="212" font-size="11.5" fill="#000" font-weight="normal" text-anchor="start" font-family="Liberation Sans" >0</text>
<rect x="1171" y="195" width="18" height="11" fill="#f0f0f0" />
<rect x="1171" y="195" width="18" height="1" fill="#ffffff" />
<rect x="1171" y="195" width="1" height="11" fill="#ffffff" />
<rect x="1171" y="205" width="18" height="1" fill="#696969" />
<rect x="1188" y="195" width="1" height="11" fill="#696969" />
<rect x="1172" y="204" width="16" height="1" fill="#a0a0a0" />
<rect x="1187" y="196" width="1" height="9" fill="#a0a0a0" />
<rect x="1171" y="206" width="18" height="12" fill="#f0f0f0" />
<rect x="1171" y="206" width="18" height="1" fill="#ffffff" />
<rect x="1171" y="206" width="1" height="12" fill="#ffffff" />
<rect x="1171" y="217" width="18" height="1" fill="#696969" />
<rect x="1188" y="206" width="1" height="12" fill="#696969" />
<rect x="1172" y="216" width="16" height="1" fill="#a0a0a0" />
<rect x="1187" y="207" width="1" height="10" fill="#a0a0a0" />
<path d="M1178.0,202.0 L1182.0,202.0 L1180.0,200.0 Z" fill="#000"/>
<path d="M1178.0,210.5 L1182.0,210.5 L1180.0,212.5 Z" fill="#000"/>
<text x="1194" y="213" font-size="11.5" fill="#000" font-weight="normal" text-anchor="start" font-family="Liberation Sans" textLength="62" lengthAdjust="spacingAndGlyphs" >DC Offset (V)</text>
<rect x="1264" y="198" width="62" height="19" fill="#f0f0f0" />
<rect x="1264" y="198" width="62" height="1" fill="#a0a0a0" />
<rect x="1264" y="198" width="1" height="19" fill="#a0a0a0" />
<rect x="1265" y="199" width="60" height="1" fill="#696969" />
<rect x="1265" y="199" width="1" height="17" fill="#696969" />
<rect x="1264" y="216" width="62" height="1" fill="#ffffff" />
<rect x="1325" y="198" width="1" height="19" fill="#ffffff" />
<rect x="1265" y="215" width="60" height="1" fill="#e3e3e3" />
<rect x="1324" y="199" width="1" height="17" fill="#e3e3e3" />
<text x="1268" y="212" font-size="11.5" fill="#a0a0a0" font-weight="normal" text-anchor="start" font-family="Liberation Sans" >0</text>
<rect x="1327" y="195" width="17" height="11" fill="#f0f0f0" />
<rect x="1327" y="195" width="17" height="1" fill="#ffffff" />
<rect x="1327" y="195" width="1" height="11" fill="#ffffff" />
<rect x="1327" y="205" width="17" height="1" fill="#696969" />
<rect x="1343" y="195" width="1" height="11" fill="#696969" />
<rect x="1328" y="204" width="15" height="1" fill="#a0a0a0" />
<rect x="1342" y="196" width="1" height="9" fill="#a0a0a0" />
<rect x="1327" y="206" width="17" height="12" fill="#f0f0f0" />
<rect x="1327" y="206" width="17" height="1" fill="#ffffff" />
<rect x="1327" y="206" width="1" height="12" fill="#ffffff" />
<rect x="1327" y="217" width="17" height="1" fill="#696969" />
<rect x="1343" y="206" width="1" height="12" fill="#696969" />
<rect x="1328" y="216" width="15" height="1" fill="#a0a0a0" />
<rect x="1342" y="207" width="1" height="10" fill="#a0a0a0" />
<path d="M1333.5,202.0 L1337.5,202.0 L1335.5,200.0 Z" fill="#c0c0c0"/>
<path d="M1333.5,210.5 L1337.5,210.5 L1335.5,212.5 Z" fill="#c0c0c0"/>
<text x="1171" y="234" font-size="11.5" fill="#000" font-weight="normal" text-anchor="start" font-family="Liberation Sans" textLength="107" lengthAdjust="spacingAndGlyphs" >Output Frequency (Hz)</text>
<rect x="1113" y="231" width="1" height="135" fill="#a0a0a0" />
<rect x="1114" y="231" width="1" height="135" fill="#696969" />
<rect x="1115" y="231" width="1" height="135" fill="#ffffff" />
<rect x="1128" y="231" width="1" height="135" fill="#a0a0a0" />
<rect x="1129" y="231" width="1" height="135" fill="#696969" />
<rect x="1130" y="231" width="1" height="135" fill="#ffffff" />
<rect x="1322" y="231" width="1" height="135" fill="#a0a0a0" />
<rect x="1323" y="231" width="1" height="135" fill="#696969" />
<rect x="1324" y="231" width="1" height="135" fill="#ffffff" />
<rect x="1335" y="231" width="1" height="135" fill="#a0a0a0" />
<rect x="1336" y="231" width="1" height="135" fill="#696969" />
<rect x="1337" y="231" width="1" height="135" fill="#ffffff" />
<rect x="1125" y="232" width="11" height="6" fill="#f0f0f0" />
<rect x="1125" y="232" width="11" height="1" fill="#ffffff" />
<rect x="1125" y="232" width="1" height="6" fill="#ffffff" />
<rect x="1125" y="237" width="11" height="1" fill="#696969" />
<rect x="1135" y="232" width="1" height="6" fill="#696969" />
<rect x="1126" y="236" width="9" height="1" fill="#a0a0a0" />
<rect x="1134" y="233" width="1" height="4" fill="#a0a0a0" />
<rect x="1319" y="232" width="11" height="6" fill="#f0f0f0" />
<rect x="1319" y="232" width="11" height="1" fill="#ffffff" />
<rect x="1319" y="232" width="1" height="6" fill="#ffffff" />
<rect x="1319" y="237" width="11" height="1" fill="#696969" />
<rect x="1329" y="232" width="1" height="6" fill="#696969" />
<rect x="1320" y="236" width="9" height="1" fill="#a0a0a0" />
<rect x="1328" y="233" width="1" height="4" fill="#a0a0a0" />
<rect x="1110" y="360" width="11" height="5" fill="#f0f0f0" />
<rect x="1110" y="360" width="11" height="1" fill="#ffffff" />
<rect x="1110" y="360" width="1" height="5" fill="#ffffff" />
<rect x="1110" y="364" width="11" height="1" fill="#696969" />
<rect x="1120" y="360" width="1" height="5" fill="#696969" />
<rect x="1111" y="363" width="9" height="1" fill="#a0a0a0" />
<rect x="1119" y="361" width="1" height="3" fill="#a0a0a0" />
<rect x="1332" y="360" width="11" height="5" fill="#f0f0f0" />
<rect x="1332" y="360" width="11" height="1" fill="#ffffff" />
<rect x="1332" y="360" width="1" height="5" fill="#ffffff" />
<rect x="1332" y="364" width="11" height="1" fill="#696969" />
<rect x="1342" y="360" width="1" height="5" fill="#696969" />
<rect x="1333" y="363" width="9" height="1" fill="#a0a0a0" />
<rect x="1341" y="361" width="1" height="3" fill="#a0a0a0" />
<rect x="1140" y="243" width="87" height="19" fill="#ffffff" />
<rect x="1140" y="243" width="87" height="1" fill="#a0a0a0" />
<rect x="1140" y="243" width="1" height="19" fill="#a0a0a0" />
<rect x="1141" y="244" width="85" height="1" fill="#696969" />
<rect x="1141" y="244" width="1" height="17" fill="#696969" />
<rect x="1140" y="261" width="87" height="1" fill="#ffffff" />
<rect x="1226" y="243" width="1" height="19" fill="#ffffff" />
<rect x="1141" y="260" width="85" height="1" fill="#e3e3e3" />
<rect x="1225" y="244" width="1" height="17" fill="#e3e3e3" />
<rect x="1209" y="245" width="17" height="16" fill="#f0f0f0" />
<rect x="1209" y="245" width="17" height="1" fill="#ffffff" />
<rect x="1209" y="245" width="1" height="16" fill="#ffffff" />
<rect x="1209" y="260" width="17" height="1" fill="#696969" />
<rect x="1225" y="245" width="1" height="16" fill="#696969" />
<rect x="1210" y="259" width="15" height="1" fill="#a0a0a0" />
<rect x="1224" y="246" width="1" height="14" fill="#a0a0a0" />
<path d="M1213.5,251.0 L1221.5,251.0 L1217.5,255.0 Z" fill="#000"/>
<text x="1144" y="256" font-size="11.5" fill="#000" font-weight="normal" text-anchor="start" font-family="Liberation Sans" textLength="25" lengthAdjust="spacingAndGlyphs" >2000</text>
<rect x="1229" y="243" width="87" height="19" fill="#f0f0f0" />
<rect x="1229" y="243" width="87" height="1" fill="#a0a0a0" />
<rect x="1229" y="243" width="1" height="19" fill="#a0a0a0" />
<rect x="1230" y="244" width="85" height="1" fill="#696969" />
<rect x="1230" y="244" width="1" height="17" fill="#696969" />
<rect x="1229" y="261" width="87" height="1" fill="#ffffff" />
<rect x="1315" y="243" width="1" height="19" fill="#ffffff" />
<rect x="1230" y="260" width="85" height="1" fill="#e3e3e3" />
<rect x="1314" y="244" width="1" height="17" fill="#e3e3e3" />
<rect x="1298" y="245" width="17" height="16" fill="#f0f0f0" />
<rect x="1298" y="245" width="17" height="1" fill="#ffffff" />
<rect x="1298" y="245" width="1" height="16" fill="#ffffff" />
<rect x="1298" y="260" width="17" height="1" fill="#696969" />
<rect x="1314" y="245" width="1" height="16" fill="#696969" />
<rect x="1299" y="259" width="15" height="1" fill="#a0a0a0" />
<rect x="1313" y="246" width="1" height="14" fill="#a0a0a0" />
<path d="M1302.5,251.0 L1310.5,251.0 L1306.5,255.0 Z" fill="#a0a0a0"/>
<text x="1233" y="256" font-size="11.5" fill="#a0a0a0" font-weight="normal" text-anchor="start" font-family="Liberation Sans" textLength="25" lengthAdjust="spacingAndGlyphs" >1000</text>
<text x="1173" y="282" font-size="11.5" fill="#000" font-weight="normal" text-anchor="start" font-family="Liberation Sans" textLength="97" lengthAdjust="spacingAndGlyphs" >Output Amplitude (V)</text>
<rect x="1140" y="295" width="87" height="19" fill="#ffffff" />
<rect x="1140" y="295" width="87" height="1" fill="#a0a0a0" />
<rect x="1140" y="295" width="1" height="19" fill="#a0a0a0" />
<rect x="1141" y="296" width="85" height="1" fill="#696969" />
<rect x="1141" y="296" width="1" height="17" fill="#696969" />
<rect x="1140" y="313" width="87" height="1" fill="#ffffff" />
<rect x="1226" y="295" width="1" height="19" fill="#ffffff" />
<rect x="1141" y="312" width="85" height="1" fill="#e3e3e3" />
<rect x="1225" y="296" width="1" height="17" fill="#e3e3e3" />
<rect x="1209" y="297" width="17" height="16" fill="#f0f0f0" />
<rect x="1209" y="297" width="17" height="1" fill="#ffffff" />
<rect x="1209" y="297" width="1" height="16" fill="#ffffff" />
<rect x="1209" y="312" width="17" height="1" fill="#696969" />
<rect x="1225" y="297" width="1" height="16" fill="#696969" />
<rect x="1210" y="311" width="15" height="1" fill="#a0a0a0" />
<rect x="1224" y="298" width="1" height="14" fill="#a0a0a0" />
<path d="M1213.5,303.0 L1221.5,303.0 L1217.5,307.0 Z" fill="#000"/>
<text x="1144" y="308" font-size="11.5" fill="#000" font-weight="normal" text-anchor="start" font-family="Liberation Sans" >2</text>
<rect x="1228" y="295" width="88" height="19" fill="#f0f0f0" />
<rect x="1228" y="295" width="88" height="1" fill="#a0a0a0" />
<rect x="1228" y="295" width="1" height="19" fill="#a0a0a0" />
<rect x="1229" y="296" width="86" height="1" fill="#696969" />
<rect x="1229" y="296" width="1" height="17" fill="#696969" />
<rect x="1228" y="313" width="88" height="1" fill="#ffffff" />
<rect x="1315" y="295" width="1" height="19" fill="#ffffff" />
<rect x="1229" y="312" width="86" height="1" fill="#e3e3e3" />
<rect x="1314" y="296" width="1" height="17" fill="#e3e3e3" />
<rect x="1298" y="297" width="17" height="16" fill="#f0f0f0" />
<rect x="1298" y="297" width="17" height="1" fill="#ffffff" />
<rect x="1298" y="297" width="1" height="16" fill="#ffffff" />
<rect x="1298" y="312" width="17" height="1" fill="#696969" />
<rect x="1314" y="297" width="1" height="16" fill="#696969" />
<rect x="1299" y="311" width="15" height="1" fill="#a0a0a0" />
<rect x="1313" y="298" width="1" height="14" fill="#a0a0a0" />
<path d="M1302.5,303.0 L1310.5,303.0 L1306.5,307.0 Z" fill="#a0a0a0"/>
<text x="1232" y="308" font-size="11.5" fill="#a0a0a0" font-weight="normal" text-anchor="start" font-family="Liberation Sans" >0</text>
<text x="1145" y="335" font-size="11.5" fill="#a0a0a0" font-weight="normal" text-anchor="start" font-family="Liberation Sans" textLength="161" lengthAdjust="spacingAndGlyphs" >Output Phase Difference (Degree)</text>
<rect x="1188" y="345" width="74" height="19" fill="#f0f0f0" />
<rect x="1188" y="345" width="74" height="1" fill="#a0a0a0" />
<rect x="1188" y="345" width="1" height="19" fill="#a0a0a0" />
<rect x="1189" y="346" width="72" height="1" fill="#696969" />
<rect x="1189" y="346" width="1" height="17" fill="#696969" />
<rect x="1188" y="363" width="74" height="1" fill="#ffffff" />
<rect x="1261" y="345" width="1" height="19" fill="#ffffff" />
<rect x="1189" y="362" width="72" height="1" fill="#e3e3e3" />
<rect x="1260" y="346" width="1" height="17" fill="#e3e3e3" />
<rect x="1244" y="347" width="17" height="16" fill="#f0f0f0" />
<rect x="1244" y="347" width="17" height="1" fill="#ffffff" />
<rect x="1244" y="347" width="1" height="16" fill="#ffffff" />
<rect x="1244" y="362" width="17" height="1" fill="#696969" />
<rect x="1260" y="347" width="1" height="16" fill="#696969" />
<rect x="1245" y="361" width="15" height="1" fill="#a0a0a0" />
<rect x="1259" y="348" width="1" height="14" fill="#a0a0a0" />
<path d="M1248.5,353.0 L1256.5,353.0 L1252.5,357.0 Z" fill="#a0a0a0"/>
<text x="1192" y="358" font-size="11.5" fill="#a0a0a0" font-weight="normal" text-anchor="start" font-family="Liberation Sans" >0</text>
<text x="1114" y="380" font-size="11.5" fill="#000" font-weight="normal" text-anchor="start" font-family="Liberation Sans" textLength="31" lengthAdjust="spacingAndGlyphs" >0dBFS</text>
<rect x="1163" y="374" width="121" height="1" fill="#a0a0a0" />
<rect x="1163" y="375" width="121" height="1" fill="#696969" />
<rect x="1163" y="376" width="121" height="1" fill="#ffffff" />
<rect x="1222" y="371" width="6" height="10" fill="#f0f0f0" />
<rect x="1222" y="371" width="6" height="1" fill="#ffffff" />
<rect x="1222" y="371" width="1" height="10" fill="#ffffff" />
<rect x="1222" y="380" width="6" height="1" fill="#696969" />
<rect x="1227" y="371" width="1" height="10" fill="#696969" />
<rect x="1223" y="379" width="4" height="1" fill="#a0a0a0" />
<rect x="1226" y="372" width="1" height="8" fill="#a0a0a0" />
<text x="1312" y="380" font-size="11.5" fill="#a0a0a0" font-weight="normal" text-anchor="start" font-family="Liberation Sans" textLength="12" lengthAdjust="spacingAndGlyphs" >Nil</text>
<rect x="1108.5" y="388.5" width="236" height="46" fill="none" stroke="#a0a0a0"/>
<rect x="1109.5" y="389.5" width="236" height="46" fill="none" stroke="#ffffff"/>
<rect x="1114" y="394" width="13" height="13" fill="#f0f0f0" />
<rect x="1114" y="394" width="13" height="1" fill="#a0a0a0" />
<rect x="1114" y="394" width="1" height="13" fill="#a0a0a0" />
<rect x="1115" y="395" width="11" height="1" fill="#696969" />
<rect x="1115" y="395" width="1" height="11" fill="#696969" />
<rect x="1114" y="406" width="13" height="1" fill="#ffffff" />
<rect x="1126" y="394" width="1" height="13" fill="#ffffff" />
<rect x="1115" y="405" width="11" height="1" fill="#e3e3e3" />
<rect x="1125" y="395" width="1" height="11" fill="#e3e3e3" />
<text x="1132" y="405" font-size="11.5" fill="#a0a0a0" font-weight="normal" text-anchor="start" font-family="Liberation Sans" textLength="26" lengthAdjust="spacingAndGlyphs" >Mask</text>
<text x="1213" y="405" font-size="11.5" fill="#a0a0a0" font-weight="normal" text-anchor="start" font-family="Liberation Sans" textLength="28" lengthAdjust="spacingAndGlyphs" >On (s)</text>
<text x="1288" y="405" font-size="11.5" fill="#a0a0a0" font-weight="normal" text-anchor="start" font-family="Liberation Sans" textLength="28" lengthAdjust="spacingAndGlyphs" >Off (s)</text>
<rect x="1114" y="414" width="13" height="13" fill="#f0f0f0" />
<rect x="1114" y="414" width="13" height="1" fill="#a0a0a0" />
<rect x="1114" y="414" width="1" height="13" fill="#a0a0a0" />
<rect x="1115" y="415" width="11" height="1" fill="#696969" />
<rect x="1115" y="415" width="1" height="11" fill="#696969" />
<rect x="1114" y="426" width="13" height="1" fill="#ffffff" />
<rect x="1126" y="414" width="1" height="13" fill="#ffffff" />
<rect x="1115" y="425" width="11" height="1" fill="#e3e3e3" />
<rect x="1125" y="415" width="1" height="11" fill="#e3e3e3" />
<path d="M1117,420 L1119.5,422.5 L1124,417.5" fill="none" stroke="#a0a0a0" stroke-width="2"/>
<text x="1133" y="425" font-size="11.5" fill="#a0a0a0" font-weight="normal" text-anchor="start" font-family="Liberation Sans" textLength="56" lengthAdjust="spacingAndGlyphs" >Phase Lock</text>
<rect x="1200" y="411" width="66" height="20" fill="#f0f0f0" />
<rect x="1200" y="411" width="66" height="1" fill="#a0a0a0" />
<rect x="1200" y="411" width="1" height="20" fill="#a0a0a0" />
<rect x="1201" y="412" width="64" height="1" fill="#696969" />
<rect x="1201" y="412" width="1" height="18" fill="#696969" />
<rect x="1200" y="430" width="66" height="1" fill="#ffffff" />
<rect x="1265" y="411" width="1" height="20" fill="#ffffff" />
<rect x="1201" y="429" width="64" height="1" fill="#e3e3e3" />
<rect x="1264" y="412" width="1" height="18" fill="#e3e3e3" />
<text x="1204" y="425" font-size="11.5" fill="#a0a0a0" font-weight="normal" text-anchor="start" font-family="Liberation Sans" >1</text>
<rect x="1273" y="411" width="66" height="20" fill="#f0f0f0" />
<rect x="1273" y="411" width="66" height="1" fill="#a0a0a0" />
<rect x="1273" y="411" width="1" height="20" fill="#a0a0a0" />
<rect x="1274" y="412" width="64" height="1" fill="#696969" />
<rect x="1274" y="412" width="1" height="18" fill="#696969" />
<rect x="1273" y="430" width="66" height="1" fill="#ffffff" />
<rect x="1338" y="411" width="1" height="20" fill="#ffffff" />
<rect x="1274" y="429" width="64" height="1" fill="#e3e3e3" />
<rect x="1337" y="412" width="1" height="18" fill="#e3e3e3" />
<text x="1277" y="425" font-size="11.5" fill="#a0a0a0" font-weight="normal" text-anchor="start" font-family="Liberation Sans" >0</text>
<rect x="1108.5" y="440.5" width="236" height="44" fill="none" stroke="#a0a0a0"/>
<rect x="1109.5" y="441.5" width="236" height="44" fill="none" stroke="#ffffff"/>
<rect x="1114" y="455" width="13" height="13" fill="#f0f0f0" />
<rect x="1114" y="455" width="13" height="1" fill="#a0a0a0" />
<rect x="1114" y="455" width="1" height="13" fill="#a0a0a0" />
<rect x="1115" y="456" width="11" height="1" fill="#696969" />
<rect x="1115" y="456" width="1" height="11" fill="#696969" />
<rect x="1114" y="467" width="13" height="1" fill="#ffffff" />
<rect x="1126" y="455" width="1" height="13" fill="#ffffff" />
<rect x="1115" y="466" width="11" height="1" fill="#e3e3e3" />
<rect x="1125" y="456" width="1" height="11" fill="#e3e3e3" />
<text x="1132" y="466" font-size="11.5" fill="#a0a0a0" font-weight="normal" text-anchor="start" font-family="Liberation Sans" textLength="25" lengthAdjust="spacingAndGlyphs" >Fade</text>
<text x="1213" y="456" font-size="11.5" fill="#a0a0a0" font-weight="normal" text-anchor="start" font-family="Liberation Sans" textLength="24" lengthAdjust="spacingAndGlyphs" >In (s)</text>
<text x="1288" y="456" font-size="11.5" fill="#a0a0a0" font-weight="normal" text-anchor="start" font-family="Liberation Sans" textLength="31" lengthAdjust="spacingAndGlyphs" >Out (s)</text>
<rect x="1200" y="462" width="66" height="20" fill="#f0f0f0" />
<rect x="1200" y="462" width="66" height="1" fill="#a0a0a0" />
<rect x="1200" y="462" width="1" height="20" fill="#a0a0a0" />
<rect x="1201" y="463" width="64" height="1" fill="#696969" />
<rect x="1201" y="463" width="1" height="18" fill="#696969" />
<rect x="1200" y="481" width="66" height="1" fill="#ffffff" />
<rect x="1265" y="462" width="1" height="20" fill="#ffffff" />
<rect x="1201" y="480" width="64" height="1" fill="#e3e3e3" />
<rect x="1264" y="463" width="1" height="18" fill="#e3e3e3" />
<text x="1204" y="476" font-size="11.5" fill="#a0a0a0" font-weight="normal" text-anchor="start" font-family="Liberation Sans" textLength="19" lengthAdjust="spacingAndGlyphs" >0.01</text>
<rect x="1273" y="462" width="66" height="20" fill="#f0f0f0" />
<rect x="1273" y="462" width="66" height="1" fill="#a0a0a0" />
<rect x="1273" y="462" width="1" height="20" fill="#a0a0a0" />
<rect x="1274" y="463" width="64" height="1" fill="#696969" />
<rect x="1274" y="463" width="1" height="18" fill="#696969" />
<rect x="1273" y="481" width="66" height="1" fill="#ffffff" />
<rect x="1338" y="462" width="1" height="20" fill="#ffffff" />
<rect x="1274" y="480" width="64" height="1" fill="#e3e3e3" />
<rect x="1337" y="463" width="1" height="18" fill="#e3e3e3" />
<text x="1277" y="476" font-size="11.5" fill="#a0a0a0" font-weight="normal" text-anchor="start" font-family="Liberation Sans" textLength="19" lengthAdjust="spacingAndGlyphs" >0.01</text>
<rect x="1108.5" y="490.5" width="236" height="45" fill="none" stroke="#a0a0a0"/>
<rect x="1109.5" y="491.5" width="236" height="45" fill="none" stroke="#ffffff"/>
<text x="1110" y="505" font-size="11.5" fill="#a0a0a0" font-weight="normal" text-anchor="start" font-family="Liberation Sans" textLength="52" lengthAdjust="spacingAndGlyphs" >Modulation</text>
<text x="1183" y="505" font-size="11.5" fill="#a0a0a0" font-weight="normal" text-anchor="start" font-family="Liberation Sans" textLength="52" lengthAdjust="spacingAndGlyphs" >Carrier (Hz)</text>
<text x="1258" y="505" font-size="11.5" fill="#a0a0a0" font-weight="normal" text-anchor="start" font-family="Liberation Sans" textLength="70" lengthAdjust="spacingAndGlyphs" >Mod. Index (%)</text>
<rect x="1110" y="513" width="58" height="18" fill="#f0f0f0" />
<rect x="1110" y="513" width="58" height="1" fill="#a0a0a0" />
<rect x="1110" y="513" width="1" height="18" fill="#a0a0a0" />
<rect x="1111" y="514" width="56" height="1" fill="#696969" />
<rect x="1111" y="514" width="1" height="16" fill="#696969" />
<rect x="1110" y="530" width="58" height="1" fill="#ffffff" />
<rect x="1167" y="513" width="1" height="18" fill="#ffffff" />
<rect x="1111" y="529" width="56" height="1" fill="#e3e3e3" />
<rect x="1166" y="514" width="1" height="16" fill="#e3e3e3" />
<rect x="1150" y="515" width="17" height="15" fill="#f0f0f0" />
<rect x="1150" y="515" width="17" height="1" fill="#ffffff" />
<rect x="1150" y="515" width="1" height="15" fill="#ffffff" />
<rect x="1150" y="529" width="17" height="1" fill="#696969" />
<rect x="1166" y="515" width="1" height="15" fill="#696969" />
<rect x="1151" y="528" width="15" height="1" fill="#a0a0a0" />
<rect x="1165" y="516" width="1" height="13" fill="#a0a0a0" />
<path d="M1154.5,520.5 L1162.5,520.5 L1158.5,524.5 Z" fill="#a0a0a0"/>
<text x="1114" y="526" font-size="11.5" fill="#a0a0a0" font-weight="normal" text-anchor="start" font-family="Liberation Sans" textLength="17" lengthAdjust="spacingAndGlyphs" >NIL</text>
<rect x="1183" y="513" width="65" height="18" fill="#f0f0f0" />
<rect x="1183" y="513" width="65" height="1" fill="#a0a0a0" />
<rect x="1183" y="513" width="1" height="18" fill="#a0a0a0" />
<rect x="1184" y="514" width="63" height="1" fill="#696969" />
<rect x="1184" y="514" width="1" height="16" fill="#696969" />
<rect x="1183" y="530" width="65" height="1" fill="#ffffff" />
<rect x="1247" y="513" width="1" height="18" fill="#ffffff" />
<rect x="1184" y="529" width="63" height="1" fill="#e3e3e3" />
<rect x="1246" y="514" width="1" height="16" fill="#e3e3e3" />
<text x="1187" y="526" font-size="11.5" fill="#a0a0a0" font-weight="normal" text-anchor="start" font-family="Liberation Sans" >0</text>
<rect x="1264" y="513" width="65" height="18" fill="#f0f0f0" />
<rect x="1264" y="513" width="65" height="1" fill="#a0a0a0" />
<rect x="1264" y="513" width="1" height="18" fill="#a0a0a0" />
<rect x="1265" y="514" width="63" height="1" fill="#696969" />
<rect x="1265" y="514" width="1" height="16" fill="#696969" />
<rect x="1264" y="530" width="65" height="1" fill="#ffffff" />
<rect x="1328" y="513" width="1" height="18" fill="#ffffff" />
<rect x="1265" y="529" width="63" height="1" fill="#e3e3e3" />
<rect x="1327" y="514" width="1" height="16" fill="#e3e3e3" />
<text x="1268" y="526" font-size="11.5" fill="#a0a0a0" font-weight="normal" text-anchor="start" font-family="Liberation Sans" >0</text>
<text x="1108" y="556" font-size="11.5" fill="#000" font-weight="normal" text-anchor="start" font-family="Liberation Sans" textLength="54" lengthAdjust="spacingAndGlyphs" >Duration (s)</text>
<rect x="1171" y="543" width="66" height="20" fill="#f0f0f0" />
<rect x="1171" y="543" width="66" height="1" fill="#a0a0a0" />
<rect x="1171" y="543" width="1" height="20" fill="#a0a0a0" />
<rect x="1172" y="544" width="64" height="1" fill="#696969" />
<rect x="1172" y="544" width="1" height="18" fill="#696969" />
<rect x="1171" y="562" width="66" height="1" fill="#ffffff" />
<rect x="1236" y="543" width="1" height="20" fill="#ffffff" />
<rect x="1172" y="561" width="64" height="1" fill="#e3e3e3" />
<rect x="1235" y="544" width="1" height="18" fill="#e3e3e3" />
<text x="1175" y="557" font-size="11.5" fill="#a0a0a0" font-weight="normal" text-anchor="start" font-family="Liberation Sans" >1</text>
<rect x="1243" y="546" width="13" height="13" fill="#ffffff" />
<rect x="1243" y="546" width="13" height="1" fill="#a0a0a0" />
<rect x="1243" y="546" width="1" height="13" fill="#a0a0a0" />
<rect x="1244" y="547" width="11" height="1" fill="#696969" />
<rect x="1244" y="547" width="1" height="11" fill="#696969" />
<rect x="1243" y="558" width="13" height="1" fill="#ffffff" />
<rect x="1255" y="546" width="1" height="13" fill="#ffffff" />
<rect x="1244" y="557" width="11" height="1" fill="#e3e3e3" />
<rect x="1254" y="547" width="1" height="11" fill="#e3e3e3" />
<path d="M1246,552 L1248.5,554.5 L1253,549.5" fill="none" stroke="#000" stroke-width="2"/>
<text x="1262" y="557" font-size="11.5" fill="#000" font-weight="normal" text-anchor="start" font-family="Liberation Sans" textLength="24" lengthAdjust="spacingAndGlyphs" >Loop</text>
<rect x="1299" y="546" width="13" height="13" fill="#f0f0f0" />
<rect x="1299" y="546" width="13" height="1" fill="#a0a0a0" />
<rect x="1299" y="546" width="1" height="13" fill="#a0a0a0" />
<rect x="1300" y="547" width="11" height="1" fill="#696969" />
<rect x="1300" y="547" width="1" height="11" fill="#696969" />
<rect x="1299" y="558" width="13" height="1" fill="#ffffff" />
<rect x="1311" y="546" width="1" height="13" fill="#ffffff" />
<rect x="1300" y="557" width="11" height="1" fill="#e3e3e3" />
<rect x="1310" y="547" width="1" height="11" fill="#e3e3e3" />
<path d="M1302,552 L1304.5,554.5 L1309,549.5" fill="none" stroke="#a0a0a0" stroke-width="2"/>
<text x="1317" y="557" font-size="11.5" fill="#a0a0a0" font-weight="normal" text-anchor="start" font-family="Liberation Sans" textLength="23" lengthAdjust="spacingAndGlyphs" >DDS</text>
<rect x="1107" y="570" width="13" height="13" fill="#ffffff" />
<rect x="1107" y="570" width="13" height="1" fill="#a0a0a0" />
<rect x="1107" y="570" width="1" height="13" fill="#a0a0a0" />
<rect x="1108" y="571" width="11" height="1" fill="#696969" />
<rect x="1108" y="571" width="1" height="11" fill="#696969" />
<rect x="1107" y="582" width="13" height="1" fill="#ffffff" />
<rect x="1119" y="570" width="1" height="13" fill="#ffffff" />
<rect x="1108" y="581" width="11" height="1" fill="#e3e3e3" />
<rect x="1118" y="571" width="1" height="11" fill="#e3e3e3" />
<text x="1125" y="581" font-size="11.5" fill="#000" font-weight="normal" text-anchor="start" font-family="Liberation Sans" textLength="33" lengthAdjust="spacingAndGlyphs" >Sweep</text>
<circle cx="1189.5" cy="576" r="5.5" fill="#f0f0f0" stroke="#b0b0b0"/><circle cx="1189.5" cy="576" r="2" fill="#a0a0a0"/>
<text x="1201" y="582" font-size="11.5" fill="#a0a0a0" font-weight="normal" text-anchor="start" font-family="Liberation Sans" textLength="50" lengthAdjust="spacingAndGlyphs" >Frequency</text>
<circle cx="1270.5" cy="576" r="5.5" fill="#f0f0f0" stroke="#b0b0b0"/>
<text x="1282" y="582" font-size="11.5" fill="#a0a0a0" font-weight="normal" text-anchor="start" font-family="Liberation Sans" textLength="47" lengthAdjust="spacingAndGlyphs" >Amplitude</text></svg></body></html>
